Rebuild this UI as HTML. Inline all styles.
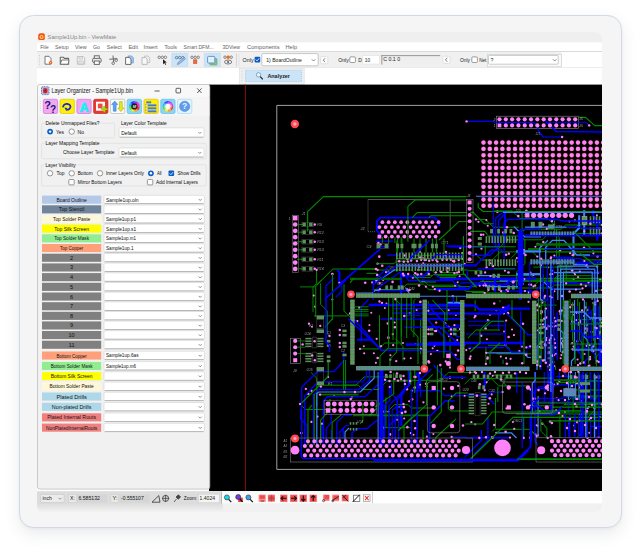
<!DOCTYPE html>
<html lang="en"><head><meta charset="utf-8"><title>ViewMate - Layer Organizer</title>
<style>
html,body{margin:0;padding:0;background:#fff;}
body{width:641px;height:551px;overflow:hidden;position:relative;font-family:"Liberation Sans",sans-serif;}
.card{position:absolute;left:19.2px;top:14.8px;width:602.6px;height:513.6px;border-radius:14.5px;background:#f5f5f6;border:1px solid #d3d9e2;box-sizing:border-box;box-shadow:0 6px 16px rgba(60,70,90,.11),0 1px 3px rgba(60,70,90,.05);}
svg{position:absolute;left:0;top:0;}
svg text{font-family:"Liberation Sans",sans-serif;}
</style></head><body>
<div class="card"></div>
<svg width="641" height="551" viewBox="0 0 641 551">
<defs>
<clipPath id="shot"><rect x="37" y="32" width="565" height="480" rx="6"/></clipPath>
<filter id="soft" x="0" y="0" width="100%" height="100%" filterUnits="userSpaceOnUse"><feGaussianBlur stdDeviation="0.35"/></filter>
<clipPath id="pcbclip"><rect x="210" y="84.5" width="392" height="406.7"/></clipPath>
</defs>
<g clip-path="url(#shot)">
<rect x="37.00" y="32.00" width="566.00" height="480.00" fill="#ffffff" />
<rect x="37.00" y="32.00" width="566.00" height="10.60" fill="#efefef" />
<rect x="38.20" y="33.30" width="6.60" height="6.80" fill="#f4511e" rx="1.5" />
<circle cx="41.50" cy="36.90" r="2.00" fill="#ffd54f" />
<circle cx="41.50" cy="36.90" r="0.90" fill="#f4511e" />
<text x="47.60" y="39.40" font-size="6.0" fill="#858585" textLength="68.60" lengthAdjust="spacingAndGlyphs" >Sample1Up.bin - ViewMate</text>
<rect x="37.00" y="42.60" width="566.00" height="8.70" fill="#ffffff" />
<text x="40.20" y="48.90" font-size="5.7" fill="#5e5e5e" textLength="8.40" lengthAdjust="spacingAndGlyphs" >File</text>
<text x="55.00" y="48.90" font-size="5.7" fill="#5e5e5e" textLength="13.70" lengthAdjust="spacingAndGlyphs" >Setup</text>
<text x="75.00" y="48.90" font-size="5.7" fill="#5e5e5e" textLength="11.50" lengthAdjust="spacingAndGlyphs" >View</text>
<text x="93.00" y="48.90" font-size="5.7" fill="#5e5e5e" textLength="7.00" lengthAdjust="spacingAndGlyphs" >Go</text>
<text x="106.80" y="48.90" font-size="5.7" fill="#5e5e5e" textLength="15.00" lengthAdjust="spacingAndGlyphs" >Select</text>
<text x="128.40" y="48.90" font-size="5.7" fill="#5e5e5e" textLength="9.60" lengthAdjust="spacingAndGlyphs" >Edit</text>
<text x="143.60" y="48.90" font-size="5.7" fill="#5e5e5e" textLength="14.00" lengthAdjust="spacingAndGlyphs" >Insert</text>
<text x="164.50" y="48.90" font-size="5.7" fill="#5e5e5e" textLength="12.50" lengthAdjust="spacingAndGlyphs" >Tools</text>
<text x="183.60" y="48.90" font-size="5.7" fill="#5e5e5e" textLength="30.00" lengthAdjust="spacingAndGlyphs" >Smart DFM...</text>
<text x="222.50" y="48.90" font-size="5.7" fill="#5e5e5e" textLength="17.50" lengthAdjust="spacingAndGlyphs" >3DView</text>
<text x="247.00" y="48.90" font-size="5.7" fill="#5e5e5e" textLength="32.50" lengthAdjust="spacingAndGlyphs" >Components</text>
<text x="285.50" y="48.90" font-size="5.7" fill="#5e5e5e" textLength="11.50" lengthAdjust="spacingAndGlyphs" >Help</text>
<rect x="37.00" y="51.20" width="566.00" height="1.00" fill="#d2d2d2" />
<rect x="37.00" y="52.00" width="524.50" height="15.60" fill="#f0f0f0" />
<rect x="561.50" y="52.00" width="41.50" height="15.60" fill="#ffffff" />
<rect x="37.00" y="67.40" width="566.00" height="0.80" fill="#e2e2e2" />
<rect x="39.20" y="55.00" width="0.80" height="0.90" fill="#c4c4c4" />
<rect x="39.20" y="57.20" width="0.80" height="0.90" fill="#c4c4c4" />
<rect x="39.20" y="59.40" width="0.80" height="0.90" fill="#c4c4c4" />
<rect x="39.20" y="61.60" width="0.80" height="0.90" fill="#c4c4c4" />
<rect x="39.20" y="63.80" width="0.80" height="0.90" fill="#c4c4c4" />
<path d="M45 56.3h4l2 2.2v5.7h-6z" fill="#fff" stroke="#6a6a6a" stroke-width="0.9" stroke-linejoin="round"/>
<circle cx="50.60" cy="62.60" r="1.70" fill="#ff5a1f" />
<circle cx="50.60" cy="62.60" r="0.70" fill="#ffd54f" />
<path d="M60.3 64.2v-7h3l1 1.2h4.3v5.8z" fill="#fffbe8" stroke="#6a6a6a" stroke-width="1.1" stroke-linejoin="round"/>
<path d="M60.3 64.2l1.4-4.2h7.3l-0.9 4.2z" fill="#fff" stroke="#6a6a6a" stroke-width="0.9" stroke-linejoin="round"/>
<path d="M77.3 56.5h6l1.4 1.4v6.3h-7.4z" fill="#f4f4f4" stroke="#bdbdbd" stroke-width="0.9"/>
<rect x="79.00" y="56.70" width="3.40" height="2.40" fill="#e4e4e4" stroke="#bdbdbd" stroke-width="0.6" />
<rect x="78.70" y="61.00" width="4.60" height="3.00" fill="#e4e4e4" stroke="#bdbdbd" stroke-width="0.6" />
<rect x="94.30" y="55.80" width="5.00" height="3.00" fill="#fff" stroke="#6a6a6a" stroke-width="1" />
<rect x="92.60" y="58.30" width="8.50" height="4.20" fill="#e9e9e9" stroke="#6a6a6a" stroke-width="1" rx="1.2" />
<rect x="94.30" y="61.00" width="5.00" height="3.40" fill="#fff" stroke="#6a6a6a" stroke-width="1" />
<line x1="113.00" y1="55.50" x2="113.60" y2="62.00" stroke="#6a6a6a" stroke-width="1" />
<line x1="109.30" y1="59.30" x2="117.30" y2="58.60" stroke="#6a6a6a" stroke-width="1" />
<circle cx="113.20" cy="63.20" r="1.30" fill="none" stroke="#6a6a6a" stroke-width="0.9" />
<circle cx="116.20" cy="60.20" r="1.30" fill="none" stroke="#6a6a6a" stroke-width="0.9" />
<path d="M128 55.9h3.6l1.8 1.8v5.3h-5.4z" fill="#9cc4ec" stroke="#6a9fd6" stroke-width="0.7"/>
<path d="M125.6 57.4h3.6l1.8 1.8v5.2h-5.4z" fill="#fff" stroke="#6a6a6a" stroke-width="1"/>
<path d="M144.5 56h3.6l1.6 1.6v5h-5.2z" fill="#ececec" stroke="#bdbdbd" stroke-width="0.8"/>
<path d="M142 57.6h3.6l1.6 1.6v5.2h-5.2z" fill="#f7f7f7" stroke="#b5b5b5" stroke-width="0.9"/>
<circle cx="159.20" cy="57.30" r="1.25" fill="none" stroke="#6a6a6a" stroke-width="0.8" />
<circle cx="162.30" cy="57.30" r="1.25" fill="none" stroke="#6a6a6a" stroke-width="0.8" />
<circle cx="165.40" cy="57.30" r="1.25" fill="none" stroke="#6a6a6a" stroke-width="0.8" />
<path d="M163 59.2v5l1.3-1.2 1 2 .8-.4-1-2h1.8z" fill="#222"/>
<rect x="171.80" y="53.40" width="16.00" height="13.00" fill="#cce4f7" stroke="#9ccaf0" stroke-width="0.7" stroke-dasharray="1 1"/>
<circle cx="176.60" cy="57.60" r="1.25" fill="none" stroke="#4a6a8a" stroke-width="0.8" />
<circle cx="179.70" cy="57.60" r="1.25" fill="none" stroke="#4a6a8a" stroke-width="0.8" />
<circle cx="182.80" cy="57.60" r="1.25" fill="none" stroke="#4a6a8a" stroke-width="0.8" />
<path d="M177.3 64.6l1-2.4 6-4.8 1.2 1.4-6 4.9z" fill="#9cc0e6" stroke="#5a7fa8" stroke-width="0.6"/>
<circle cx="192.00" cy="57.30" r="1.25" fill="none" stroke="#6a6a6a" stroke-width="0.8" />
<circle cx="195.10" cy="57.30" r="1.25" fill="none" stroke="#6a6a6a" stroke-width="0.8" />
<circle cx="198.20" cy="57.30" r="1.25" fill="none" stroke="#6a6a6a" stroke-width="0.8" />
<rect x="193.50" y="59.80" width="3.40" height="3.80" fill="#ee6a3a" stroke="#c8442a" stroke-width="0.5" />
<rect x="204.30" y="53.40" width="16.00" height="13.00" fill="#cce4f7" stroke="#9ccaf0" stroke-width="0.7" stroke-dasharray="1 1"/>
<rect x="209.80" y="58.60" width="7.20" height="6.40" fill="#86c488" stroke="#5aa45e" stroke-width="0.6" rx="0.8" />
<rect x="207.60" y="56.40" width="7.20" height="6.60" fill="#e2f0fc" stroke="#5a8cc8" stroke-width="0.9" rx="0.8" />
<circle cx="225.00" cy="57.20" r="1.25" fill="none" stroke="#6a6a6a" stroke-width="0.8" />
<circle cx="228.10" cy="57.20" r="1.35" fill="#ff7a1a" stroke="#e65100" stroke-width="0.6" />
<circle cx="231.20" cy="57.20" r="1.25" fill="none" stroke="#6a6a6a" stroke-width="0.8" />
<ellipse cx="228.1" cy="62" rx="3.6" ry="2" fill="none" stroke="#6a6a6a" stroke-width="0.9"/>
<circle cx="228.10" cy="62.00" r="1.00" fill="#555" />
<rect x="236.20" y="53.50" width="0.70" height="13.00" fill="#c8c8c8" />
<rect x="238.60" y="53.50" width="0.70" height="13.00" fill="#dedede" />
<text x="242.60" y="61.60" font-size="5" fill="#222" textLength="11.00" lengthAdjust="spacingAndGlyphs" >Only</text>
<rect x="254.60" y="56.80" width="5.60" height="5.60" fill="#0a5fc4" rx="1" />
<path d="M255.8 59.6l1.2 1.3 2.1-2.5" fill="none" stroke="#fff" stroke-width="0.8"/>
<rect x="261.80" y="53.60" width="56.40" height="12.20" fill="#ffffff" stroke="#b9b9b9" stroke-width="0.8" rx="1.2" />
<text x="266.30" y="61.70" font-size="5" fill="#222" textLength="35.50" lengthAdjust="spacingAndGlyphs" >1) BoardOutline</text>
<path d="M311.8 59.3l1.7 1.7 1.7-1.7" fill="none" stroke="#555" stroke-width="0.7"/>
<rect x="320.60" y="56.60" width="7.20" height="7.20" fill="#fdfdfd" stroke="#d9d9d9" stroke-width="0.7" rx="1" />
<path d="M325 58.3l-1.7 1.9 1.7 1.9" fill="none" stroke="#444" stroke-width="0.7"/>
<text x="338.30" y="61.60" font-size="5" fill="#222" textLength="10.50" lengthAdjust="spacingAndGlyphs" >Only</text>
<rect x="349.80" y="56.90" width="5.60" height="5.60" fill="#fff" stroke="#777" stroke-width="0.7" rx="1" />
<text x="358.20" y="61.60" font-size="5" fill="#222" >D</text>
<rect x="362.80" y="55.60" width="16.60" height="8.40" fill="#fff" stroke="#e0e0e0" stroke-width="0.6" />
<text x="364.80" y="61.60" font-size="5" fill="#222" textLength="5.40" lengthAdjust="spacingAndGlyphs" >10</text>
<rect x="381.40" y="55.20" width="58.80" height="9.40" fill="#efefef" />
<rect x="381.40" y="55.20" width="58.80" height="0.90" fill="#8e8e8e" />
<rect x="381.40" y="55.20" width="0.90" height="9.40" fill="#8e8e8e" />
<text x="383.20" y="61.00" font-size="5" fill="#222" textLength="17.00" lengthAdjust="spacingAndGlyphs" >C 0.1  0</text>
<rect x="442.80" y="56.20" width="7.20" height="7.20" fill="#fdfdfd" stroke="#d9d9d9" stroke-width="0.7" rx="1" />
<path d="M447.2 57.9l-1.7 1.9 1.7 1.9" fill="none" stroke="#444" stroke-width="0.7"/>
<text x="460.00" y="61.60" font-size="5" fill="#222" textLength="10.00" lengthAdjust="spacingAndGlyphs" >Only</text>
<rect x="471.80" y="56.90" width="5.60" height="5.60" fill="#fff" stroke="#777" stroke-width="0.7" rx="1" />
<text x="479.20" y="61.60" font-size="5" fill="#222" textLength="7.20" lengthAdjust="spacingAndGlyphs" >Net</text>
<rect x="487.40" y="54.40" width="74.00" height="12.40" fill="#fafafa" stroke="#cfcfcf" stroke-width="0.7" />
<rect x="488.40" y="55.40" width="69.80" height="8.80" fill="#fff" stroke="#b5b5b5" stroke-width="0.7" rx="1" />
<text x="490.40" y="62.00" font-size="5.2" fill="#222" >?</text>
<path d="M553 59.3l1.7 1.7 1.7-1.7" fill="none" stroke="#555" stroke-width="0.7"/>
<rect x="37.00" y="68.20" width="566.00" height="16.40" fill="#ffffff" />
<rect x="239.40" y="68.60" width="64.80" height="15.80" fill="#f0f0f0" stroke="#dcdcdc" stroke-width="0.6" />
<rect x="241.60" y="71.00" width="0.80" height="0.90" fill="#c4c4c4" />
<rect x="241.60" y="73.20" width="0.80" height="0.90" fill="#c4c4c4" />
<rect x="241.60" y="75.40" width="0.80" height="0.90" fill="#c4c4c4" />
<rect x="241.60" y="77.60" width="0.80" height="0.90" fill="#c4c4c4" />
<rect x="241.60" y="79.80" width="0.80" height="0.90" fill="#c4c4c4" />
<rect x="245.40" y="70.30" width="56.30" height="11.30" fill="#cce4f7" stroke="#8fc2ee" stroke-width="0.7" stroke-dasharray="1 1"/>
<circle cx="258.60" cy="74.80" r="2.20" fill="#e8f4ff" stroke="#5f86ad" stroke-width="0.7" />
<line x1="260.20" y1="76.60" x2="262.80" y2="79.40" stroke="#222" stroke-width="1.3" />
<text x="267.40" y="78.00" font-size="5.6" fill="#222" textLength="22.60" lengthAdjust="spacingAndGlyphs" font-weight="bold" >Analyzer</text>
<rect x="209.00" y="84.60" width="394.00" height="406.60" fill="#000000" />
<g clip-path="url(#pcbclip)"><g filter="url(#soft)">
<line x1="245.40" y1="84.00" x2="245.40" y2="492.00" stroke="#9a1010" stroke-width="0.9" />
<polyline points="604.0,105.4 276.8,105.4 276.8,469.4 604.0,469.4" fill="none" stroke="#b4b4b4" stroke-width="0.9" />
<polyline points="467.2,289.7 429.0,289.7 423.4,284.1 406.9,284.1 401.5,289.5 372.6,289.5" fill="none" stroke="#008a00" stroke-width="0.9774999999999999" stroke-linejoin="round"/>
<polyline points="593.3,285.0 554.2,285.0 551.3,288.0 510.5,288.0 505.5,293.0 484.1,293.0" fill="none" stroke="#008a00" stroke-width="0.9774999999999999" stroke-linejoin="round"/>
<polyline points="513.5,281.5 480.6,281.5 475.4,286.6 432.8,286.6" fill="none" stroke="#008a00" stroke-width="0.9774999999999999" stroke-linejoin="round"/>
<circle cx="432.84" cy="286.64" r="1.16" fill="#ff82f8" />
<polyline points="482.2,270.7 468.4,270.7 467.7,270.0 457.1,270.0" fill="none" stroke="#008a00" stroke-width="0.9774999999999999" stroke-linejoin="round"/>
<polyline points="471.6,292.5 484.2,292.5 484.6,293.0" fill="none" stroke="#008a00" stroke-width="0.9774999999999999" stroke-linejoin="round"/>
<circle cx="484.62" cy="293.00" r="1.16" fill="#ff82f8" />
<polyline points="359.7,279.4 356.0,279.4" fill="none" stroke="#008a00" stroke-width="0.9774999999999999" stroke-linejoin="round"/>
<polyline points="466.1,274.4 433.5,274.4 430.3,277.6 412.8,277.6" fill="none" stroke="#008a00" stroke-width="0.9774999999999999" stroke-linejoin="round"/>
<circle cx="412.83" cy="277.64" r="1.16" fill="#ff82f8" />
<polyline points="366.4,273.4 376.7,273.4 383.2,279.8" fill="none" stroke="#008a00" stroke-width="0.9774999999999999" stroke-linejoin="round"/>
<circle cx="383.16" cy="279.83" r="1.16" fill="#ff82f8" />
<polyline points="499.4,275.6 531.1,275.6 534.5,278.9 573.6,278.9" fill="none" stroke="#008a00" stroke-width="0.9774999999999999" stroke-linejoin="round"/>
<circle cx="573.59" cy="278.92" r="1.16" fill="#ff82f8" />
<polyline points="432.5,275.3 416.9,275.3 411.7,270.0 377.6,270.0" fill="none" stroke="#008a00" stroke-width="0.9774999999999999" stroke-linejoin="round"/>
<circle cx="377.62" cy="270.00" r="1.16" fill="#ff82f8" />
<polyline points="459.7,272.4 441.3,272.4 438.9,270.0" fill="none" stroke="#008a00" stroke-width="0.9774999999999999" stroke-linejoin="round"/>
<polyline points="483.9,291.4 465.9,291.4 459.8,285.2 428.3,285.2 424.0,280.9" fill="none" stroke="#008a00" stroke-width="0.9774999999999999" stroke-linejoin="round"/>
<circle cx="423.99" cy="280.92" r="1.16" fill="#ff82f8" />
<polyline points="457.2,275.7 437.3,275.7 431.6,270.0 418.4,270.0" fill="none" stroke="#008a00" stroke-width="0.9774999999999999" stroke-linejoin="round"/>
<circle cx="418.39" cy="270.00" r="1.16" fill="#ff82f8" />
<polyline points="501.1,291.2 535.6,291.2 544.4,282.5 576.7,282.5" fill="none" stroke="#0000ff" stroke-width="1.2320000000000002" stroke-linejoin="round"/>
<circle cx="501.11" cy="291.24" r="1.16" fill="#ff82f8" />
<polyline points="467.5,278.5 467.5,270.0" fill="none" stroke="#0000ff" stroke-width="1.2320000000000002" stroke-linejoin="round"/>
<polyline points="568.4,283.2 598.8,283.2 602.0,280.0" fill="none" stroke="#0000ff" stroke-width="1.2320000000000002" stroke-linejoin="round"/>
<polyline points="585.8,286.0 602.0,286.0" fill="none" stroke="#0000ff" stroke-width="1.2320000000000002" stroke-linejoin="round"/>
<circle cx="585.83" cy="285.97" r="1.16" fill="#ff82f8" />
<polyline points="478.3,284.1 519.7,284.1 524.6,279.2" fill="none" stroke="#0000ff" stroke-width="1.2320000000000002" stroke-linejoin="round"/>
<polyline points="478.6,275.6 495.5,275.6 500.8,280.9 542.8,280.9 551.1,289.1 581.5,289.1" fill="none" stroke="#3c82ff" stroke-width="1.2320000000000002" stroke-linejoin="round"/>
<circle cx="478.58" cy="275.55" r="1.16" fill="#ff82f8" />
<polyline points="531.0,291.9 531.0,293.0" fill="none" stroke="#0000ff" stroke-width="1.2320000000000002" stroke-linejoin="round"/>
<polyline points="434.8,289.1 468.5,289.1 472.9,284.7 505.6,284.7 511.8,278.6 535.9,278.6" fill="none" stroke="#0000ff" stroke-width="2.0944000000000003" stroke-linejoin="round"/>
<circle cx="434.81" cy="289.06" r="1.16" fill="#ff82f8" />
<polyline points="598.1,272.7 554.5,272.7 551.9,270.0" fill="none" stroke="#3c82ff" stroke-width="1.2320000000000002" stroke-linejoin="round"/>
<circle cx="598.07" cy="272.65" r="1.16" fill="#ff82f8" />
<polyline points="400.1,276.3 423.8,276.3 430.1,270.0" fill="none" stroke="#0000ff" stroke-width="2.0944000000000003" stroke-linejoin="round"/>
<polyline points="404.4,290.4 375.2,290.4 372.6,293.0 356.0,293.0" fill="none" stroke="#3c82ff" stroke-width="1.2320000000000002" stroke-linejoin="round"/>
<polyline points="408.5,290.7 379.7,290.7 377.4,293.0" fill="none" stroke="#0000ff" stroke-width="1.2320000000000002" stroke-linejoin="round"/>
<circle cx="408.47" cy="290.70" r="1.16" fill="#ff82f8" />
<circle cx="376.36" cy="280.14" r="1.28" fill="#ff82f8" />
<circle cx="459.67" cy="276.33" r="1.04" fill="#ff82f8" />
<circle cx="409.70" cy="289.95" r="1.16" fill="#ff82f8" />
<circle cx="552.77" cy="273.98" r="1.16" fill="#ff82f8" />
<circle cx="524.90" cy="291.07" r="1.16" fill="#ff82f8" />
<circle cx="392.57" cy="281.88" r="1.28" fill="#ff82f8" />
<circle cx="483.48" cy="285.59" r="1.16" fill="#ff82f8" />
<circle cx="588.65" cy="281.33" r="1.28" fill="#ff82f8" />
<circle cx="377.16" cy="275.09" r="1.28" fill="#ff82f8" />
<circle cx="493.46" cy="289.12" r="1.28" fill="#ff82f8" />
<circle cx="513.16" cy="282.02" r="1.28" fill="#ff82f8" />
<circle cx="419.10" cy="285.44" r="1.28" fill="#ff82f8" />
<circle cx="407.23" cy="289.57" r="1.28" fill="#ff82f8" />
<circle cx="484.96" cy="283.18" r="1.04" fill="#ff82f8" />
<circle cx="457.13" cy="272.63" r="1.04" fill="#ff82f8" />
<circle cx="504.89" cy="270.64" r="1.04" fill="#ff82f8" />
<circle cx="482.94" cy="279.21" r="1.28" fill="#ff82f8" />
<circle cx="386.00" cy="272.14" r="1.04" fill="#ff82f8" />
<circle cx="372.21" cy="282.39" r="1.16" fill="#ff82f8" />
<circle cx="582.51" cy="288.41" r="1.16" fill="#ff82f8" />
<circle cx="422.23" cy="280.88" r="1.04" fill="#ff82f8" />
<circle cx="439.56" cy="290.72" r="1.16" fill="#ff82f8" />
<circle cx="485.15" cy="272.50" r="1.16" fill="#ff82f8" />
<circle cx="508.00" cy="291.28" r="1.04" fill="#ff82f8" />
<circle cx="528.72" cy="292.48" r="1.04" fill="#ff82f8" />
<circle cx="403.75" cy="275.23" r="1.28" fill="#ff82f8" />
<circle cx="425.88" cy="286.64" r="1.04" fill="#ff82f8" />
<circle cx="508.46" cy="272.41" r="1.28" fill="#ff82f8" />
<circle cx="499.23" cy="289.59" r="1.28" fill="#ff82f8" />
<circle cx="417.64" cy="274.55" r="1.28" fill="#ff82f8" />
<circle cx="572.17" cy="270.53" r="1.28" fill="#ff82f8" />
<circle cx="457.70" cy="282.17" r="1.04" fill="#ff82f8" />
<circle cx="488.39" cy="289.87" r="1.28" fill="#ff82f8" />
<circle cx="513.06" cy="282.18" r="1.28" fill="#ff82f8" />
<circle cx="506.48" cy="289.71" r="1.04" fill="#ff82f8" />
<circle cx="581.05" cy="284.44" r="1.16" fill="#ff82f8" />
<circle cx="578.06" cy="277.27" r="1.16" fill="#ff82f8" />
<circle cx="575.10" cy="274.48" r="1.04" fill="#ff82f8" />
<circle cx="574.34" cy="273.08" r="1.04" fill="#ff82f8" />
<circle cx="388.61" cy="272.03" r="1.16" fill="#ff82f8" />
<circle cx="379.87" cy="289.14" r="1.16" fill="#ff82f8" />
<circle cx="489.65" cy="286.21" r="1.04" fill="#ff82f8" />
<circle cx="455.08" cy="285.76" r="1.04" fill="#ff82f8" />
<circle cx="379.63" cy="283.11" r="1.16" fill="#ff82f8" />
<circle cx="580.20" cy="292.27" r="1.04" fill="#ff82f8" />
<circle cx="529.36" cy="284.60" r="1.16" fill="#ff82f8" />
<circle cx="479.69" cy="285.77" r="1.04" fill="#ff82f8" />
<circle cx="553.50" cy="281.09" r="1.04" fill="#ff82f8" />
<circle cx="365.21" cy="282.69" r="1.28" fill="#ff82f8" />
<circle cx="578.65" cy="281.07" r="1.04" fill="#ff82f8" />
<polyline points="494.0,210.9 512.2,210.9 520.0,218.7 548.0,218.7 554.1,224.8" fill="none" stroke="#008a00" stroke-width="0.9774999999999999" stroke-linejoin="round"/>
<circle cx="554.13" cy="224.79" r="1.16" fill="#ff82f8" />
<polyline points="518.8,227.2 493.4,227.2 485.6,219.4 476.0,219.4" fill="none" stroke="#008a00" stroke-width="0.9774999999999999" stroke-linejoin="round"/>
<circle cx="476.00" cy="219.42" r="1.16" fill="#ff82f8" />
<polyline points="487.5,290.9 487.5,292.0" fill="none" stroke="#008a00" stroke-width="0.9774999999999999" stroke-linejoin="round"/>
<polyline points="545.9,251.6 517.7,251.6 510.9,258.4" fill="none" stroke="#008a00" stroke-width="0.9774999999999999" stroke-linejoin="round"/>
<polyline points="597.9,290.1 602.0,290.1" fill="none" stroke="#008a00" stroke-width="0.9774999999999999" stroke-linejoin="round"/>
<circle cx="602.00" cy="290.06" r="1.16" fill="#ff82f8" />
<polyline points="521.8,251.9 500.4,251.9 492.3,260.0 481.5,260.0 476.0,254.5" fill="none" stroke="#008a00" stroke-width="0.9774999999999999" stroke-linejoin="round"/>
<circle cx="476.00" cy="254.52" r="1.16" fill="#ff82f8" />
<polyline points="498.4,267.1 498.4,248.8 503.2,244.0 503.2,232.5" fill="none" stroke="#008a00" stroke-width="0.9774999999999999" stroke-linejoin="round"/>
<circle cx="503.17" cy="232.47" r="1.16" fill="#ff82f8" />
<polyline points="533.4,267.1 572.1,267.1 575.7,263.6 596.6,263.6 600.3,259.8" fill="none" stroke="#008a00" stroke-width="0.9774999999999999" stroke-linejoin="round"/>
<polyline points="591.3,275.7 557.5,275.7 551.7,281.5 538.3,281.5 533.4,286.3" fill="none" stroke="#008a00" stroke-width="0.9774999999999999" stroke-linejoin="round"/>
<circle cx="533.41" cy="286.32" r="1.16" fill="#ff82f8" />
<polyline points="556.6,228.8 556.6,257.6 560.8,261.8 560.8,292.0" fill="none" stroke="#008a00" stroke-width="0.9774999999999999" stroke-linejoin="round"/>
<polyline points="564.8,227.6 575.6,227.6 578.2,225.0 602.0,225.0" fill="none" stroke="#008a00" stroke-width="0.9774999999999999" stroke-linejoin="round"/>
<circle cx="602.00" cy="225.03" r="1.16" fill="#ff82f8" />
<polyline points="546.6,261.2 569.1,261.2 575.4,254.9" fill="none" stroke="#008a00" stroke-width="0.9774999999999999" stroke-linejoin="round"/>
<polyline points="599.5,262.3 602.0,262.3" fill="none" stroke="#008a00" stroke-width="0.9774999999999999" stroke-linejoin="round"/>
<polyline points="543.4,274.7 543.4,292.0" fill="none" stroke="#008a00" stroke-width="0.9774999999999999" stroke-linejoin="round"/>
<polyline points="554.4,220.2 554.4,232.4 559.2,237.2 559.2,257.2 566.2,264.1 566.2,283.4" fill="none" stroke="#008a00" stroke-width="0.9774999999999999" stroke-linejoin="round"/>
<circle cx="566.16" cy="283.45" r="1.16" fill="#ff82f8" />
<polyline points="522.1,212.4 522.1,237.0 524.9,239.9 524.9,263.6 516.7,271.8 516.7,288.6" fill="none" stroke="#008a00" stroke-width="0.9774999999999999" stroke-linejoin="round"/>
<polyline points="562.7,234.3 547.9,234.3 542.4,239.8 507.1,239.8" fill="none" stroke="#008a00" stroke-width="0.9774999999999999" stroke-linejoin="round"/>
<circle cx="507.07" cy="239.80" r="1.16" fill="#ff82f8" />
<polyline points="580.8,228.7 602.0,228.7" fill="none" stroke="#008a00" stroke-width="0.9774999999999999" stroke-linejoin="round"/>
<polyline points="516.6,251.0 531.7,251.0 537.3,256.6" fill="none" stroke="#008a00" stroke-width="0.9774999999999999" stroke-linejoin="round"/>
<circle cx="537.32" cy="256.59" r="1.16" fill="#ff82f8" />
<polyline points="577.3,233.4 602.0,233.4" fill="none" stroke="#008a00" stroke-width="0.9774999999999999" stroke-linejoin="round"/>
<circle cx="602.00" cy="233.42" r="1.16" fill="#ff82f8" />
<polyline points="582.2,259.9 602.0,259.9" fill="none" stroke="#008a00" stroke-width="0.9774999999999999" stroke-linejoin="round"/>
<polyline points="578.7,225.0 565.4,225.0 561.1,229.2 525.1,229.2 518.3,236.0 486.9,236.0" fill="none" stroke="#008a00" stroke-width="0.9774999999999999" stroke-linejoin="round"/>
<polyline points="584.2,235.5 584.2,210.0" fill="none" stroke="#3c82ff" stroke-width="2.0944000000000003" stroke-linejoin="round"/>
<polyline points="573.5,254.8 573.5,233.8 579.2,228.1 579.2,215.2" fill="none" stroke="#3c82ff" stroke-width="2.0944000000000003" stroke-linejoin="round"/>
<circle cx="573.46" cy="254.79" r="1.16" fill="#ff82f8" />
<polyline points="534.9,262.0 571.7,262.0 574.3,264.7 585.0,264.7 588.5,268.2" fill="none" stroke="#3c82ff" stroke-width="1.2320000000000002" stroke-linejoin="round"/>
<polyline points="597.3,240.7 597.3,220.3 593.3,216.3 593.3,210.0" fill="none" stroke="#0000ff" stroke-width="2.0944000000000003" stroke-linejoin="round"/>
<polyline points="550.7,258.1 550.7,282.0 546.1,286.7" fill="none" stroke="#0000ff" stroke-width="1.2320000000000002" stroke-linejoin="round"/>
<circle cx="550.74" cy="258.14" r="1.16" fill="#ff82f8" />
<polyline points="596.0,290.9 596.0,292.0" fill="none" stroke="#3c82ff" stroke-width="1.2320000000000002" stroke-linejoin="round"/>
<circle cx="596.05" cy="290.91" r="1.16" fill="#ff82f8" />
<polyline points="580.1,272.1 602.0,272.1" fill="none" stroke="#0000ff" stroke-width="1.2320000000000002" stroke-linejoin="round"/>
<polyline points="505.0,241.6 505.0,210.0" fill="none" stroke="#0000ff" stroke-width="2.0944000000000003" stroke-linejoin="round"/>
<polyline points="551.1,257.3 570.4,257.3 575.2,262.1 595.1,262.1" fill="none" stroke="#0000ff" stroke-width="1.2320000000000002" stroke-linejoin="round"/>
<circle cx="551.08" cy="257.33" r="1.16" fill="#ff82f8" />
<polyline points="594.5,260.9 602.0,260.9" fill="none" stroke="#0000ff" stroke-width="1.2320000000000002" stroke-linejoin="round"/>
<polyline points="585.1,223.4 602.0,223.4" fill="none" stroke="#0000ff" stroke-width="1.2320000000000002" stroke-linejoin="round"/>
<circle cx="585.06" cy="223.42" r="1.16" fill="#ff82f8" />
<polyline points="556.3,258.4 580.0,258.4 588.6,266.9" fill="none" stroke="#0000ff" stroke-width="1.2320000000000002" stroke-linejoin="round"/>
<polyline points="550.4,274.3 550.4,292.0" fill="none" stroke="#0000ff" stroke-width="1.2320000000000002" stroke-linejoin="round"/>
<circle cx="550.37" cy="274.32" r="1.16" fill="#ff82f8" />
<polyline points="495.1,278.6 495.1,292.0" fill="none" stroke="#0000ff" stroke-width="2.0944000000000003" stroke-linejoin="round"/>
<circle cx="506.95" cy="227.28" r="1.28" fill="#ff82f8" />
<circle cx="523.84" cy="250.20" r="1.28" fill="#ff82f8" />
<circle cx="487.74" cy="225.79" r="1.04" fill="#ff82f8" />
<circle cx="523.87" cy="253.36" r="1.16" fill="#ff82f8" />
<circle cx="593.41" cy="253.33" r="1.16" fill="#ff82f8" />
<circle cx="574.96" cy="220.32" r="1.04" fill="#ff82f8" />
<circle cx="572.43" cy="255.24" r="1.04" fill="#ff82f8" />
<circle cx="508.85" cy="253.77" r="1.16" fill="#ff82f8" />
<circle cx="489.68" cy="260.62" r="1.04" fill="#ff82f8" />
<circle cx="597.50" cy="256.58" r="1.28" fill="#ff82f8" />
<circle cx="483.29" cy="234.70" r="1.16" fill="#ff82f8" />
<circle cx="524.39" cy="279.01" r="1.04" fill="#ff82f8" />
<circle cx="485.79" cy="285.46" r="1.28" fill="#ff82f8" />
<circle cx="533.33" cy="274.67" r="1.28" fill="#ff82f8" />
<circle cx="526.35" cy="210.67" r="1.28" fill="#ff82f8" />
<circle cx="522.94" cy="283.83" r="1.04" fill="#ff82f8" />
<circle cx="518.27" cy="215.96" r="1.28" fill="#ff82f8" />
<circle cx="554.42" cy="291.21" r="1.04" fill="#ff82f8" />
<circle cx="513.75" cy="232.95" r="1.28" fill="#ff82f8" />
<circle cx="570.09" cy="252.99" r="1.28" fill="#ff82f8" />
<circle cx="561.33" cy="281.27" r="1.28" fill="#ff82f8" />
<circle cx="597.21" cy="266.78" r="1.16" fill="#ff82f8" />
<circle cx="486.34" cy="220.11" r="1.04" fill="#ff82f8" />
<circle cx="490.47" cy="276.23" r="1.04" fill="#ff82f8" />
<circle cx="551.96" cy="221.00" r="1.28" fill="#ff82f8" />
<circle cx="543.13" cy="224.52" r="1.16" fill="#ff82f8" />
<circle cx="599.22" cy="228.32" r="1.16" fill="#ff82f8" />
<circle cx="478.46" cy="221.85" r="1.16" fill="#ff82f8" />
<circle cx="547.73" cy="267.49" r="1.04" fill="#ff82f8" />
<circle cx="579.82" cy="271.58" r="1.16" fill="#ff82f8" />
<circle cx="530.48" cy="272.63" r="1.04" fill="#ff82f8" />
<circle cx="497.35" cy="211.70" r="1.28" fill="#ff82f8" />
<circle cx="520.73" cy="233.99" r="1.28" fill="#ff82f8" />
<circle cx="537.75" cy="244.02" r="1.16" fill="#ff82f8" />
<circle cx="481.05" cy="234.82" r="1.28" fill="#ff82f8" />
<circle cx="554.37" cy="255.49" r="1.04" fill="#ff82f8" />
<circle cx="513.63" cy="281.50" r="1.16" fill="#ff82f8" />
<circle cx="493.55" cy="278.78" r="1.16" fill="#ff82f8" />
<circle cx="506.14" cy="254.72" r="1.28" fill="#ff82f8" />
<circle cx="588.56" cy="282.52" r="1.04" fill="#ff82f8" />
<circle cx="596.92" cy="215.41" r="1.04" fill="#ff82f8" />
<circle cx="569.62" cy="291.48" r="1.28" fill="#ff82f8" />
<circle cx="518.90" cy="231.94" r="1.04" fill="#ff82f8" />
<circle cx="531.09" cy="284.74" r="1.16" fill="#ff82f8" />
<circle cx="518.49" cy="261.77" r="1.16" fill="#ff82f8" />
<circle cx="559.20" cy="249.36" r="1.04" fill="#ff82f8" />
<circle cx="584.40" cy="260.93" r="1.04" fill="#ff82f8" />
<circle cx="560.27" cy="250.47" r="1.04" fill="#ff82f8" />
<circle cx="540.81" cy="265.23" r="1.16" fill="#ff82f8" />
<circle cx="543.27" cy="241.97" r="1.16" fill="#ff82f8" />
<circle cx="600.09" cy="279.34" r="1.28" fill="#ff82f8" />
<circle cx="492.98" cy="265.97" r="1.28" fill="#ff82f8" />
<circle cx="535.42" cy="246.71" r="1.04" fill="#ff82f8" />
<circle cx="490.45" cy="263.30" r="1.04" fill="#ff82f8" />
<circle cx="498.15" cy="261.18" r="1.16" fill="#ff82f8" />
<circle cx="535.18" cy="285.71" r="1.16" fill="#ff82f8" />
<circle cx="541.09" cy="245.58" r="1.16" fill="#ff82f8" />
<circle cx="590.43" cy="223.85" r="1.28" fill="#ff82f8" />
<circle cx="557.91" cy="263.31" r="1.04" fill="#ff82f8" />
<circle cx="486.60" cy="267.51" r="1.28" fill="#ff82f8" />
<circle cx="516.86" cy="258.14" r="1.04" fill="#ff82f8" />
<circle cx="481.46" cy="248.69" r="1.16" fill="#ff82f8" />
<circle cx="569.42" cy="221.47" r="1.04" fill="#ff82f8" />
<circle cx="584.05" cy="247.75" r="1.28" fill="#ff82f8" />
<circle cx="546.81" cy="228.82" r="1.16" fill="#ff82f8" />
<circle cx="575.95" cy="289.61" r="1.16" fill="#ff82f8" />
<circle cx="541.09" cy="258.75" r="1.28" fill="#ff82f8" />
<circle cx="584.32" cy="231.38" r="1.04" fill="#ff82f8" />
<circle cx="525.50" cy="254.97" r="1.28" fill="#ff82f8" />
<circle cx="586.67" cy="264.91" r="1.16" fill="#ff82f8" />
<polyline points="398.7,343.0 384.8,343.0 378.9,348.9 360.0,348.9" fill="none" stroke="#008a00" stroke-width="0.9774999999999999" stroke-linejoin="round"/>
<circle cx="360.03" cy="348.92" r="1.16" fill="#ff82f8" />
<polyline points="420.6,354.1 420.6,319.3 421.0,318.8" fill="none" stroke="#008a00" stroke-width="0.9774999999999999" stroke-linejoin="round"/>
<polyline points="388.2,348.8 421.0,348.8" fill="none" stroke="#008a00" stroke-width="0.9774999999999999" stroke-linejoin="round"/>
<circle cx="421.00" cy="348.83" r="1.16" fill="#ff82f8" />
<polyline points="401.2,335.6 401.2,305.3 395.8,299.9 395.8,299.0" fill="none" stroke="#008a00" stroke-width="0.9774999999999999" stroke-linejoin="round"/>
<circle cx="395.84" cy="299.00" r="1.16" fill="#ff82f8" />
<polyline points="413.9,337.1 413.9,300.5 415.4,299.0" fill="none" stroke="#008a00" stroke-width="0.9774999999999999" stroke-linejoin="round"/>
<polyline points="403.0,360.6 403.0,346.3 395.3,338.6" fill="none" stroke="#008a00" stroke-width="0.9774999999999999" stroke-linejoin="round"/>
<polyline points="404.1,315.6 421.0,315.6" fill="none" stroke="#0000ff" stroke-width="1.2320000000000002" stroke-linejoin="round"/>
<polyline points="370.5,339.7 357.0,339.7" fill="none" stroke="#0000ff" stroke-width="2.0944000000000003" stroke-linejoin="round"/>
<polyline points="361.4,341.5 361.4,306.7 368.1,300.0 368.1,299.0" fill="none" stroke="#0000ff" stroke-width="1.2320000000000002" stroke-linejoin="round"/>
<circle cx="393.16" cy="345.13" r="1.16" fill="#ff82f8" />
<circle cx="390.41" cy="355.21" r="1.04" fill="#ff82f8" />
<circle cx="357.37" cy="321.09" r="1.16" fill="#ff82f8" />
<circle cx="392.82" cy="334.16" r="1.16" fill="#ff82f8" />
<circle cx="371.28" cy="312.68" r="1.04" fill="#ff82f8" />
<circle cx="381.07" cy="346.14" r="1.04" fill="#ff82f8" />
<circle cx="404.26" cy="316.05" r="1.28" fill="#ff82f8" />
<circle cx="409.75" cy="313.20" r="1.16" fill="#ff82f8" />
<circle cx="394.63" cy="322.47" r="1.04" fill="#ff82f8" />
<circle cx="394.89" cy="327.24" r="1.28" fill="#ff82f8" />
<circle cx="379.45" cy="301.52" r="1.16" fill="#ff82f8" />
<circle cx="386.48" cy="303.53" r="1.04" fill="#ff82f8" />
<circle cx="395.39" cy="299.27" r="1.16" fill="#ff82f8" />
<circle cx="369.19" cy="330.73" r="1.28" fill="#ff82f8" />
<circle cx="381.94" cy="303.05" r="1.28" fill="#ff82f8" />
<circle cx="384.84" cy="308.04" r="1.04" fill="#ff82f8" />
<circle cx="364.16" cy="353.35" r="1.04" fill="#ff82f8" />
<circle cx="376.71" cy="338.81" r="1.16" fill="#ff82f8" />
<circle cx="359.14" cy="307.47" r="1.16" fill="#ff82f8" />
<circle cx="388.42" cy="337.63" r="1.28" fill="#ff82f8" />
<circle cx="420.35" cy="301.88" r="1.28" fill="#ff82f8" />
<circle cx="375.91" cy="362.86" r="1.04" fill="#ff82f8" />
<circle cx="377.65" cy="357.93" r="1.28" fill="#ff82f8" />
<circle cx="404.34" cy="358.55" r="1.04" fill="#ff82f8" />
<circle cx="415.39" cy="343.98" r="1.04" fill="#ff82f8" />
<circle cx="387.65" cy="323.53" r="1.16" fill="#ff82f8" />
<circle cx="373.90" cy="353.22" r="1.04" fill="#ff82f8" />
<circle cx="402.98" cy="342.99" r="1.04" fill="#ff82f8" />
<circle cx="390.27" cy="359.75" r="1.16" fill="#ff82f8" />
<circle cx="369.48" cy="324.94" r="1.04" fill="#ff82f8" />
<circle cx="410.74" cy="358.24" r="1.04" fill="#ff82f8" />
<circle cx="396.25" cy="361.21" r="1.16" fill="#ff82f8" />
<circle cx="391.15" cy="318.77" r="1.28" fill="#ff82f8" />
<circle cx="376.06" cy="304.73" r="1.04" fill="#ff82f8" />
<circle cx="416.63" cy="310.02" r="1.04" fill="#ff82f8" />
<circle cx="363.86" cy="346.27" r="1.04" fill="#ff82f8" />
<polyline points="436.7,314.4 428.0,314.4" fill="none" stroke="#008a00" stroke-width="0.9774999999999999" stroke-linejoin="round"/>
<polyline points="455.9,318.7 460.0,318.7" fill="none" stroke="#008a00" stroke-width="0.9774999999999999" stroke-linejoin="round"/>
<polyline points="428.3,301.0 428.3,310.9" fill="none" stroke="#008a00" stroke-width="0.9774999999999999" stroke-linejoin="round"/>
<circle cx="428.34" cy="310.87" r="1.16" fill="#ff82f8" />
<polyline points="456.7,302.8 456.7,296.0" fill="none" stroke="#008a00" stroke-width="0.9774999999999999" stroke-linejoin="round"/>
<polyline points="448.0,330.9 458.2,330.9 460.0,329.1" fill="none" stroke="#008a00" stroke-width="0.9774999999999999" stroke-linejoin="round"/>
<circle cx="460.00" cy="329.13" r="1.16" fill="#ff82f8" />
<polyline points="450.0,338.2 450.0,367.6" fill="none" stroke="#008a00" stroke-width="0.9774999999999999" stroke-linejoin="round"/>
<circle cx="449.96" cy="367.61" r="1.16" fill="#ff82f8" />
<polyline points="447.1,302.8 460.0,302.8" fill="none" stroke="#3c82ff" stroke-width="2.0944000000000003" stroke-linejoin="round"/>
<polyline points="454.4,325.2 460.0,325.2" fill="none" stroke="#0000ff" stroke-width="1.2320000000000002" stroke-linejoin="round"/>
<circle cx="454.41" cy="325.21" r="1.16" fill="#ff82f8" />
<polyline points="453.5,302.9 453.5,296.0" fill="none" stroke="#0000ff" stroke-width="1.2320000000000002" stroke-linejoin="round"/>
<circle cx="459.67" cy="304.19" r="1.04" fill="#ff82f8" />
<circle cx="452.80" cy="296.13" r="1.16" fill="#ff82f8" />
<circle cx="455.94" cy="315.05" r="1.04" fill="#ff82f8" />
<circle cx="434.65" cy="344.97" r="1.16" fill="#ff82f8" />
<circle cx="437.32" cy="350.83" r="1.16" fill="#ff82f8" />
<circle cx="429.01" cy="362.36" r="1.28" fill="#ff82f8" />
<circle cx="458.15" cy="350.52" r="1.28" fill="#ff82f8" />
<circle cx="448.63" cy="310.21" r="1.16" fill="#ff82f8" />
<circle cx="440.29" cy="365.12" r="1.28" fill="#ff82f8" />
<circle cx="445.72" cy="361.51" r="1.16" fill="#ff82f8" />
<circle cx="457.29" cy="340.12" r="1.04" fill="#ff82f8" />
<circle cx="448.58" cy="326.92" r="1.16" fill="#ff82f8" />
<circle cx="430.87" cy="354.11" r="1.04" fill="#ff82f8" />
<circle cx="434.42" cy="345.84" r="1.04" fill="#ff82f8" />
<circle cx="434.77" cy="331.07" r="1.04" fill="#ff82f8" />
<circle cx="445.43" cy="323.40" r="1.04" fill="#ff82f8" />
<circle cx="436.22" cy="322.54" r="1.16" fill="#ff82f8" />
<circle cx="441.40" cy="328.03" r="1.04" fill="#ff82f8" />
<circle cx="432.69" cy="348.23" r="1.04" fill="#ff82f8" />
<circle cx="428.55" cy="361.39" r="1.28" fill="#ff82f8" />
<circle cx="455.52" cy="355.04" r="1.28" fill="#ff82f8" />
<circle cx="449.02" cy="336.13" r="1.04" fill="#ff82f8" />
<polyline points="499.9,302.3 499.9,300.0" fill="none" stroke="#008a00" stroke-width="0.9774999999999999" stroke-linejoin="round"/>
<polyline points="488.0,345.3 505.9,345.3 509.9,349.3" fill="none" stroke="#008a00" stroke-width="0.9774999999999999" stroke-linejoin="round"/>
<polyline points="485.9,346.5 485.9,364.0" fill="none" stroke="#008a00" stroke-width="0.9774999999999999" stroke-linejoin="round"/>
<circle cx="485.87" cy="364.00" r="1.16" fill="#ff82f8" />
<polyline points="503.0,359.5 503.0,364.0" fill="none" stroke="#008a00" stroke-width="0.9774999999999999" stroke-linejoin="round"/>
<polyline points="475.1,311.0 475.1,300.0" fill="none" stroke="#008a00" stroke-width="0.9774999999999999" stroke-linejoin="round"/>
<polyline points="496.5,353.8 531.0,353.8" fill="none" stroke="#008a00" stroke-width="0.9774999999999999" stroke-linejoin="round"/>
<polyline points="486.2,352.8 523.4,352.8 528.1,357.5 531.0,357.5" fill="none" stroke="#3c82ff" stroke-width="1.2320000000000002" stroke-linejoin="round"/>
<circle cx="486.23" cy="352.80" r="1.16" fill="#ff82f8" />
<polyline points="526.3,347.4 531.0,347.4" fill="none" stroke="#0000ff" stroke-width="2.0944000000000003" stroke-linejoin="round"/>
<circle cx="526.32" cy="347.43" r="1.16" fill="#ff82f8" />
<polyline points="498.5,330.4 498.5,313.4 505.9,306.0" fill="none" stroke="#0000ff" stroke-width="1.2320000000000002" stroke-linejoin="round"/>
<circle cx="469.67" cy="348.24" r="1.16" fill="#ff82f8" />
<circle cx="494.19" cy="303.58" r="1.28" fill="#ff82f8" />
<circle cx="485.65" cy="328.52" r="1.28" fill="#ff82f8" />
<circle cx="519.41" cy="351.25" r="1.16" fill="#ff82f8" />
<circle cx="466.98" cy="342.83" r="1.16" fill="#ff82f8" />
<circle cx="506.07" cy="358.16" r="1.04" fill="#ff82f8" />
<circle cx="475.35" cy="315.96" r="1.28" fill="#ff82f8" />
<circle cx="487.52" cy="358.43" r="1.28" fill="#ff82f8" />
<circle cx="504.15" cy="331.48" r="1.04" fill="#ff82f8" />
<circle cx="505.32" cy="344.93" r="1.16" fill="#ff82f8" />
<circle cx="526.16" cy="354.74" r="1.28" fill="#ff82f8" />
<circle cx="521.94" cy="346.65" r="1.04" fill="#ff82f8" />
<circle cx="530.17" cy="346.32" r="1.16" fill="#ff82f8" />
<circle cx="487.76" cy="357.21" r="1.04" fill="#ff82f8" />
<circle cx="487.82" cy="320.17" r="1.16" fill="#ff82f8" />
<circle cx="513.95" cy="335.06" r="1.16" fill="#ff82f8" />
<circle cx="503.18" cy="307.78" r="1.28" fill="#ff82f8" />
<circle cx="466.30" cy="350.11" r="1.04" fill="#ff82f8" />
<circle cx="512.04" cy="329.56" r="1.04" fill="#ff82f8" />
<circle cx="508.62" cy="337.04" r="1.28" fill="#ff82f8" />
<circle cx="506.12" cy="320.62" r="1.16" fill="#ff82f8" />
<circle cx="481.18" cy="335.65" r="1.28" fill="#ff82f8" />
<circle cx="506.87" cy="363.71" r="1.28" fill="#ff82f8" />
<circle cx="496.35" cy="310.01" r="1.28" fill="#ff82f8" />
<circle cx="510.56" cy="358.86" r="1.16" fill="#ff82f8" />
<circle cx="522.25" cy="363.18" r="1.28" fill="#ff82f8" />
<circle cx="528.53" cy="301.83" r="1.16" fill="#ff82f8" />
<circle cx="474.44" cy="317.47" r="1.04" fill="#ff82f8" />
<circle cx="469.93" cy="358.64" r="1.28" fill="#ff82f8" />
<circle cx="503.93" cy="313.61" r="1.04" fill="#ff82f8" />
<circle cx="508.00" cy="313.13" r="1.28" fill="#ff82f8" />
<circle cx="470.60" cy="356.41" r="1.16" fill="#ff82f8" />
<circle cx="500.80" cy="356.61" r="1.04" fill="#ff82f8" />
<circle cx="486.94" cy="339.28" r="1.04" fill="#ff82f8" />
<circle cx="489.94" cy="314.47" r="1.28" fill="#ff82f8" />
<circle cx="523.02" cy="323.83" r="1.28" fill="#ff82f8" />
<polyline points="545.0,312.8 545.0,296.0" fill="none" stroke="#008a00" stroke-width="0.9774999999999999" stroke-linejoin="round"/>
<circle cx="544.98" cy="296.00" r="1.16" fill="#ff82f8" />
<polyline points="555.7,366.4 555.7,370.0" fill="none" stroke="#008a00" stroke-width="0.9774999999999999" stroke-linejoin="round"/>
<polyline points="550.0,340.3 550.0,370.0" fill="none" stroke="#008a00" stroke-width="0.9774999999999999" stroke-linejoin="round"/>
<circle cx="550.01" cy="370.00" r="1.16" fill="#ff82f8" />
<polyline points="563.6,317.7 563.6,296.0" fill="none" stroke="#008a00" stroke-width="0.9774999999999999" stroke-linejoin="round"/>
<polyline points="545.6,319.4 545.6,336.0 540.0,341.6 540.0,369.4" fill="none" stroke="#008a00" stroke-width="0.9774999999999999" stroke-linejoin="round"/>
<polyline points="556.6,305.1 537.0,305.1" fill="none" stroke="#008a00" stroke-width="0.9774999999999999" stroke-linejoin="round"/>
<polyline points="552.1,344.8 552.1,370.0" fill="none" stroke="#008a00" stroke-width="0.9774999999999999" stroke-linejoin="round"/>
<polyline points="543.4,303.5 543.4,296.0" fill="none" stroke="#008a00" stroke-width="0.9774999999999999" stroke-linejoin="round"/>
<polyline points="563.3,352.6 563.3,333.1 557.1,326.8" fill="none" stroke="#3c82ff" stroke-width="1.2320000000000002" stroke-linejoin="round"/>
<polyline points="538.1,330.4 538.1,350.8 541.0,353.6 541.0,370.0" fill="none" stroke="#0000ff" stroke-width="1.2320000000000002" stroke-linejoin="round"/>
<circle cx="538.08" cy="330.37" r="1.16" fill="#ff82f8" />
<polyline points="540.2,328.1 540.2,343.2 537.0,346.4 537.0,370.0" fill="none" stroke="#3c82ff" stroke-width="1.2320000000000002" stroke-linejoin="round"/>
<circle cx="540.24" cy="328.12" r="1.16" fill="#ff82f8" />
<polyline points="550.7,338.4 550.7,298.3 548.4,296.0" fill="none" stroke="#0000ff" stroke-width="1.2320000000000002" stroke-linejoin="round"/>
<circle cx="550.67" cy="338.36" r="1.16" fill="#ff82f8" />
<polyline points="550.7,301.9 550.7,296.0" fill="none" stroke="#0000ff" stroke-width="1.2320000000000002" stroke-linejoin="round"/>
<polyline points="548.3,324.9 537.0,324.9" fill="none" stroke="#0000ff" stroke-width="1.2320000000000002" stroke-linejoin="round"/>
<polyline points="547.8,300.3 537.0,300.3" fill="none" stroke="#0000ff" stroke-width="1.2320000000000002" stroke-linejoin="round"/>
<polyline points="554.2,355.1 554.2,321.8 559.0,317.1" fill="none" stroke="#0000ff" stroke-width="1.2320000000000002" stroke-linejoin="round"/>
<circle cx="554.23" cy="355.07" r="1.16" fill="#ff82f8" />
<circle cx="537.63" cy="364.91" r="1.28" fill="#ff82f8" />
<circle cx="545.03" cy="344.36" r="1.28" fill="#ff82f8" />
<circle cx="563.69" cy="307.50" r="1.04" fill="#ff82f8" />
<circle cx="563.03" cy="346.97" r="1.28" fill="#ff82f8" />
<circle cx="540.29" cy="366.16" r="1.04" fill="#ff82f8" />
<circle cx="546.65" cy="337.97" r="1.04" fill="#ff82f8" />
<circle cx="542.10" cy="302.65" r="1.04" fill="#ff82f8" />
<circle cx="561.74" cy="338.49" r="1.04" fill="#ff82f8" />
<circle cx="556.02" cy="353.71" r="1.04" fill="#ff82f8" />
<circle cx="548.69" cy="351.71" r="1.04" fill="#ff82f8" />
<circle cx="556.10" cy="325.83" r="1.16" fill="#ff82f8" />
<circle cx="540.44" cy="324.36" r="1.04" fill="#ff82f8" />
<circle cx="546.90" cy="328.64" r="1.16" fill="#ff82f8" />
<circle cx="537.47" cy="310.25" r="1.04" fill="#ff82f8" />
<circle cx="542.95" cy="324.39" r="1.04" fill="#ff82f8" />
<circle cx="553.62" cy="326.51" r="1.28" fill="#ff82f8" />
<circle cx="555.70" cy="321.28" r="1.28" fill="#ff82f8" />
<circle cx="564.83" cy="321.82" r="1.28" fill="#ff82f8" />
<circle cx="541.11" cy="313.44" r="1.16" fill="#ff82f8" />
<circle cx="541.68" cy="300.17" r="1.04" fill="#ff82f8" />
<circle cx="561.31" cy="343.21" r="1.28" fill="#ff82f8" />
<circle cx="549.53" cy="364.92" r="1.04" fill="#ff82f8" />
<circle cx="562.10" cy="296.00" r="1.28" fill="#ff82f8" />
<circle cx="561.75" cy="310.43" r="1.28" fill="#ff82f8" />
<circle cx="545.24" cy="345.44" r="1.28" fill="#ff82f8" />
<circle cx="548.54" cy="358.33" r="1.04" fill="#ff82f8" />
<circle cx="540.28" cy="356.88" r="1.28" fill="#ff82f8" />
<circle cx="537.03" cy="305.27" r="1.28" fill="#ff82f8" />
<circle cx="554.20" cy="339.41" r="1.16" fill="#ff82f8" />
<circle cx="549.51" cy="340.19" r="1.16" fill="#ff82f8" />
<circle cx="552.76" cy="355.63" r="1.28" fill="#ff82f8" />
<circle cx="539.31" cy="347.03" r="1.04" fill="#ff82f8" />
<circle cx="554.27" cy="318.03" r="1.16" fill="#ff82f8" />
<circle cx="555.28" cy="347.62" r="1.28" fill="#ff82f8" />
<circle cx="545.84" cy="362.80" r="1.28" fill="#ff82f8" />
<circle cx="544.30" cy="318.72" r="1.28" fill="#ff82f8" />
<circle cx="564.77" cy="337.78" r="1.16" fill="#ff82f8" />
<circle cx="537.61" cy="304.51" r="1.16" fill="#ff82f8" />
<circle cx="544.64" cy="360.04" r="1.16" fill="#ff82f8" />
<circle cx="560.39" cy="312.16" r="1.04" fill="#ff82f8" />
<circle cx="550.29" cy="296.30" r="1.04" fill="#ff82f8" />
<circle cx="561.44" cy="355.11" r="1.04" fill="#ff82f8" />
<circle cx="563.80" cy="367.85" r="1.16" fill="#ff82f8" />
<circle cx="548.45" cy="352.93" r="1.28" fill="#ff82f8" />
<circle cx="564.21" cy="315.78" r="1.04" fill="#ff82f8" />
<circle cx="545.89" cy="308.56" r="1.16" fill="#ff82f8" />
<circle cx="553.44" cy="322.97" r="1.04" fill="#ff82f8" />
<circle cx="541.40" cy="311.00" r="1.28" fill="#ff82f8" />
<circle cx="551.66" cy="335.43" r="1.16" fill="#ff82f8" />
<circle cx="537.01" cy="297.45" r="1.04" fill="#ff82f8" />
<circle cx="560.64" cy="358.29" r="1.04" fill="#ff82f8" />
<circle cx="539.99" cy="332.83" r="1.16" fill="#ff82f8" />
<circle cx="537.62" cy="361.44" r="1.28" fill="#ff82f8" />
<circle cx="544.11" cy="327.05" r="1.04" fill="#ff82f8" />
<circle cx="546.19" cy="340.13" r="1.16" fill="#ff82f8" />
<circle cx="562.99" cy="341.06" r="1.16" fill="#ff82f8" />
<circle cx="541.47" cy="345.03" r="1.04" fill="#ff82f8" />
<circle cx="547.84" cy="366.60" r="1.04" fill="#ff82f8" />
<circle cx="541.15" cy="343.72" r="1.04" fill="#ff82f8" />
<circle cx="562.92" cy="352.13" r="1.28" fill="#ff82f8" />
<circle cx="548.56" cy="347.80" r="1.16" fill="#ff82f8" />
<circle cx="561.78" cy="320.93" r="1.16" fill="#ff82f8" />
<circle cx="559.06" cy="325.30" r="1.16" fill="#ff82f8" />
<circle cx="544.00" cy="297.82" r="1.04" fill="#ff82f8" />
<circle cx="546.80" cy="328.47" r="1.28" fill="#ff82f8" />
<circle cx="548.39" cy="326.34" r="1.28" fill="#ff82f8" />
<circle cx="539.49" cy="306.48" r="1.04" fill="#ff82f8" />
<circle cx="551.90" cy="297.42" r="1.04" fill="#ff82f8" />
<circle cx="541.76" cy="312.22" r="1.16" fill="#ff82f8" />
<circle cx="564.60" cy="332.78" r="1.04" fill="#ff82f8" />
<circle cx="560.43" cy="314.11" r="1.16" fill="#ff82f8" />
<circle cx="548.79" cy="342.79" r="1.28" fill="#ff82f8" />
<circle cx="546.36" cy="317.55" r="1.28" fill="#ff82f8" />
<circle cx="537.28" cy="365.18" r="1.04" fill="#ff82f8" />
<circle cx="559.94" cy="311.15" r="1.28" fill="#ff82f8" />
<circle cx="555.02" cy="343.14" r="1.04" fill="#ff82f8" />
<circle cx="542.97" cy="360.53" r="1.28" fill="#ff82f8" />
<circle cx="562.59" cy="344.93" r="1.04" fill="#ff82f8" />
<circle cx="553.44" cy="362.12" r="1.04" fill="#ff82f8" />
<circle cx="554.22" cy="366.09" r="1.16" fill="#ff82f8" />
<polyline points="600.7,318.4 600.7,352.1 596.6,356.2 596.6,366.0" fill="none" stroke="#008a00" stroke-width="0.9774999999999999" stroke-linejoin="round"/>
<polyline points="574.4,335.9 574.4,323.7 570.0,319.3 570.0,299.0" fill="none" stroke="#008a00" stroke-width="0.9774999999999999" stroke-linejoin="round"/>
<polyline points="583.1,333.0 583.1,360.1 578.0,365.3" fill="none" stroke="#008a00" stroke-width="0.9774999999999999" stroke-linejoin="round"/>
<circle cx="577.95" cy="365.26" r="1.16" fill="#ff82f8" />
<polyline points="571.6,331.0 571.6,316.3 577.7,310.2 577.7,299.0" fill="none" stroke="#008a00" stroke-width="0.9774999999999999" stroke-linejoin="round"/>
<polyline points="578.0,319.6 590.8,319.6 593.9,322.7 602.0,322.7" fill="none" stroke="#008a00" stroke-width="0.9774999999999999" stroke-linejoin="round"/>
<circle cx="602.00" cy="322.72" r="1.16" fill="#ff82f8" />
<polyline points="570.6,348.9 599.0,348.9 602.0,351.9" fill="none" stroke="#008a00" stroke-width="0.9774999999999999" stroke-linejoin="round"/>
<polyline points="582.9,348.0 596.4,348.0 600.5,352.2 602.0,352.2" fill="none" stroke="#0000ff" stroke-width="1.2320000000000002" stroke-linejoin="round"/>
<polyline points="595.9,302.3 595.9,329.7 600.5,334.2 600.5,366.0" fill="none" stroke="#0000ff" stroke-width="1.2320000000000002" stroke-linejoin="round"/>
<circle cx="595.95" cy="302.31" r="1.16" fill="#ff82f8" />
<polyline points="595.6,302.3 595.6,333.4 599.6,337.3 599.6,362.9" fill="none" stroke="#0000ff" stroke-width="2.0944000000000003" stroke-linejoin="round"/>
<circle cx="595.64" cy="302.30" r="1.16" fill="#ff82f8" />
<polyline points="601.0,339.1 601.0,366.0" fill="none" stroke="#0000ff" stroke-width="1.2320000000000002" stroke-linejoin="round"/>
<polyline points="579.7,322.8 570.0,322.8" fill="none" stroke="#0000ff" stroke-width="1.2320000000000002" stroke-linejoin="round"/>
<circle cx="579.71" cy="322.82" r="1.16" fill="#ff82f8" />
<polyline points="587.2,330.8 587.2,315.4 596.1,306.5 596.1,299.0" fill="none" stroke="#0000ff" stroke-width="1.2320000000000002" stroke-linejoin="round"/>
<circle cx="587.16" cy="330.82" r="1.16" fill="#ff82f8" />
<circle cx="586.56" cy="345.85" r="1.04" fill="#ff82f8" />
<circle cx="573.61" cy="346.59" r="1.16" fill="#ff82f8" />
<circle cx="589.59" cy="365.54" r="1.04" fill="#ff82f8" />
<circle cx="594.90" cy="353.94" r="1.04" fill="#ff82f8" />
<circle cx="584.57" cy="354.02" r="1.04" fill="#ff82f8" />
<circle cx="597.75" cy="301.01" r="1.16" fill="#ff82f8" />
<circle cx="595.41" cy="327.68" r="1.04" fill="#ff82f8" />
<circle cx="593.63" cy="303.01" r="1.28" fill="#ff82f8" />
<circle cx="578.39" cy="322.91" r="1.28" fill="#ff82f8" />
<circle cx="588.60" cy="365.92" r="1.16" fill="#ff82f8" />
<circle cx="582.98" cy="299.50" r="1.16" fill="#ff82f8" />
<circle cx="572.59" cy="349.22" r="1.04" fill="#ff82f8" />
<circle cx="590.05" cy="356.96" r="1.16" fill="#ff82f8" />
<circle cx="580.29" cy="321.39" r="1.28" fill="#ff82f8" />
<circle cx="596.79" cy="360.89" r="1.16" fill="#ff82f8" />
<circle cx="584.16" cy="316.08" r="1.04" fill="#ff82f8" />
<circle cx="591.79" cy="319.80" r="1.04" fill="#ff82f8" />
<circle cx="585.45" cy="307.59" r="1.28" fill="#ff82f8" />
<circle cx="601.50" cy="351.74" r="1.04" fill="#ff82f8" />
<circle cx="595.11" cy="304.58" r="1.16" fill="#ff82f8" />
<circle cx="586.90" cy="325.03" r="1.28" fill="#ff82f8" />
<circle cx="589.34" cy="359.30" r="1.28" fill="#ff82f8" />
<circle cx="587.90" cy="310.02" r="1.28" fill="#ff82f8" />
<circle cx="599.95" cy="332.04" r="1.16" fill="#ff82f8" />
<circle cx="600.61" cy="326.28" r="1.28" fill="#ff82f8" />
<circle cx="577.56" cy="359.45" r="1.04" fill="#ff82f8" />
<circle cx="594.90" cy="327.61" r="1.16" fill="#ff82f8" />
<circle cx="587.30" cy="328.69" r="1.28" fill="#ff82f8" />
<circle cx="595.58" cy="318.34" r="1.04" fill="#ff82f8" />
<circle cx="585.86" cy="332.66" r="1.16" fill="#ff82f8" />
<circle cx="570.22" cy="307.20" r="1.16" fill="#ff82f8" />
<circle cx="572.46" cy="304.80" r="1.28" fill="#ff82f8" />
<circle cx="582.10" cy="310.41" r="1.16" fill="#ff82f8" />
<circle cx="572.33" cy="321.76" r="1.16" fill="#ff82f8" />
<circle cx="580.28" cy="363.58" r="1.28" fill="#ff82f8" />
<circle cx="578.51" cy="324.69" r="1.16" fill="#ff82f8" />
<circle cx="599.50" cy="333.44" r="1.04" fill="#ff82f8" />
<circle cx="583.96" cy="362.57" r="1.28" fill="#ff82f8" />
<circle cx="590.02" cy="359.17" r="1.16" fill="#ff82f8" />
<circle cx="577.59" cy="313.29" r="1.16" fill="#ff82f8" />
<circle cx="596.86" cy="328.22" r="1.16" fill="#ff82f8" />
<circle cx="600.24" cy="319.62" r="1.28" fill="#ff82f8" />
<circle cx="576.51" cy="320.16" r="1.04" fill="#ff82f8" />
<circle cx="597.81" cy="338.00" r="1.16" fill="#ff82f8" />
<circle cx="591.60" cy="331.97" r="1.16" fill="#ff82f8" />
<circle cx="589.52" cy="345.18" r="1.16" fill="#ff82f8" />
<circle cx="598.58" cy="362.03" r="1.16" fill="#ff82f8" />
<circle cx="576.82" cy="312.94" r="1.16" fill="#ff82f8" />
<circle cx="593.59" cy="346.38" r="1.04" fill="#ff82f8" />
<circle cx="577.36" cy="341.44" r="1.16" fill="#ff82f8" />
<circle cx="572.28" cy="343.15" r="1.16" fill="#ff82f8" />
<circle cx="593.09" cy="351.40" r="1.28" fill="#ff82f8" />
<circle cx="585.49" cy="328.59" r="1.28" fill="#ff82f8" />
<circle cx="572.81" cy="314.79" r="1.16" fill="#ff82f8" />
<circle cx="594.58" cy="314.26" r="1.16" fill="#ff82f8" />
<polyline points="342.8,385.1 358.3,385.1 362.7,389.5 378.6,389.5 387.0,381.1 412.6,381.1" fill="none" stroke="#008a00" stroke-width="0.9774999999999999" stroke-linejoin="round"/>
<polyline points="321.6,385.2 356.0,385.2 364.2,376.9 389.1,376.9" fill="none" stroke="#008a00" stroke-width="0.9774999999999999" stroke-linejoin="round"/>
<polyline points="424.9,386.5 428.0,386.5" fill="none" stroke="#008a00" stroke-width="0.9774999999999999" stroke-linejoin="round"/>
<polyline points="336.0,409.5 305.5,409.5 300.0,404.0" fill="none" stroke="#008a00" stroke-width="0.9774999999999999" stroke-linejoin="round"/>
<circle cx="300.00" cy="403.99" r="1.16" fill="#ff82f8" />
<polyline points="316.8,405.9 316.8,378.2 310.8,372.3" fill="none" stroke="#008a00" stroke-width="0.9774999999999999" stroke-linejoin="round"/>
<polyline points="362.9,403.5 362.9,421.0 359.8,424.1" fill="none" stroke="#008a00" stroke-width="0.9774999999999999" stroke-linejoin="round"/>
<polyline points="401.4,426.0 401.4,392.8 409.4,384.8 409.4,372.0" fill="none" stroke="#0000ff" stroke-width="2.0944000000000003" stroke-linejoin="round"/>
<polyline points="343.3,427.8 343.3,438.0" fill="none" stroke="#0000ff" stroke-width="1.2320000000000002" stroke-linejoin="round"/>
<polyline points="300.7,408.7 300.7,419.0 307.2,425.4 307.2,438.0" fill="none" stroke="#0000ff" stroke-width="1.2320000000000002" stroke-linejoin="round"/>
<polyline points="322.0,423.8 322.0,438.0" fill="none" stroke="#0000ff" stroke-width="1.2320000000000002" stroke-linejoin="round"/>
<circle cx="322.04" cy="423.78" r="1.16" fill="#ff82f8" />
<polyline points="419.1,389.3 419.1,372.0" fill="none" stroke="#0000ff" stroke-width="2.0944000000000003" stroke-linejoin="round"/>
<circle cx="308.27" cy="393.68" r="1.28" fill="#ff82f8" />
<circle cx="334.14" cy="394.94" r="1.04" fill="#ff82f8" />
<circle cx="350.76" cy="398.92" r="1.28" fill="#ff82f8" />
<circle cx="352.39" cy="406.44" r="1.28" fill="#ff82f8" />
<circle cx="301.41" cy="433.08" r="1.28" fill="#ff82f8" />
<circle cx="305.85" cy="388.92" r="1.16" fill="#ff82f8" />
<circle cx="311.47" cy="390.75" r="1.16" fill="#ff82f8" />
<circle cx="317.45" cy="416.61" r="1.16" fill="#ff82f8" />
<circle cx="311.44" cy="421.95" r="1.16" fill="#ff82f8" />
<circle cx="406.90" cy="389.17" r="1.28" fill="#ff82f8" />
<circle cx="399.29" cy="407.00" r="1.04" fill="#ff82f8" />
<circle cx="328.03" cy="377.00" r="1.16" fill="#ff82f8" />
<circle cx="413.52" cy="434.70" r="1.04" fill="#ff82f8" />
<circle cx="397.19" cy="419.69" r="1.04" fill="#ff82f8" />
<polyline points="495.5,398.0 495.5,428.2 492.3,431.4" fill="none" stroke="#008a00" stroke-width="0.9774999999999999" stroke-linejoin="round"/>
<polyline points="579.6,373.5 579.6,372.0" fill="none" stroke="#008a00" stroke-width="0.9774999999999999" stroke-linejoin="round"/>
<polyline points="474.3,378.6 499.3,378.6 508.2,387.5" fill="none" stroke="#008a00" stroke-width="0.9774999999999999" stroke-linejoin="round"/>
<polyline points="434.8,408.0 411.5,408.0 408.1,404.6 394.5,404.6 387.4,411.7 384.0,411.7" fill="none" stroke="#008a00" stroke-width="0.9774999999999999" stroke-linejoin="round"/>
<circle cx="384.00" cy="411.67" r="1.16" fill="#ff82f8" />
<polyline points="563.8,404.6 602.0,404.6" fill="none" stroke="#008a00" stroke-width="0.9774999999999999" stroke-linejoin="round"/>
<circle cx="602.00" cy="404.60" r="1.16" fill="#ff82f8" />
<polyline points="587.9,403.4 602.0,403.4" fill="none" stroke="#008a00" stroke-width="0.9774999999999999" stroke-linejoin="round"/>
<circle cx="602.00" cy="403.39" r="1.16" fill="#ff82f8" />
<polyline points="429.6,417.4 429.6,438.0" fill="none" stroke="#008a00" stroke-width="0.9774999999999999" stroke-linejoin="round"/>
<polyline points="400.4,380.3 440.5,380.3 448.4,372.4 474.3,372.4 474.8,372.0" fill="none" stroke="#008a00" stroke-width="0.9774999999999999" stroke-linejoin="round"/>
<circle cx="474.77" cy="372.00" r="1.16" fill="#ff82f8" />
<polyline points="385.9,397.4 385.9,426.8 384.0,428.7 384.0,438.0" fill="none" stroke="#008a00" stroke-width="0.9774999999999999" stroke-linejoin="round"/>
<polyline points="526.5,385.9 498.7,385.9 491.3,378.5 470.3,378.5 464.5,384.3" fill="none" stroke="#008a00" stroke-width="0.9774999999999999" stroke-linejoin="round"/>
<polyline points="523.7,417.0 523.7,438.0" fill="none" stroke="#008a00" stroke-width="0.9774999999999999" stroke-linejoin="round"/>
<circle cx="523.73" cy="438.00" r="1.16" fill="#ff82f8" />
<polyline points="495.8,429.3 529.5,429.3 536.4,436.3" fill="none" stroke="#008a00" stroke-width="0.9774999999999999" stroke-linejoin="round"/>
<circle cx="536.44" cy="436.28" r="1.16" fill="#ff82f8" />
<polyline points="595.7,378.2 595.7,409.2 587.5,417.4 587.5,438.0" fill="none" stroke="#008a00" stroke-width="0.9774999999999999" stroke-linejoin="round"/>
<circle cx="587.50" cy="438.00" r="1.16" fill="#ff82f8" />
<polyline points="597.0,397.9 571.1,397.9 563.9,405.0" fill="none" stroke="#008a00" stroke-width="0.9774999999999999" stroke-linejoin="round"/>
<polyline points="512.1,375.1 493.7,375.1 486.5,382.3" fill="none" stroke="#008a00" stroke-width="0.9774999999999999" stroke-linejoin="round"/>
<circle cx="486.50" cy="382.33" r="1.16" fill="#ff82f8" />
<polyline points="410.5,427.7 384.0,427.7" fill="none" stroke="#008a00" stroke-width="0.9774999999999999" stroke-linejoin="round"/>
<circle cx="384.00" cy="427.69" r="1.16" fill="#ff82f8" />
<polyline points="531.5,389.1 531.5,430.5 535.5,434.5" fill="none" stroke="#008a00" stroke-width="0.9774999999999999" stroke-linejoin="round"/>
<circle cx="535.49" cy="434.45" r="1.16" fill="#ff82f8" />
<polyline points="410.9,384.6 410.9,372.0" fill="none" stroke="#008a00" stroke-width="0.9774999999999999" stroke-linejoin="round"/>
<polyline points="389.8,386.9 389.8,400.4 384.7,405.5 384.7,438.0" fill="none" stroke="#0000ff" stroke-width="1.2320000000000002" stroke-linejoin="round"/>
<circle cx="389.77" cy="386.88" r="1.16" fill="#ff82f8" />
<polyline points="509.9,437.6 471.3,437.6 470.9,438.0" fill="none" stroke="#0000ff" stroke-width="1.2320000000000002" stroke-linejoin="round"/>
<circle cx="509.93" cy="437.59" r="1.16" fill="#ff82f8" />
<polyline points="559.4,381.2 559.4,372.0" fill="none" stroke="#0000ff" stroke-width="1.2320000000000002" stroke-linejoin="round"/>
<circle cx="559.36" cy="381.21" r="1.16" fill="#ff82f8" />
<polyline points="502.7,392.1 491.0,392.1 483.5,399.6" fill="none" stroke="#0000ff" stroke-width="1.2320000000000002" stroke-linejoin="round"/>
<circle cx="502.67" cy="392.09" r="1.16" fill="#ff82f8" />
<polyline points="451.7,437.0 465.7,437.0 466.8,438.0 508.3,438.0" fill="none" stroke="#0000ff" stroke-width="1.2320000000000002" stroke-linejoin="round"/>
<circle cx="451.66" cy="436.95" r="1.16" fill="#ff82f8" />
<polyline points="391.5,383.3 391.5,393.9 397.5,399.9 397.5,410.8" fill="none" stroke="#0000ff" stroke-width="1.2320000000000002" stroke-linejoin="round"/>
<polyline points="420.4,397.3 420.4,378.8 416.8,375.2 416.8,372.0" fill="none" stroke="#0000ff" stroke-width="1.2320000000000002" stroke-linejoin="round"/>
<polyline points="516.8,393.0 516.8,372.0" fill="none" stroke="#0000ff" stroke-width="1.2320000000000002" stroke-linejoin="round"/>
<polyline points="535.1,398.7 535.1,372.0" fill="none" stroke="#0000ff" stroke-width="1.2320000000000002" stroke-linejoin="round"/>
<circle cx="535.15" cy="398.74" r="1.16" fill="#ff82f8" />
<polyline points="404.5,380.7 404.5,392.4 397.1,399.8 397.1,417.8 389.5,425.4" fill="none" stroke="#0000ff" stroke-width="1.2320000000000002" stroke-linejoin="round"/>
<circle cx="404.52" cy="380.74" r="1.16" fill="#ff82f8" />
<polyline points="496.4,432.8 511.3,432.8 516.5,438.0" fill="none" stroke="#3c82ff" stroke-width="1.2320000000000002" stroke-linejoin="round"/>
<circle cx="496.36" cy="432.79" r="1.16" fill="#ff82f8" />
<polyline points="411.8,390.6 439.5,390.6 444.5,395.6 486.0,395.6 494.6,404.3" fill="none" stroke="#0000ff" stroke-width="1.2320000000000002" stroke-linejoin="round"/>
<circle cx="411.83" cy="390.64" r="1.16" fill="#ff82f8" />
<polyline points="386.9,380.7 384.0,380.7" fill="none" stroke="#0000ff" stroke-width="1.2320000000000002" stroke-linejoin="round"/>
<polyline points="555.5,376.5 570.8,376.5 575.2,380.9 602.0,380.9" fill="none" stroke="#0000ff" stroke-width="1.2320000000000002" stroke-linejoin="round"/>
<polyline points="484.7,390.2 484.7,372.0" fill="none" stroke="#0000ff" stroke-width="2.0944000000000003" stroke-linejoin="round"/>
<circle cx="484.72" cy="390.25" r="1.16" fill="#ff82f8" />
<polyline points="591.0,426.4 602.0,426.4" fill="none" stroke="#0000ff" stroke-width="1.2320000000000002" stroke-linejoin="round"/>
<circle cx="390.03" cy="434.38" r="1.28" fill="#ff82f8" />
<circle cx="556.19" cy="410.42" r="1.16" fill="#ff82f8" />
<circle cx="577.16" cy="422.12" r="1.28" fill="#ff82f8" />
<circle cx="451.69" cy="396.49" r="1.04" fill="#ff82f8" />
<circle cx="453.15" cy="426.63" r="1.04" fill="#ff82f8" />
<circle cx="576.74" cy="383.62" r="1.28" fill="#ff82f8" />
<circle cx="409.07" cy="401.18" r="1.04" fill="#ff82f8" />
<circle cx="444.01" cy="388.77" r="1.16" fill="#ff82f8" />
<circle cx="538.49" cy="390.10" r="1.28" fill="#ff82f8" />
<circle cx="414.47" cy="376.76" r="1.28" fill="#ff82f8" />
<circle cx="494.25" cy="424.91" r="1.28" fill="#ff82f8" />
<circle cx="475.21" cy="424.34" r="1.16" fill="#ff82f8" />
<circle cx="423.42" cy="402.32" r="1.16" fill="#ff82f8" />
<circle cx="492.76" cy="375.77" r="1.04" fill="#ff82f8" />
<circle cx="464.66" cy="395.73" r="1.04" fill="#ff82f8" />
<circle cx="533.50" cy="402.03" r="1.28" fill="#ff82f8" />
<circle cx="514.22" cy="428.81" r="1.16" fill="#ff82f8" />
<circle cx="579.06" cy="420.74" r="1.16" fill="#ff82f8" />
<circle cx="471.35" cy="422.18" r="1.16" fill="#ff82f8" />
<circle cx="512.84" cy="421.94" r="1.04" fill="#ff82f8" />
<circle cx="458.22" cy="385.89" r="1.16" fill="#ff82f8" />
<circle cx="551.84" cy="382.18" r="1.28" fill="#ff82f8" />
<circle cx="415.29" cy="428.18" r="1.28" fill="#ff82f8" />
<circle cx="491.69" cy="394.41" r="1.04" fill="#ff82f8" />
<circle cx="573.06" cy="382.30" r="1.16" fill="#ff82f8" />
<circle cx="492.03" cy="437.08" r="1.04" fill="#ff82f8" />
<circle cx="501.00" cy="379.35" r="1.28" fill="#ff82f8" />
<circle cx="412.13" cy="399.31" r="1.28" fill="#ff82f8" />
<circle cx="551.03" cy="436.40" r="1.28" fill="#ff82f8" />
<circle cx="588.86" cy="407.00" r="1.04" fill="#ff82f8" />
<circle cx="596.92" cy="377.25" r="1.04" fill="#ff82f8" />
<circle cx="587.63" cy="408.19" r="1.16" fill="#ff82f8" />
<circle cx="539.47" cy="411.17" r="1.16" fill="#ff82f8" />
<circle cx="589.29" cy="432.68" r="1.04" fill="#ff82f8" />
<circle cx="426.20" cy="383.75" r="1.28" fill="#ff82f8" />
<circle cx="479.38" cy="437.89" r="1.28" fill="#ff82f8" />
<circle cx="488.11" cy="377.09" r="1.16" fill="#ff82f8" />
<circle cx="486.04" cy="437.24" r="1.28" fill="#ff82f8" />
<circle cx="433.34" cy="434.03" r="1.04" fill="#ff82f8" />
<circle cx="524.44" cy="404.26" r="1.28" fill="#ff82f8" />
<circle cx="576.51" cy="406.70" r="1.28" fill="#ff82f8" />
<circle cx="579.15" cy="395.72" r="1.04" fill="#ff82f8" />
<circle cx="479.83" cy="384.37" r="1.28" fill="#ff82f8" />
<circle cx="567.28" cy="427.98" r="1.16" fill="#ff82f8" />
<circle cx="553.76" cy="384.47" r="1.16" fill="#ff82f8" />
<circle cx="410.86" cy="433.10" r="1.16" fill="#ff82f8" />
<circle cx="492.43" cy="437.74" r="1.28" fill="#ff82f8" />
<circle cx="476.93" cy="395.64" r="1.28" fill="#ff82f8" />
<circle cx="414.57" cy="421.06" r="1.28" fill="#ff82f8" />
<circle cx="488.53" cy="403.77" r="1.04" fill="#ff82f8" />
<circle cx="420.18" cy="384.76" r="1.04" fill="#ff82f8" />
<circle cx="556.68" cy="398.17" r="1.04" fill="#ff82f8" />
<circle cx="462.17" cy="377.72" r="1.04" fill="#ff82f8" />
<circle cx="463.00" cy="425.54" r="1.28" fill="#ff82f8" />
<circle cx="489.86" cy="398.32" r="1.28" fill="#ff82f8" />
<circle cx="568.27" cy="391.61" r="1.16" fill="#ff82f8" />
<circle cx="404.18" cy="418.45" r="1.04" fill="#ff82f8" />
<circle cx="580.81" cy="401.26" r="1.16" fill="#ff82f8" />
<circle cx="407.37" cy="427.14" r="1.28" fill="#ff82f8" />
<circle cx="449.88" cy="377.80" r="1.28" fill="#ff82f8" />
<circle cx="426.92" cy="436.63" r="1.04" fill="#ff82f8" />
<circle cx="506.53" cy="408.38" r="1.16" fill="#ff82f8" />
<circle cx="505.62" cy="431.80" r="1.28" fill="#ff82f8" />
<circle cx="403.49" cy="403.92" r="1.16" fill="#ff82f8" />
<circle cx="388.48" cy="411.67" r="1.04" fill="#ff82f8" />
<polyline points="573.1,412.0 573.1,390.2 570.5,387.6 570.5,372.0" fill="none" stroke="#008a00" stroke-width="0.9774999999999999" stroke-linejoin="round"/>
<circle cx="570.47" cy="372.00" r="1.16" fill="#ff82f8" />
<polyline points="590.2,385.2 590.2,372.0" fill="none" stroke="#008a00" stroke-width="0.9774999999999999" stroke-linejoin="round"/>
<polyline points="551.5,405.8 530.0,405.8" fill="none" stroke="#008a00" stroke-width="0.9774999999999999" stroke-linejoin="round"/>
<circle cx="530.00" cy="405.78" r="1.16" fill="#ff82f8" />
<polyline points="558.6,412.8 530.0,412.8" fill="none" stroke="#008a00" stroke-width="0.9774999999999999" stroke-linejoin="round"/>
<polyline points="559.9,415.3 559.9,438.0" fill="none" stroke="#008a00" stroke-width="0.9774999999999999" stroke-linejoin="round"/>
<polyline points="578.4,373.0 578.4,372.0" fill="none" stroke="#008a00" stroke-width="0.9774999999999999" stroke-linejoin="round"/>
<circle cx="578.36" cy="372.00" r="1.16" fill="#ff82f8" />
<polyline points="582.2,422.1 582.2,432.4 576.5,438.0" fill="none" stroke="#008a00" stroke-width="0.9774999999999999" stroke-linejoin="round"/>
<polyline points="540.9,419.2 540.9,431.2 547.7,438.0" fill="none" stroke="#008a00" stroke-width="0.9774999999999999" stroke-linejoin="round"/>
<circle cx="547.68" cy="438.00" r="1.16" fill="#ff82f8" />
<polyline points="590.8,414.7 602.0,414.7" fill="none" stroke="#0000ff" stroke-width="1.2320000000000002" stroke-linejoin="round"/>
<polyline points="587.2,409.8 587.2,438.0" fill="none" stroke="#0000ff" stroke-width="1.2320000000000002" stroke-linejoin="round"/>
<polyline points="561.3,397.0 591.1,397.0 596.1,402.0" fill="none" stroke="#0000ff" stroke-width="1.2320000000000002" stroke-linejoin="round"/>
<polyline points="544.3,403.3 544.3,372.0" fill="none" stroke="#0000ff" stroke-width="1.2320000000000002" stroke-linejoin="round"/>
<polyline points="532.3,414.1 532.3,383.4 535.1,380.5 535.1,372.0" fill="none" stroke="#3c82ff" stroke-width="1.2320000000000002" stroke-linejoin="round"/>
<polyline points="537.7,388.5 552.2,388.5 555.9,384.8 578.9,384.8" fill="none" stroke="#0000ff" stroke-width="1.2320000000000002" stroke-linejoin="round"/>
<polyline points="551.5,415.5 551.5,385.8 548.5,382.8 548.5,372.0" fill="none" stroke="#0000ff" stroke-width="2.0944000000000003" stroke-linejoin="round"/>
<polyline points="582.9,390.9 582.9,372.0" fill="none" stroke="#0000ff" stroke-width="1.2320000000000002" stroke-linejoin="round"/>
<polyline points="539.5,406.8 530.0,406.8" fill="none" stroke="#0000ff" stroke-width="1.2320000000000002" stroke-linejoin="round"/>
<polyline points="568.4,412.7 568.4,377.4 564.3,373.3 564.3,372.0" fill="none" stroke="#0000ff" stroke-width="1.2320000000000002" stroke-linejoin="round"/>
<circle cx="589.62" cy="419.42" r="1.04" fill="#ff82f8" />
<circle cx="547.80" cy="385.56" r="1.28" fill="#ff82f8" />
<circle cx="551.93" cy="422.96" r="1.28" fill="#ff82f8" />
<circle cx="537.67" cy="425.77" r="1.04" fill="#ff82f8" />
<circle cx="530.76" cy="433.00" r="1.28" fill="#ff82f8" />
<circle cx="580.59" cy="414.43" r="1.16" fill="#ff82f8" />
<circle cx="573.46" cy="392.36" r="1.04" fill="#ff82f8" />
<circle cx="536.53" cy="425.17" r="1.04" fill="#ff82f8" />
<circle cx="598.64" cy="436.75" r="1.04" fill="#ff82f8" />
<circle cx="542.36" cy="423.78" r="1.16" fill="#ff82f8" />
<circle cx="593.97" cy="407.79" r="1.04" fill="#ff82f8" />
<circle cx="538.11" cy="435.38" r="1.04" fill="#ff82f8" />
<circle cx="533.06" cy="398.63" r="1.16" fill="#ff82f8" />
<circle cx="530.17" cy="437.79" r="1.28" fill="#ff82f8" />
<circle cx="558.62" cy="400.14" r="1.04" fill="#ff82f8" />
<circle cx="586.65" cy="412.19" r="1.28" fill="#ff82f8" />
<circle cx="581.20" cy="385.01" r="1.28" fill="#ff82f8" />
<circle cx="548.02" cy="390.09" r="1.04" fill="#ff82f8" />
<circle cx="576.57" cy="377.57" r="1.28" fill="#ff82f8" />
<circle cx="550.15" cy="421.52" r="1.28" fill="#ff82f8" />
<circle cx="530.64" cy="389.45" r="1.28" fill="#ff82f8" />
<circle cx="569.12" cy="423.45" r="1.04" fill="#ff82f8" />
<circle cx="562.50" cy="416.09" r="1.16" fill="#ff82f8" />
<circle cx="599.79" cy="417.14" r="1.04" fill="#ff82f8" />
<circle cx="545.05" cy="393.30" r="1.16" fill="#ff82f8" />
<circle cx="573.94" cy="425.49" r="1.04" fill="#ff82f8" />
<circle cx="557.65" cy="383.82" r="1.16" fill="#ff82f8" />
<circle cx="566.30" cy="388.91" r="1.28" fill="#ff82f8" />
<circle cx="580.19" cy="387.63" r="1.16" fill="#ff82f8" />
<circle cx="564.89" cy="412.10" r="1.04" fill="#ff82f8" />
<polyline points="313.0,312.0 313.0,287.1 316.6,283.5 316.6,270.0" fill="none" stroke="#008a00" stroke-width="0.9774999999999999" stroke-linejoin="round"/>
<circle cx="316.59" cy="270.00" r="1.16" fill="#ff82f8" />
<polyline points="320.6,283.2 320.6,304.3 327.2,310.9 327.2,333.7 329.5,336.0" fill="none" stroke="#008a00" stroke-width="0.9774999999999999" stroke-linejoin="round"/>
<circle cx="329.50" cy="336.00" r="1.16" fill="#ff82f8" />
<polyline points="315.3,286.9 300.0,286.9" fill="none" stroke="#008a00" stroke-width="0.9774999999999999" stroke-linejoin="round"/>
<polyline points="314.0,315.9 347.5,315.9 350.0,313.4" fill="none" stroke="#008a00" stroke-width="0.9774999999999999" stroke-linejoin="round"/>
<circle cx="350.00" cy="313.39" r="1.16" fill="#ff82f8" />
<polyline points="326.0,298.8 326.0,285.8 334.2,277.6" fill="none" stroke="#0000ff" stroke-width="1.2320000000000002" stroke-linejoin="round"/>
<polyline points="341.8,280.8 341.8,291.2 335.6,297.4" fill="none" stroke="#0000ff" stroke-width="1.2320000000000002" stroke-linejoin="round"/>
<polyline points="339.4,282.8 339.4,272.2 337.2,270.0" fill="none" stroke="#0000ff" stroke-width="2.0944000000000003" stroke-linejoin="round"/>
<circle cx="339.38" cy="282.83" r="1.16" fill="#ff82f8" />
<circle cx="313.75" cy="295.61" r="1.04" fill="#ff82f8" />
<circle cx="311.99" cy="326.71" r="1.04" fill="#ff82f8" />
<circle cx="315.07" cy="306.63" r="1.04" fill="#ff82f8" />
<circle cx="332.40" cy="299.60" r="1.04" fill="#ff82f8" />
<circle cx="308.94" cy="323.72" r="1.16" fill="#ff82f8" />
<circle cx="320.25" cy="325.91" r="1.16" fill="#ff82f8" />
<polyline points="433.1,255.3 412.6,255.3 406.8,261.2 396.5,261.2 394.0,263.7 377.5,263.7" fill="none" stroke="#008a00" stroke-width="0.9774999999999999" stroke-linejoin="round"/>
<circle cx="377.47" cy="263.68" r="1.16" fill="#ff82f8" />
<polyline points="458.9,262.2 458.9,272.0" fill="none" stroke="#008a00" stroke-width="0.9774999999999999" stroke-linejoin="round"/>
<circle cx="458.93" cy="272.00" r="1.16" fill="#ff82f8" />
<polyline points="378.1,263.7 376.0,263.7" fill="none" stroke="#008a00" stroke-width="0.9774999999999999" stroke-linejoin="round"/>
<polyline points="392.8,241.2 376.0,241.2" fill="none" stroke="#0000ff" stroke-width="1.2320000000000002" stroke-linejoin="round"/>
<polyline points="387.0,255.2 399.2,255.2 402.6,251.8" fill="none" stroke="#0000ff" stroke-width="1.2320000000000002" stroke-linejoin="round"/>
<circle cx="404.62" cy="255.50" r="1.16" fill="#ff82f8" />
<circle cx="378.42" cy="242.98" r="1.28" fill="#ff82f8" />
<circle cx="440.44" cy="271.44" r="1.04" fill="#ff82f8" />
<circle cx="420.24" cy="257.61" r="1.28" fill="#ff82f8" />
<circle cx="423.00" cy="258.29" r="1.16" fill="#ff82f8" />
<circle cx="426.08" cy="259.92" r="1.04" fill="#ff82f8" />
<circle cx="436.27" cy="260.05" r="1.16" fill="#ff82f8" />
<circle cx="407.20" cy="259.11" r="1.16" fill="#ff82f8" />
<circle cx="398.12" cy="245.40" r="1.04" fill="#ff82f8" />
<circle cx="445.93" cy="252.00" r="1.28" fill="#ff82f8" />
<circle cx="379.30" cy="256.63" r="1.28" fill="#ff82f8" />
<circle cx="462.25" cy="253.02" r="1.04" fill="#ff82f8" />
<circle cx="462.53" cy="258.90" r="1.16" fill="#ff82f8" />
<circle cx="420.18" cy="252.02" r="1.04" fill="#ff82f8" />
<circle cx="460.27" cy="247.87" r="1.28" fill="#ff82f8" />
<circle cx="382.24" cy="265.77" r="1.28" fill="#ff82f8" />
<circle cx="419.49" cy="266.78" r="1.04" fill="#ff82f8" />
<circle cx="452.80" cy="261.07" r="1.04" fill="#ff82f8" />
<circle cx="413.76" cy="245.46" r="1.04" fill="#ff82f8" />
<circle cx="454.33" cy="260.65" r="1.04" fill="#ff82f8" />
<circle cx="464.51" cy="263.87" r="1.16" fill="#ff82f8" />
<circle cx="380.45" cy="244.47" r="1.28" fill="#ff82f8" />
<circle cx="423.31" cy="263.32" r="1.04" fill="#ff82f8" />
<circle cx="461.75" cy="268.78" r="1.16" fill="#ff82f8" />
<circle cx="447.57" cy="268.21" r="1.28" fill="#ff82f8" />
<circle cx="445.55" cy="255.50" r="1.16" fill="#ff82f8" />
<polyline points="301.7,445.0 301.7,387.3 317.3,371.7 333.7,371.7 343.8,360.8 343.8,352.0" fill="none" stroke="#0000ff" stroke-width="1.344" stroke-linejoin="round"/>
<polyline points="304.8,445.0 304.8,395.9 318.1,381.8 363.3,381.8 366.4,375.6 366.4,371.0" fill="none" stroke="#0000ff" stroke-width="1.344" stroke-linejoin="round"/>
<polyline points="313.4,445.0 313.4,395.1 318.0,389.6 358.6,389.6 369.6,380.3 369.6,369.4" fill="none" stroke="#0000ff" stroke-width="1.344" stroke-linejoin="round"/>
<polyline points="316.8,445.0 316.8,393.5 318.9,392.0 360.2,392.0 374.2,378.0 374.2,370.0" fill="none" stroke="#3c82ff" stroke-width="1.2320000000000002" stroke-linejoin="round"/>
<polyline points="323.5,445.0 323.5,401.3 327.4,396.7 364.9,396.7 377.4,385.0" fill="none" stroke="#0000ff" stroke-width="1.344" stroke-linejoin="round"/>
<polyline points="326.2,445.0 326.2,428.6 331.3,422.4 331.3,413.8" fill="none" stroke="#0000ff" stroke-width="1.2320000000000002" stroke-linejoin="round"/>
<polyline points="331.3,445.0 331.3,430.0" fill="none" stroke="#0000ff" stroke-width="1.2320000000000002" stroke-linejoin="round"/>
<polyline points="336.8,445.0 336.8,422.4 343.8,415.4 352.0,415.4" fill="none" stroke="#0000ff" stroke-width="1.2320000000000002" stroke-linejoin="round"/>
<polyline points="339.9,445.0 339.9,431.8 346.0,425.5 349.0,425.5" fill="none" stroke="#0000ff" stroke-width="1.2320000000000002" stroke-linejoin="round"/>
<polyline points="377.4,420.0 367.2,428.6 357.1,428.6 352.0,433.0 352.0,445.0" fill="none" stroke="#0000ff" stroke-width="1.344" stroke-linejoin="round"/>
<polyline points="345.0,440.0 345.0,432.0 349.0,428.0" fill="none" stroke="#3c82ff" stroke-width="1.12" stroke-linejoin="round"/>
<polyline points="301.7,402.9 326.7,378.0 328.2,375.6 328.2,360.0" fill="none" stroke="#008a00" stroke-width="1.15" stroke-linejoin="round"/>
<polyline points="314.2,393.5 314.2,445.0" fill="none" stroke="#008a00" stroke-width="1.035" stroke-linejoin="round"/>
<polyline points="343.6,360.0 343.6,389.6" fill="none" stroke="#008a00" stroke-width="1.035" stroke-linejoin="round"/>
<polyline points="345.6,360.0 345.6,389.6" fill="none" stroke="#008a00" stroke-width="1.035" stroke-linejoin="round"/>
<polyline points="320.4,394.6 358.6,394.6" fill="none" stroke="#006800" stroke-width="1.8399999999999999" stroke-linejoin="round"/>
<polyline points="353.0,415.3 429.6,415.3" fill="none" stroke="#007000" stroke-width="1.7249999999999999" stroke-linejoin="round"/>
<polyline points="332.1,445.0 332.1,422.4 341.5,414.6" fill="none" stroke="#008a00" stroke-width="1.035" stroke-linejoin="round"/>
<polyline points="376.6,408.4 368.8,416.2" fill="none" stroke="#008a00" stroke-width="1.035" stroke-linejoin="round"/>
<polyline points="320.6,445.0 320.6,420.0 330.0,410.0 330.0,399.0" fill="none" stroke="#008a00" stroke-width="1.035" stroke-linejoin="round"/>
<polyline points="308.0,445.0 308.0,410.0 312.0,405.0" fill="none" stroke="#008a00" stroke-width="1.035" stroke-linejoin="round"/>
<circle cx="320.80" cy="386.50" r="1.22" fill="#ff82f8" />
<circle cx="344.50" cy="392.00" r="1.22" fill="#ff82f8" />
<circle cx="355.00" cy="392.00" r="1.22" fill="#ff82f8" />
<circle cx="320.00" cy="394.60" r="1.22" fill="#ff82f8" />
<rect x="316.80" y="367.70" width="7.20" height="3.40" fill="#5c8f5c" />
<rect x="316.80" y="381.70" width="7.20" height="3.40" fill="#5c8f5c" />
<rect x="317.00" y="371.40" width="6.80" height="10.00" fill="none" stroke="#6a6a6a" stroke-width="0.4" />
<text x="328.00" y="384.50" font-size="3.4" fill="#9a9a9a" font-style="italic">E1</text>
<rect x="379.30" y="369.70" width="4.20" height="76.00" fill="#0000ee" />
<polyline points="378.1,372.0 378.1,440.0" fill="none" stroke="#3c82ff" stroke-width="1.0080000000000002" stroke-linejoin="round"/>
<polyline points="389.0,445.0 389.0,405.6 408.5,386.0 408.5,369.7" fill="none" stroke="#0000ff" stroke-width="1.344" stroke-linejoin="round"/>
<polyline points="392.2,445.0 392.2,410.2 396.0,407.1 403.9,407.1" fill="none" stroke="#0000ff" stroke-width="1.2320000000000002" stroke-linejoin="round"/>
<circle cx="403.90" cy="407.10" r="1.34" fill="#ff82f8" />
<polyline points="395.3,445.0 395.3,415.0 398.4,411.8 405.4,411.8" fill="none" stroke="#0000ff" stroke-width="1.2320000000000002" stroke-linejoin="round"/>
<circle cx="405.40" cy="411.80" r="1.34" fill="#ff82f8" />
<polyline points="398.4,445.0 398.4,416.5 400.7,414.1" fill="none" stroke="#0000ff" stroke-width="1.2320000000000002" stroke-linejoin="round"/>
<circle cx="402.00" cy="413.00" r="1.34" fill="#ff82f8" />
<polyline points="411.7,445.0 411.7,390.0 414.8,387.6" fill="none" stroke="#0000ff" stroke-width="1.2320000000000002" stroke-linejoin="round"/>
<circle cx="414.80" cy="387.60" r="1.34" fill="#ff82f8" />
<polyline points="417.1,445.0 417.1,383.0 431.2,369.0" fill="none" stroke="#0000ff" stroke-width="1.344" stroke-linejoin="round"/>
<polyline points="429.6,445.0 429.6,416.5 445.2,400.9 454.6,400.9" fill="none" stroke="#0000ff" stroke-width="1.4560000000000002" stroke-linejoin="round"/>
<polyline points="433.5,365.0 440.5,372.8 444.4,377.5 465.5,377.5" fill="none" stroke="#0000ff" stroke-width="1.344" stroke-linejoin="round"/>
<polyline points="375.0,407.0 393.7,393.9 393.7,372.8" fill="none" stroke="#008a00" stroke-width="1.035" stroke-linejoin="round"/>
<polyline points="398.4,430.5 426.5,404.8 426.5,380.6 432.7,374.4" fill="none" stroke="#008a00" stroke-width="1.035" stroke-linejoin="round"/>
<polyline points="435.8,445.0 435.8,437.5 456.1,418.8" fill="none" stroke="#008a00" stroke-width="1.035" stroke-linejoin="round"/>
<polyline points="437.4,365.0 437.4,405.6" fill="none" stroke="#008a00" stroke-width="1.035" stroke-linejoin="round"/>
<polyline points="441.3,368.0 441.3,411.8 430.4,423.5" fill="none" stroke="#008a00" stroke-width="1.035" stroke-linejoin="round"/>
<polyline points="467.8,393.1 456.1,393.1 448.3,400.9 448.3,408.7 451.4,411.0 468.6,411.0" fill="none" stroke="#008a00" stroke-width="1.035" stroke-linejoin="round"/>
<polyline points="414.8,370.0 414.8,393.0" fill="none" stroke="#008a00" stroke-width="1.035" stroke-linejoin="round"/>
<polyline points="410.1,370.0 410.1,384.0" fill="none" stroke="#008a00" stroke-width="1.035" stroke-linejoin="round"/>
<polyline points="404.0,445.0 404.0,425.0 412.0,417.0" fill="none" stroke="#008a00" stroke-width="1.035" stroke-linejoin="round"/>
<polyline points="423.0,445.0 423.0,430.0" fill="none" stroke="#008a00" stroke-width="1.035" stroke-linejoin="round"/>
<circle cx="385.10" cy="379.80" r="1.22" fill="#ff82f8" />
<circle cx="389.50" cy="381.00" r="1.22" fill="#ff82f8" />
<circle cx="394.50" cy="379.00" r="1.22" fill="#ff82f8" />
<circle cx="398.00" cy="380.60" r="1.22" fill="#ff82f8" />
<circle cx="401.00" cy="379.00" r="1.22" fill="#ff82f8" />
<circle cx="403.50" cy="376.00" r="1.22" fill="#ff82f8" />
<circle cx="390.60" cy="372.00" r="1.22" fill="#ff82f8" />
<circle cx="386.00" cy="375.00" r="1.22" fill="#ff82f8" />
<circle cx="397.00" cy="373.50" r="1.22" fill="#ff82f8" />
<circle cx="405.00" cy="384.00" r="1.22" fill="#ff82f8" />
<circle cx="410.00" cy="381.00" r="1.22" fill="#ff82f8" />
<circle cx="415.50" cy="377.00" r="1.22" fill="#ff82f8" />
<circle cx="420.00" cy="373.00" r="1.22" fill="#ff82f8" />
<polyline points="517.4,460.4 530.5,446.9 530.5,415.2" fill="none" stroke="#0000ff" stroke-width="1.7920000000000003" stroke-linejoin="round"/>
<polyline points="531.6,386.8 531.6,441.4" fill="none" stroke="#0000ff" stroke-width="1.2320000000000002" stroke-linejoin="round"/>
<polyline points="534.9,392.0 534.9,441.4 538.0,445.0" fill="none" stroke="#0000ff" stroke-width="1.2320000000000002" stroke-linejoin="round"/>
<polyline points="538.1,396.0 538.1,436.0" fill="none" stroke="#3c82ff" stroke-width="1.2320000000000002" stroke-linejoin="round"/>
<polyline points="522.2,382.5 522.2,448.0" fill="none" stroke="#0000ff" stroke-width="1.2320000000000002" stroke-linejoin="round"/>
<polyline points="487.9,417.4 487.9,440.3 473.7,454.5" fill="none" stroke="#0000ff" stroke-width="1.344" stroke-linejoin="round"/>
<polyline points="465.0,456.7 481.4,440.3 481.4,430.0" fill="none" stroke="#0000ff" stroke-width="1.2320000000000002" stroke-linejoin="round"/>
<polyline points="565.4,415.0 565.4,437.0" fill="none" stroke="#0000ff" stroke-width="1.12" stroke-linejoin="round"/>
<polyline points="568.7,418.0 568.7,437.0" fill="none" stroke="#0000ff" stroke-width="1.12" stroke-linejoin="round"/>
<polyline points="574.2,415.2 574.2,437.0" fill="none" stroke="#0000ff" stroke-width="1.12" stroke-linejoin="round"/>
<polyline points="578.5,420.0 578.5,437.0" fill="none" stroke="#0000ff" stroke-width="1.12" stroke-linejoin="round"/>
<polyline points="581.8,415.2 581.8,437.0" fill="none" stroke="#0000ff" stroke-width="1.12" stroke-linejoin="round"/>
<polyline points="586.2,422.0 586.2,437.0" fill="none" stroke="#0000ff" stroke-width="1.12" stroke-linejoin="round"/>
<polyline points="590.5,415.2 590.5,437.0" fill="none" stroke="#0000ff" stroke-width="1.12" stroke-linejoin="round"/>
<polyline points="596.0,418.0 596.0,437.0" fill="none" stroke="#0000ff" stroke-width="1.12" stroke-linejoin="round"/>
<polyline points="532.7,393.4 539.2,386.8 548.0,386.8" fill="none" stroke="#0000ff" stroke-width="1.2320000000000002" stroke-linejoin="round"/>
<polyline points="530.5,400.0 545.8,412.0 556.7,412.0 562.2,406.5" fill="none" stroke="#0000ff" stroke-width="1.344" stroke-linejoin="round"/>
<polyline points="539.2,402.1 604.0,402.1" fill="none" stroke="#0000ff" stroke-width="1.2320000000000002" stroke-linejoin="round"/>
<rect x="550.80" y="365.00" width="3.00" height="28.40" fill="#0000ee" />
<polyline points="465.0,424.0 482.5,424.0 492.3,412.0 604.0,412.0" fill="none" stroke="#008a00" stroke-width="1.15" stroke-linejoin="round"/>
<polyline points="468.3,461.0 513.0,417.4 604.0,417.4" fill="none" stroke="#008a00" stroke-width="1.15" stroke-linejoin="round"/>
<polyline points="516.0,414.1 604.0,414.1" fill="none" stroke="#008a00" stroke-width="1.035" stroke-linejoin="round"/>
<polyline points="497.8,386.8 497.8,402.1" fill="none" stroke="#008a00" stroke-width="1.035" stroke-linejoin="round"/>
<polyline points="541.4,421.8 546.9,428.3 546.9,437.0" fill="none" stroke="#008a00" stroke-width="1.035" stroke-linejoin="round"/>
<polyline points="504.3,378.1 552.3,378.1" fill="none" stroke="#008a00" stroke-width="1.15" stroke-linejoin="round"/>
<polyline points="517.0,459.3 604.0,459.3" fill="none" stroke="#008a00" stroke-width="1.6099999999999999" stroke-linejoin="round"/>
<rect x="477.90" y="385.30" width="2.60" height="4.00" fill="#5c8f5c" />
<rect x="482.30" y="385.30" width="2.60" height="4.00" fill="#5c8f5c" />
<polyline points="376.5,246.6 389.0,246.6" fill="none" stroke="#0000ff" stroke-width="1.4560000000000002" stroke-linejoin="round"/>
<polyline points="389.8,265.6 373.4,281.2 373.4,300.0" fill="none" stroke="#0000ff" stroke-width="1.344" stroke-linejoin="round"/>
<polyline points="401.5,271.1 376.5,289.0" fill="none" stroke="#0000ff" stroke-width="1.2320000000000002" stroke-linejoin="round"/>
<polyline points="395.2,269.5 375.0,282.8" fill="none" stroke="#3c82ff" stroke-width="1.2320000000000002" stroke-linejoin="round"/>
<polyline points="428.0,242.2 410.0,257.8" fill="none" stroke="#0000ff" stroke-width="1.344" stroke-linejoin="round"/>
<polyline points="401.2,272.7 401.2,295.3" fill="none" stroke="#0000ff" stroke-width="2.24" stroke-linejoin="round"/>
<polyline points="404.6,273.4 408.5,280.5 452.5,280.5 458.7,287.5 466.0,287.5" fill="none" stroke="#0000ff" stroke-width="1.344" stroke-linejoin="round"/>
<polyline points="435.0,275.0 440.5,278.1 450.0,278.1" fill="none" stroke="#0000ff" stroke-width="1.344" stroke-linejoin="round"/>
<polyline points="405.4,287.5 410.0,294.5 420.2,294.5" fill="none" stroke="#3c82ff" stroke-width="1.2320000000000002" stroke-linejoin="round"/>
<polyline points="350.0,269.0 375.7,269.0" fill="none" stroke="#008a00" stroke-width="1.15" stroke-linejoin="round"/>
<polyline points="350.0,278.9 401.5,278.9" fill="none" stroke="#006400" stroke-width="2.3" stroke-linejoin="round"/>
<polyline points="350.0,282.8 353.9,278.1" fill="none" stroke="#008a00" stroke-width="1.035" stroke-linejoin="round"/>
<polyline points="396.8,240.7 396.8,271.9" fill="none" stroke="#008a00" stroke-width="1.035" stroke-linejoin="round"/>
<polyline points="396.0,258.6 462.0,258.6" fill="none" stroke="#008a00" stroke-width="1.035" stroke-linejoin="round"/>
<polyline points="413.2,274.2 420.2,282.0 436.0,282.0" fill="none" stroke="#008a00" stroke-width="1.035" stroke-linejoin="round"/>
<rect x="385.30" y="285.40" width="2.80" height="4.20" fill="#5c8f5c" />
<rect x="389.90" y="285.40" width="2.80" height="4.20" fill="#5c8f5c" />
<rect x="397.70" y="285.40" width="2.80" height="4.20" fill="#5c8f5c" />
<rect x="400.90" y="285.40" width="2.80" height="4.20" fill="#5c8f5c" />
<text x="377.00" y="284.60" font-size="3.2" fill="#9a9a9a" font-style="italic">C21</text>
<text x="409.00" y="290.00" font-size="3.2" fill="#9a9a9a" font-style="italic">C42</text>
<polyline points="448.6,246.9 497.0,246.9 500.0,243.8" fill="none" stroke="#0000ff" stroke-width="1.344" stroke-linejoin="round"/>
<polyline points="440.0,257.0 463.4,257.0" fill="none" stroke="#0000ff" stroke-width="1.2320000000000002" stroke-linejoin="round"/>
<polyline points="440.0,264.9 475.9,264.9 491.5,250.0 502.4,250.0" fill="none" stroke="#0000ff" stroke-width="1.344" stroke-linejoin="round"/>
<polyline points="477.4,268.8 516.4,268.8" fill="none" stroke="#0000ff" stroke-width="1.2320000000000002" stroke-linejoin="round"/>
<polyline points="440.0,278.9 516.4,278.9" fill="none" stroke="#0000ff" stroke-width="2.688" stroke-linejoin="round"/>
<polyline points="460.3,282.8 494.6,282.8" fill="none" stroke="#0000ff" stroke-width="1.2320000000000002" stroke-linejoin="round"/>
<polyline points="485.2,286.7 518.0,286.7" fill="none" stroke="#3c82ff" stroke-width="1.344" stroke-linejoin="round"/>
<polyline points="516.0,251.4 541.0,251.4" fill="none" stroke="#3c82ff" stroke-width="2.24" stroke-linejoin="round"/>
<polyline points="516.0,274.2 541.0,274.2" fill="none" stroke="#3c82ff" stroke-width="2.24" stroke-linejoin="round"/>
<polyline points="463.4,236.0 463.4,273.4 476.7,287.5" fill="none" stroke="#008a00" stroke-width="1.15" stroke-linejoin="round"/>
<polyline points="485.2,245.4 485.2,256.3" fill="none" stroke="#008a00" stroke-width="1.035" stroke-linejoin="round"/>
<polyline points="493.8,268.8 514.9,268.8" fill="none" stroke="#008a00" stroke-width="1.035" stroke-linejoin="round"/>
<polyline points="440.0,277.3 456.0,277.3" fill="none" stroke="#008a00" stroke-width="1.035" stroke-linejoin="round"/>
<rect x="492.40" y="273.70" width="2.80" height="4.20" fill="#5c8f5c" />
<rect x="497.10" y="273.70" width="2.80" height="4.20" fill="#5c8f5c" />
<rect x="474.50" y="270.90" width="2.80" height="3.60" fill="#5c8f5c" />
<rect x="479.50" y="270.90" width="2.80" height="3.60" fill="#5c8f5c" />
<rect x="487.00" y="285.40" width="2.80" height="4.20" fill="#5c8f5c" />
<rect x="491.60" y="285.40" width="2.80" height="4.20" fill="#5c8f5c" />
<rect x="497.90" y="285.40" width="2.80" height="4.20" fill="#5c8f5c" />
<rect x="507.20" y="285.40" width="2.80" height="4.20" fill="#5c8f5c" />
<rect x="511.90" y="285.40" width="2.80" height="4.20" fill="#5c8f5c" />
<polyline points="478.2,203.0 478.2,207.4 483.1,211.5 604.0,211.5" fill="none" stroke="#008a00" stroke-width="1.15" stroke-linejoin="round"/>
<polyline points="476.0,196.3 604.0,196.3" fill="none" stroke="#3c82ff" stroke-width="1.12" stroke-linejoin="round"/>
<polyline points="502.8,212.3 604.0,212.3" fill="none" stroke="#3c82ff" stroke-width="1.2320000000000002" stroke-linejoin="round"/>
<polyline points="493.3,203.0 493.3,244.5" fill="none" stroke="#0000ff" stroke-width="1.12" stroke-linejoin="round"/>
<polyline points="502.8,212.3 495.7,218.3 495.7,246.7" fill="none" stroke="#0000ff" stroke-width="1.344" stroke-linejoin="round"/>
<polyline points="505.0,213.8 498.6,220.5 498.6,246.7 489.7,255.4 470.0,255.4" fill="none" stroke="#0000ff" stroke-width="1.344" stroke-linejoin="round"/>
<polyline points="541.0,219.4 507.7,219.4 504.1,223.2 504.1,263.0" fill="none" stroke="#0000ff" stroke-width="1.344" stroke-linejoin="round"/>
<polyline points="541.0,229.2 521.3,229.2 518.0,232.5" fill="none" stroke="#0000ff" stroke-width="1.344" stroke-linejoin="round"/>
<polyline points="513.7,226.5 524.6,236.8 541.0,236.8" fill="none" stroke="#3c82ff" stroke-width="1.2320000000000002" stroke-linejoin="round"/>
<polyline points="470.0,212.3 473.3,212.3 484.2,223.7 493.5,223.7" fill="none" stroke="#008a00" stroke-width="1.15" stroke-linejoin="round"/>
<polyline points="470.0,231.4 484.7,231.4 487.5,234.7" fill="none" stroke="#008a00" stroke-width="1.15" stroke-linejoin="round"/>
<polyline points="473.3,246.7 515.9,246.7" fill="none" stroke="#008a00" stroke-width="1.15" stroke-linejoin="round"/>
<rect x="490.10" y="229.00" width="2.80" height="4.40" fill="#5c8f5c" />
<rect x="497.20" y="229.00" width="2.80" height="4.40" fill="#5c8f5c" />
<rect x="504.30" y="229.00" width="2.80" height="4.40" fill="#5c8f5c" />
<rect x="509.50" y="229.00" width="2.80" height="4.40" fill="#5c8f5c" />
<rect x="477.80" y="237.00" width="4.00" height="3.00" fill="#5c8f5c" />
<rect x="477.80" y="242.50" width="4.00" height="3.00" fill="#5c8f5c" />
<rect x="530.80" y="221.80" width="4.00" height="6.00" fill="#5c8f5c" />
<rect x="538.50" y="221.80" width="4.00" height="6.00" fill="#5c8f5c" />
<rect x="547.90" y="224.40" width="6.00" height="4.40" fill="#5c8f5c" />
<text x="556.00" y="228.00" font-size="3.2" fill="#9a9a9a" font-style="italic">C29</text>
<rect x="582.00" y="216.50" width="5.00" height="8.00" fill="#5c8f5c" stroke="#cfcfcf" stroke-width="0.4" />
<rect x="589.70" y="216.25" width="1.60" height="6.90" fill="#5c8f5c" />
<rect x="589.70" y="227.30" width="1.60" height="7.80" fill="#5c8f5c" />
<rect x="592.80" y="216.25" width="1.60" height="6.90" fill="#5c8f5c" />
<rect x="592.80" y="227.30" width="1.60" height="7.80" fill="#5c8f5c" />
<rect x="595.80" y="216.25" width="1.60" height="6.90" fill="#5c8f5c" />
<rect x="595.80" y="227.30" width="1.60" height="7.80" fill="#5c8f5c" />
<rect x="598.70" y="216.25" width="1.60" height="6.90" fill="#5c8f5c" />
<rect x="598.70" y="227.30" width="1.60" height="7.80" fill="#5c8f5c" />
<polyline points="525.0,235.4 604.0,235.4" fill="none" stroke="#0000ff" stroke-width="2.0160000000000005" stroke-linejoin="round"/>
<polyline points="525.0,227.1 566.4,227.1" fill="none" stroke="#3c82ff" stroke-width="1.2320000000000002" stroke-linejoin="round"/>
<polyline points="528.0,249.0 604.0,249.0" fill="none" stroke="#006c00" stroke-width="2.07" stroke-linejoin="round"/>
<polyline points="545.0,251.8 604.0,251.8" fill="none" stroke="#008a00" stroke-width="1.15" stroke-linejoin="round"/>
<polyline points="525.0,280.9 604.0,280.9" fill="none" stroke="#006c00" stroke-width="2.07" stroke-linejoin="round"/>
<polyline points="540.0,278.3 604.0,278.3" fill="none" stroke="#008a00" stroke-width="1.15" stroke-linejoin="round"/>
<polyline points="581.9,255.9 604.0,255.9" fill="none" stroke="#0000ff" stroke-width="1.2320000000000002" stroke-linejoin="round"/>
<polyline points="576.7,263.6 604.0,263.6" fill="none" stroke="#0000ff" stroke-width="1.2320000000000002" stroke-linejoin="round"/>
<polyline points="545.7,262.0 545.7,247.2 552.6,240.3 563.8,240.3 576.7,255.0 590.0,255.0" fill="none" stroke="#3c82ff" stroke-width="1.344" stroke-linejoin="round"/>
<polyline points="539.7,262.0 539.7,248.0 548.0,240.3" fill="none" stroke="#3c82ff" stroke-width="1.2320000000000002" stroke-linejoin="round"/>
<polyline points="557.8,300.0 557.8,266.2 597.4,266.2 597.4,300.0" fill="none" stroke="#3c82ff" stroke-width="1.2320000000000002" stroke-linejoin="round"/>
<polyline points="560.6,300.0 560.6,269.1 594.8,269.1 594.8,300.0" fill="none" stroke="#3c82ff" stroke-width="1.2320000000000002" stroke-linejoin="round"/>
<polyline points="563.4,300.0 563.4,272.2 592.2,272.2 592.2,300.0" fill="none" stroke="#3c82ff" stroke-width="1.2320000000000002" stroke-linejoin="round"/>
<polyline points="529.8,262.0 529.8,300.0" fill="none" stroke="#0000ff" stroke-width="1.12" stroke-linejoin="round"/>
<polyline points="540.5,262.0 540.5,300.0" fill="none" stroke="#3c82ff" stroke-width="1.12" stroke-linejoin="round"/>
<polyline points="543.1,262.0 543.1,300.0" fill="none" stroke="#0000ff" stroke-width="1.12" stroke-linejoin="round"/>
<polyline points="547.4,262.0 547.4,300.0" fill="none" stroke="#0000ff" stroke-width="1.12" stroke-linejoin="round"/>
<polyline points="550.9,262.0 550.9,300.0" fill="none" stroke="#3c82ff" stroke-width="1.12" stroke-linejoin="round"/>
<polyline points="553.4,262.0 553.4,300.0" fill="none" stroke="#0000ff" stroke-width="1.12" stroke-linejoin="round"/>
<polyline points="573.3,230.9 594.0,251.6" fill="none" stroke="#008a00" stroke-width="1.15" stroke-linejoin="round"/>
<polyline points="580.2,253.3 594.0,264.5 604.0,264.5" fill="none" stroke="#008a00" stroke-width="1.15" stroke-linejoin="round"/>
<polyline points="368.6,305.0 466.0,305.0" fill="none" stroke="#0000ff" stroke-width="2.4640000000000004" stroke-linejoin="round"/>
<polyline points="394.0,308.6 462.0,308.6" fill="none" stroke="#0000ff" stroke-width="1.2320000000000002" stroke-linejoin="round"/>
<polyline points="392.2,313.1 462.0,313.1" fill="none" stroke="#0000ff" stroke-width="1.344" stroke-linejoin="round"/>
<polyline points="380.4,319.1 462.0,319.1" fill="none" stroke="#0000ff" stroke-width="1.344" stroke-linejoin="round"/>
<polyline points="404.9,327.3 462.0,327.3" fill="none" stroke="#0000ff" stroke-width="1.2320000000000002" stroke-linejoin="round"/>
<polyline points="405.8,344.5 466.0,344.5" fill="none" stroke="#0000ff" stroke-width="2.4640000000000004" stroke-linejoin="round"/>
<polyline points="352.3,317.6 381.3,350.3 423.0,350.3" fill="none" stroke="#0000ff" stroke-width="1.4560000000000002" stroke-linejoin="round"/>
<polyline points="379.5,315.0 379.5,347.6" fill="none" stroke="#008a00" stroke-width="1.035" stroke-linejoin="round"/>
<polyline points="388.6,296.8 388.6,347.6" fill="none" stroke="#008a00" stroke-width="1.035" stroke-linejoin="round"/>
<polyline points="393.0,297.0 393.0,340.0" fill="none" stroke="#008a00" stroke-width="1.035" stroke-linejoin="round"/>
<polyline points="396.7,297.0 396.7,352.0" fill="none" stroke="#008a00" stroke-width="1.035" stroke-linejoin="round"/>
<polyline points="401.3,297.0 401.3,345.0" fill="none" stroke="#008a00" stroke-width="1.035" stroke-linejoin="round"/>
<polyline points="406.7,297.0 406.7,338.0" fill="none" stroke="#008a00" stroke-width="1.035" stroke-linejoin="round"/>
<polyline points="411.2,297.0 411.2,330.0" fill="none" stroke="#008a00" stroke-width="1.035" stroke-linejoin="round"/>
<polyline points="355.0,306.8 368.6,306.8" fill="none" stroke="#008a00" stroke-width="0.9199999999999999" stroke-linejoin="round"/>
<polyline points="355.0,309.5 368.6,309.5" fill="none" stroke="#008a00" stroke-width="0.9199999999999999" stroke-linejoin="round"/>
<polyline points="355.0,311.3 368.6,311.3" fill="none" stroke="#008a00" stroke-width="0.9199999999999999" stroke-linejoin="round"/>
<polyline points="355.0,314.0 368.6,314.0" fill="none" stroke="#008a00" stroke-width="0.9199999999999999" stroke-linejoin="round"/>
<polyline points="355.0,315.8 368.6,315.8" fill="none" stroke="#008a00" stroke-width="0.9199999999999999" stroke-linejoin="round"/>
<polyline points="388.6,347.6 380.0,356.0 380.0,366.0" fill="none" stroke="#008a00" stroke-width="1.035" stroke-linejoin="round"/>
<polyline points="396.7,352.0 390.0,359.0 390.0,366.0" fill="none" stroke="#008a00" stroke-width="1.035" stroke-linejoin="round"/>
<polyline points="411.2,330.0 418.0,337.0 418.0,364.0" fill="none" stroke="#008a00" stroke-width="1.035" stroke-linejoin="round"/>
<polyline points="428.0,305.5 475.4,305.5 479.0,309.5 504.4,309.5 509.9,305.0" fill="none" stroke="#0000ff" stroke-width="2.4640000000000004" stroke-linejoin="round"/>
<polyline points="428.0,313.7 500.8,313.7 509.9,308.6 530.0,308.6" fill="none" stroke="#0000ff" stroke-width="2.24" stroke-linejoin="round"/>
<polyline points="468.1,321.3 504.4,321.3" fill="none" stroke="#0000ff" stroke-width="1.12" stroke-linejoin="round"/>
<polyline points="468.0,325.8 504.0,325.8" fill="none" stroke="#0000ff" stroke-width="1.12" stroke-linejoin="round"/>
<polyline points="466.0,334.0 504.4,334.0" fill="none" stroke="#0000ff" stroke-width="1.2320000000000002" stroke-linejoin="round"/>
<polyline points="428.0,343.0 524.4,343.0" fill="none" stroke="#0000ff" stroke-width="2.4640000000000004" stroke-linejoin="round"/>
<polyline points="468.0,347.6 504.0,347.6" fill="none" stroke="#0000ff" stroke-width="1.2320000000000002" stroke-linejoin="round"/>
<polyline points="506.2,313.1 528.0,334.9 533.0,334.9" fill="none" stroke="#0000ff" stroke-width="1.344" stroke-linejoin="round"/>
<polyline points="504.4,345.8 511.7,352.1 528.0,352.1" fill="none" stroke="#0000ff" stroke-width="1.344" stroke-linejoin="round"/>
<polyline points="505.3,322.2 505.3,345.8" fill="none" stroke="#0000ff" stroke-width="1.2320000000000002" stroke-linejoin="round"/>
<polyline points="520.7,311.3 520.7,347.6" fill="none" stroke="#0000ff" stroke-width="1.2320000000000002" stroke-linejoin="round"/>
<polyline points="430.0,307.7 457.2,336.7 462.0,336.7" fill="none" stroke="#0000ff" stroke-width="1.344" stroke-linejoin="round"/>
<polyline points="428.0,320.0 445.0,338.0 445.0,352.0" fill="none" stroke="#0000ff" stroke-width="1.2320000000000002" stroke-linejoin="round"/>
<polyline points="484.4,327.6 491.7,321.3 504.4,321.3" fill="none" stroke="#008a00" stroke-width="1.035" stroke-linejoin="round"/>
<polyline points="470.0,352.0 480.0,343.0 480.0,330.0 490.0,320.0" fill="none" stroke="#008a00" stroke-width="1.035" stroke-linejoin="round"/>
<polyline points="468.0,338.0 476.0,330.0 500.0,330.0" fill="none" stroke="#008a00" stroke-width="1.035" stroke-linejoin="round"/>
<polyline points="490.0,364.0 490.0,352.0 500.0,343.0" fill="none" stroke="#008a00" stroke-width="1.035" stroke-linejoin="round"/>
<polyline points="512.0,300.0 512.0,318.0 524.0,330.0 524.0,364.0" fill="none" stroke="#008a00" stroke-width="1.035" stroke-linejoin="round"/>
<polyline points="548.0,298.0 548.0,384.0" fill="none" stroke="#0000ff" stroke-width="1.2320000000000002" stroke-linejoin="round"/>
<polyline points="550.9,300.0 550.9,392.0" fill="none" stroke="#3c82ff" stroke-width="1.2320000000000002" stroke-linejoin="round"/>
<polyline points="553.6,298.0 553.6,384.0" fill="none" stroke="#0000ff" stroke-width="1.2320000000000002" stroke-linejoin="round"/>
<polyline points="545.2,310.0 545.2,362.0" fill="none" stroke="#3c82ff" stroke-width="1.2320000000000002" stroke-linejoin="round"/>
<polyline points="557.2,312.0 557.2,360.0" fill="none" stroke="#0000ff" stroke-width="1.2320000000000002" stroke-linejoin="round"/>
<polyline points="560.6,300.0 560.6,352.0" fill="none" stroke="#3c82ff" stroke-width="1.2320000000000002" stroke-linejoin="round"/>
<polyline points="538.4,298.0 538.4,366.0" fill="none" stroke="#008a00" stroke-width="1.035" stroke-linejoin="round"/>
<polyline points="541.2,300.0 541.2,360.0" fill="none" stroke="#008a00" stroke-width="1.035" stroke-linejoin="round"/>
<polyline points="563.2,300.0 563.2,364.0" fill="none" stroke="#008a00" stroke-width="1.035" stroke-linejoin="round"/>
<rect x="540.00" y="319.10" width="3.60" height="2.60" fill="#5c8f5c" />
<rect x="540.00" y="326.30" width="3.60" height="2.60" fill="#5c8f5c" />
<rect x="540.00" y="331.70" width="3.60" height="2.60" fill="#5c8f5c" />
<rect x="540.00" y="340.70" width="3.60" height="2.60" fill="#5c8f5c" />
<rect x="540.00" y="346.30" width="3.60" height="2.60" fill="#5c8f5c" />
<rect x="557.20" y="319.10" width="3.60" height="2.60" fill="#5c8f5c" />
<rect x="557.20" y="323.70" width="3.60" height="2.60" fill="#5c8f5c" />
<rect x="557.20" y="328.20" width="3.60" height="2.60" fill="#5c8f5c" />
<polyline points="574.5,300.0 574.5,358.0 571.5,361.0 571.5,366.0" fill="none" stroke="#3c82ff" stroke-width="1.2320000000000002" stroke-linejoin="round"/>
<polyline points="577.6,306.0 577.6,351.0 580.6,354.0 580.6,359.0" fill="none" stroke="#0000ff" stroke-width="1.2320000000000002" stroke-linejoin="round"/>
<polyline points="581.7,312.0 581.7,344.0 578.7,347.0 578.7,352.0" fill="none" stroke="#0000ff" stroke-width="1.2320000000000002" stroke-linejoin="round"/>
<polyline points="584.4,300.0 584.4,337.0 587.4,340.0 587.4,345.0" fill="none" stroke="#3c82ff" stroke-width="1.2320000000000002" stroke-linejoin="round"/>
<polyline points="588.2,306.0 588.2,358.0 585.2,361.0 585.2,366.0" fill="none" stroke="#0000ff" stroke-width="1.2320000000000002" stroke-linejoin="round"/>
<polyline points="591.6,312.0 591.6,351.0 594.6,354.0 594.6,359.0" fill="none" stroke="#0000ff" stroke-width="1.2320000000000002" stroke-linejoin="round"/>
<polyline points="595.0,300.0 595.0,344.0 592.0,347.0 592.0,352.0" fill="none" stroke="#3c82ff" stroke-width="1.2320000000000002" stroke-linejoin="round"/>
<polyline points="598.4,306.0 598.4,337.0 601.4,340.0 601.4,345.0" fill="none" stroke="#0000ff" stroke-width="1.2320000000000002" stroke-linejoin="round"/>
<polyline points="572.6,302.0 572.6,340.0 575.1,343.0 575.1,364.0" fill="none" stroke="#008a00" stroke-width="1.035" stroke-linejoin="round"/>
<polyline points="579.6,302.0 579.6,340.0 582.1,343.0 582.1,364.0" fill="none" stroke="#008a00" stroke-width="1.035" stroke-linejoin="round"/>
<polyline points="586.2,302.0 586.2,340.0 588.7,343.0 588.7,364.0" fill="none" stroke="#008a00" stroke-width="1.035" stroke-linejoin="round"/>
<polyline points="593.4,302.0 593.4,340.0 595.9,343.0 595.9,364.0" fill="none" stroke="#008a00" stroke-width="1.035" stroke-linejoin="round"/>
<polyline points="600.0,302.0 600.0,340.0 602.5,343.0 602.5,364.0" fill="none" stroke="#008a00" stroke-width="1.035" stroke-linejoin="round"/>
<polyline points="570.0,312.0 584.0,312.0 590.0,318.0 604.0,318.0" fill="none" stroke="#3c82ff" stroke-width="1.344" stroke-linejoin="round"/>
<polyline points="570.0,331.0 580.0,331.0 586.0,337.0 604.0,337.0" fill="none" stroke="#0000ff" stroke-width="1.344" stroke-linejoin="round"/>
<polyline points="572.0,350.0 604.0,350.0" fill="none" stroke="#3c82ff" stroke-width="1.344" stroke-linejoin="round"/>
<polyline points="570.0,324.0 604.0,324.0" fill="none" stroke="#008a00" stroke-width="1.15" stroke-linejoin="round"/>
<polyline points="570.0,344.0 604.0,344.0" fill="none" stroke="#008a00" stroke-width="1.15" stroke-linejoin="round"/>
<rect x="472.70" y="374.60" width="2.60" height="3.80" fill="#5c8f5c" />
<rect x="476.70" y="374.60" width="2.60" height="3.80" fill="#5c8f5c" />
<rect x="482.70" y="374.60" width="2.60" height="3.80" fill="#5c8f5c" />
<rect x="486.70" y="374.60" width="2.60" height="3.80" fill="#5c8f5c" />
<rect x="495.70" y="374.60" width="2.60" height="3.80" fill="#5c8f5c" />
<rect x="499.70" y="374.60" width="2.60" height="3.80" fill="#5c8f5c" />
<rect x="505.70" y="374.60" width="2.60" height="3.80" fill="#5c8f5c" />
<rect x="509.70" y="374.60" width="2.60" height="3.80" fill="#5c8f5c" />
<text x="471.00" y="381.50" font-size="3.0" fill="#9a9a9a" font-style="italic">C43</text>
<text x="500.00" y="381.50" font-size="3.0" fill="#9a9a9a" font-style="italic">C52</text>
<rect x="385.20" y="374.40" width="2.60" height="3.60" fill="#5c8f5c" />
<rect x="389.20" y="374.40" width="2.60" height="3.60" fill="#5c8f5c" />
<rect x="395.20" y="374.40" width="2.60" height="3.60" fill="#5c8f5c" />
<rect x="399.20" y="374.40" width="2.60" height="3.60" fill="#5c8f5c" />
<circle cx="470.00" cy="372.50" r="1.22" fill="#ff82f8" />
<circle cx="476.00" cy="373.00" r="1.22" fill="#ff82f8" />
<circle cx="482.00" cy="372.00" r="1.22" fill="#ff82f8" />
<circle cx="490.00" cy="373.50" r="1.22" fill="#ff82f8" />
<circle cx="495.00" cy="372.00" r="1.22" fill="#ff82f8" />
<circle cx="503.00" cy="373.00" r="1.22" fill="#ff82f8" />
<circle cx="509.00" cy="372.40" r="1.22" fill="#ff82f8" />
<circle cx="515.00" cy="373.40" r="1.22" fill="#ff82f8" />
<circle cx="520.00" cy="372.00" r="1.22" fill="#ff82f8" />
<circle cx="526.00" cy="373.00" r="1.22" fill="#ff82f8" />
<polyline points="568.5,372.0 568.5,400.0" fill="none" stroke="#3c82ff" stroke-width="1.12" stroke-linejoin="round"/>
<polyline points="572.0,372.0 572.0,400.0" fill="none" stroke="#0000ff" stroke-width="1.12" stroke-linejoin="round"/>
<polyline points="575.4,372.0 575.4,400.0" fill="none" stroke="#3c82ff" stroke-width="1.12" stroke-linejoin="round"/>
<polyline points="579.0,372.0 579.0,400.0" fill="none" stroke="#3c82ff" stroke-width="1.12" stroke-linejoin="round"/>
<polyline points="583.0,372.0 583.0,400.0" fill="none" stroke="#0000ff" stroke-width="1.12" stroke-linejoin="round"/>
<polyline points="587.0,372.0 587.0,400.0" fill="none" stroke="#0000ff" stroke-width="1.12" stroke-linejoin="round"/>
<polyline points="590.6,372.0 590.6,400.0" fill="none" stroke="#0000ff" stroke-width="1.12" stroke-linejoin="round"/>
<polyline points="594.4,372.0 594.4,400.0" fill="none" stroke="#0000ff" stroke-width="1.12" stroke-linejoin="round"/>
<polyline points="598.0,372.0 598.0,400.0" fill="none" stroke="#0000ff" stroke-width="1.12" stroke-linejoin="round"/>
<polyline points="566.0,381.0 604.0,381.0" fill="none" stroke="#008a00" stroke-width="1.15" stroke-linejoin="round"/>
<polyline points="566.0,390.0 604.0,390.0" fill="none" stroke="#008a00" stroke-width="1.15" stroke-linejoin="round"/>
<polyline points="566.0,396.0 604.0,396.0" fill="none" stroke="#008a00" stroke-width="1.15" stroke-linejoin="round"/>
<rect x="569.70" y="375.10" width="2.60" height="3.80" fill="#5c8f5c" />
<rect x="573.70" y="375.10" width="2.60" height="3.80" fill="#5c8f5c" />
<rect x="581.70" y="375.10" width="2.60" height="3.80" fill="#5c8f5c" />
<rect x="585.70" y="375.10" width="2.60" height="3.80" fill="#5c8f5c" />
<rect x="593.70" y="375.10" width="2.60" height="3.80" fill="#5c8f5c" />
<rect x="597.70" y="375.10" width="2.60" height="3.80" fill="#5c8f5c" />
<polyline points="420.0,296.2 470.0,296.2" fill="none" stroke="#3c82ff" stroke-width="1.12" stroke-linejoin="round"/>
<polyline points="420.0,318.5 466.0,318.5" fill="none" stroke="#0000ff" stroke-width="1.12" stroke-linejoin="round"/>
<polyline points="426.0,327.0 440.0,327.0 458.6,344.0" fill="none" stroke="#0000ff" stroke-width="1.344" stroke-linejoin="round"/>
<polyline points="426.0,351.7 450.9,351.7 457.0,359.4 462.0,359.4" fill="none" stroke="#0000ff" stroke-width="1.2320000000000002" stroke-linejoin="round"/>
<polyline points="447.0,290.0 447.0,320.9" fill="none" stroke="#008a00" stroke-width="1.035" stroke-linejoin="round"/>
<polyline points="443.9,320.9 443.9,357.9" fill="none" stroke="#008a00" stroke-width="1.035" stroke-linejoin="round"/>
<polyline points="432.3,300.0 444.7,313.0 444.7,321.0" fill="none" stroke="#008a00" stroke-width="1.035" stroke-linejoin="round"/>
<rect x="429.80" y="328.10" width="3.60" height="2.60" fill="#5c8f5c" />
<rect x="429.80" y="332.70" width="3.60" height="2.60" fill="#5c8f5c" />
<rect x="452.90" y="328.10" width="3.60" height="2.60" fill="#5c8f5c" />
<rect x="452.90" y="332.70" width="3.60" height="2.60" fill="#5c8f5c" />
<circle cx="428.50" cy="329.40" r="1.22" fill="#ff82f8" />
<circle cx="428.50" cy="334.00" r="1.22" fill="#ff82f8" />
<circle cx="436.00" cy="331.00" r="1.22" fill="#ff82f8" />
<circle cx="451.00" cy="329.40" r="1.22" fill="#ff82f8" />
<circle cx="451.00" cy="334.00" r="1.22" fill="#ff82f8" />
<polyline points="580.7,373.7 580.7,437.6" fill="none" stroke="#0000ff" stroke-width="1.344" stroke-linejoin="round"/>
<polyline points="582.9,373.7 582.9,437.6" fill="none" stroke="#0000ff" stroke-width="1.344" stroke-linejoin="round"/>
<polyline points="585.8,373.7 585.8,437.6" fill="none" stroke="#3c82ff" stroke-width="1.344" stroke-linejoin="round"/>
<polyline points="594.5,373.7 594.5,437.6" fill="none" stroke="#3c82ff" stroke-width="1.344" stroke-linejoin="round"/>
<polyline points="598.9,373.7 598.9,437.6" fill="none" stroke="#0000ff" stroke-width="1.344" stroke-linejoin="round"/>
<polyline points="565.5,414.3 565.5,437.6" fill="none" stroke="#0000ff" stroke-width="1.2320000000000002" stroke-linejoin="round"/>
<polyline points="569.8,414.3 569.8,437.6" fill="none" stroke="#0000ff" stroke-width="1.2320000000000002" stroke-linejoin="round"/>
<polyline points="574.9,414.3 574.9,437.6" fill="none" stroke="#0000ff" stroke-width="1.2320000000000002" stroke-linejoin="round"/>
<polyline points="578.5,414.3 578.5,437.6" fill="none" stroke="#0000ff" stroke-width="1.2320000000000002" stroke-linejoin="round"/>
<polyline points="553.9,380.2 578.5,380.2" fill="none" stroke="#006c00" stroke-width="2.07" stroke-linejoin="round"/>
<polyline points="556.0,382.6 578.0,382.6" fill="none" stroke="#008a00" stroke-width="1.035" stroke-linejoin="round"/>
<polyline points="536.0,403.0 604.0,403.0" fill="none" stroke="#008a00" stroke-width="1.15" stroke-linejoin="round"/>
<polyline points="552.4,407.1 604.0,407.1" fill="none" stroke="#008a00" stroke-width="1.15" stroke-linejoin="round"/>
<polyline points="535.0,410.7 581.4,410.7" fill="none" stroke="#008a00" stroke-width="1.15" stroke-linejoin="round"/>
<polyline points="548.8,420.9 604.0,420.9" fill="none" stroke="#008a00" stroke-width="1.15" stroke-linejoin="round"/>
<rect x="563.30" y="388.20" width="13.10" height="8.00" fill="#5f86b8" />
<rect x="580.00" y="382.10" width="10.00" height="3.00" fill="#5c8f5c" />
<rect x="580.00" y="389.60" width="10.00" height="3.00" fill="#5c8f5c" />
<polyline points="535.0,402.7 539.4,398.4 563.3,398.4" fill="none" stroke="#0000ff" stroke-width="1.2320000000000002" stroke-linejoin="round"/>
<polyline points="535.0,415.0 554.6,415.0 561.9,407.1" fill="none" stroke="#0000ff" stroke-width="1.2320000000000002" stroke-linejoin="round"/>
<circle cx="560.00" cy="370.00" r="1.22" fill="#ff82f8" />
<circle cx="563.00" cy="376.00" r="1.22" fill="#ff82f8" />
<circle cx="571.00" cy="372.00" r="1.22" fill="#ff82f8" />
<circle cx="575.00" cy="377.00" r="1.22" fill="#ff82f8" />
<circle cx="567.00" cy="383.00" r="1.22" fill="#ff82f8" />
<circle cx="572.00" cy="386.00" r="1.22" fill="#ff82f8" />
<circle cx="561.00" cy="391.00" r="1.22" fill="#ff82f8" />
<circle cx="565.00" cy="400.00" r="1.22" fill="#ff82f8" />
<circle cx="577.00" cy="399.00" r="1.22" fill="#ff82f8" />
<circle cx="589.00" cy="397.00" r="1.22" fill="#ff82f8" />
<circle cx="592.00" cy="405.00" r="1.22" fill="#ff82f8" />
<circle cx="575.00" cy="404.00" r="1.22" fill="#ff82f8" />
<circle cx="587.00" cy="411.00" r="1.22" fill="#ff82f8" />
<circle cx="559.00" cy="413.00" r="1.22" fill="#ff82f8" />
<circle cx="570.00" cy="419.00" r="1.22" fill="#ff82f8" />
<circle cx="591.00" cy="418.00" r="1.22" fill="#ff82f8" />
<circle cx="585.00" cy="425.00" r="1.22" fill="#ff82f8" />
<circle cx="596.00" cy="428.00" r="1.22" fill="#ff82f8" />
<circle cx="567.00" cy="428.00" r="1.22" fill="#ff82f8" />
<circle cx="575.00" cy="431.00" r="1.22" fill="#ff82f8" />
<polyline points="536.0,219.4 556.7,219.4 564.4,221.0 604.0,221.0" fill="none" stroke="#0000ff" stroke-width="1.568" stroke-linejoin="round"/>
<polyline points="566.4,227.1 579.7,227.1 583.0,228.1 604.0,228.1" fill="none" stroke="#0000ff" stroke-width="1.2320000000000002" stroke-linejoin="round"/>
<polyline points="544.7,249.4 604.0,249.4" fill="none" stroke="#0000ff" stroke-width="1.2320000000000002" stroke-linejoin="round"/>
<polyline points="536.0,244.5 604.0,244.5" fill="none" stroke="#006c00" stroke-width="2.3" stroke-linejoin="round"/>
<polyline points="397.6,238.5 397.6,252.5" fill="none" stroke="#008a00" stroke-width="1.035" stroke-linejoin="round"/>
<polyline points="401.9,238.5 401.9,252.5" fill="none" stroke="#008a00" stroke-width="1.035" stroke-linejoin="round"/>
<polyline points="414.0,238.5 414.0,252.5" fill="none" stroke="#008a00" stroke-width="1.035" stroke-linejoin="round"/>
<polyline points="420.0,238.5 420.0,252.5" fill="none" stroke="#008a00" stroke-width="1.035" stroke-linejoin="round"/>
<polyline points="432.4,238.5 432.4,252.5" fill="none" stroke="#008a00" stroke-width="1.035" stroke-linejoin="round"/>
<polyline points="436.4,238.5 436.4,252.5" fill="none" stroke="#008a00" stroke-width="1.035" stroke-linejoin="round"/>
<polyline points="426.0,238.5 426.0,252.5" fill="none" stroke="#008a00" stroke-width="1.035" stroke-linejoin="round"/>
<polyline points="444.0,238.5 444.0,252.5" fill="none" stroke="#008a00" stroke-width="1.035" stroke-linejoin="round"/>
<polyline points="382.4,237.0 382.4,243.0" fill="none" stroke="#008a00" stroke-width="0.9199999999999999" stroke-linejoin="round"/>
<polyline points="388.6,237.0 388.6,243.0" fill="none" stroke="#008a00" stroke-width="0.9199999999999999" stroke-linejoin="round"/>
<polyline points="394.9,237.0 394.9,243.0" fill="none" stroke="#008a00" stroke-width="0.9199999999999999" stroke-linejoin="round"/>
<polyline points="401.1,237.0 401.1,243.0" fill="none" stroke="#008a00" stroke-width="0.9199999999999999" stroke-linejoin="round"/>
<circle cx="399.20" cy="261.18" r="1.22" fill="#ff82f8" />
<circle cx="403.77" cy="261.66" r="1.22" fill="#ff82f8" />
<circle cx="407.98" cy="261.61" r="1.22" fill="#ff82f8" />
<circle cx="411.15" cy="260.52" r="1.22" fill="#ff82f8" />
<circle cx="416.91" cy="260.96" r="1.22" fill="#ff82f8" />
<circle cx="421.14" cy="259.67" r="1.22" fill="#ff82f8" />
<circle cx="424.75" cy="259.99" r="1.22" fill="#ff82f8" />
<circle cx="429.17" cy="260.78" r="1.22" fill="#ff82f8" />
<circle cx="432.62" cy="259.92" r="1.22" fill="#ff82f8" />
<circle cx="437.35" cy="261.60" r="1.22" fill="#ff82f8" />
<circle cx="442.43" cy="259.78" r="1.22" fill="#ff82f8" />
<circle cx="446.78" cy="259.73" r="1.22" fill="#ff82f8" />
<circle cx="450.79" cy="259.70" r="1.22" fill="#ff82f8" />
<circle cx="454.10" cy="261.49" r="1.22" fill="#ff82f8" />
<circle cx="458.74" cy="259.92" r="1.22" fill="#ff82f8" />
<circle cx="402.96" cy="273.78" r="1.22" fill="#ff82f8" />
<circle cx="408.18" cy="274.00" r="1.22" fill="#ff82f8" />
<circle cx="415.28" cy="273.29" r="1.22" fill="#ff82f8" />
<circle cx="421.21" cy="273.95" r="1.22" fill="#ff82f8" />
<circle cx="428.78" cy="274.02" r="1.22" fill="#ff82f8" />
<circle cx="435.79" cy="272.35" r="1.22" fill="#ff82f8" />
<circle cx="441.32" cy="272.01" r="1.22" fill="#ff82f8" />
<circle cx="447.49" cy="271.76" r="1.22" fill="#ff82f8" />
<circle cx="454.40" cy="273.11" r="1.22" fill="#ff82f8" />
<circle cx="294.90" cy="124.00" r="4.20" fill="#ff4848" />
<circle cx="294.90" cy="124.00" r="1.76" fill="#ff9ad0" />
<rect x="496.60" y="116.20" width="81.70" height="12.40" fill="none" stroke="#8a8a8a" stroke-width="0.6" />
<polyline points="466.6,121.4 493.0,121.4 495.0,122.3 533.6,122.3 537.2,125.4 538.4,131.0 543.3,137.0 562.1,137.0" fill="none" stroke="#0000ff" stroke-width="1.2320000000000002" stroke-linejoin="round"/>
<polyline points="543.3,119.3 556.6,131.6 604.0,131.9" fill="none" stroke="#0000ff" stroke-width="1.4560000000000002" stroke-linejoin="round"/>
<polyline points="545.7,122.3 585.6,122.3 589.2,125.4" fill="none" stroke="#0000ff" stroke-width="1.12" stroke-linejoin="round"/>
<polyline points="578.3,117.4 585.6,117.4 594.8,125.6 604.0,125.6" fill="none" stroke="#008a00" stroke-width="1.265" stroke-linejoin="round"/>
<circle cx="499.50" cy="119.30" r="2.10" fill="#ff82f8" />
<rect x="497.60" y="123.50" width="3.80" height="3.80" fill="#ff82f8" />
<circle cx="505.81" cy="119.30" r="2.10" fill="#ff82f8" />
<circle cx="505.81" cy="125.40" r="2.10" fill="#ff82f8" />
<circle cx="512.12" cy="119.30" r="2.10" fill="#ff82f8" />
<circle cx="512.12" cy="125.40" r="2.10" fill="#ff82f8" />
<circle cx="518.43" cy="119.30" r="2.10" fill="#ff82f8" />
<circle cx="518.43" cy="125.40" r="2.10" fill="#ff82f8" />
<circle cx="524.74" cy="119.30" r="2.10" fill="#ff82f8" />
<circle cx="524.74" cy="125.40" r="2.10" fill="#ff82f8" />
<circle cx="531.05" cy="119.30" r="2.10" fill="#ff82f8" />
<circle cx="531.05" cy="125.40" r="2.10" fill="#ff82f8" />
<circle cx="537.36" cy="119.30" r="2.10" fill="#ff82f8" />
<circle cx="537.36" cy="125.40" r="2.10" fill="#ff82f8" />
<circle cx="543.67" cy="119.30" r="2.10" fill="#ff82f8" />
<circle cx="543.67" cy="125.40" r="2.10" fill="#ff82f8" />
<circle cx="549.98" cy="119.30" r="2.10" fill="#ff82f8" />
<circle cx="549.98" cy="125.40" r="2.10" fill="#ff82f8" />
<circle cx="556.29" cy="119.30" r="2.10" fill="#ff82f8" />
<circle cx="556.29" cy="125.40" r="2.10" fill="#ff82f8" />
<circle cx="562.60" cy="119.30" r="2.10" fill="#ff82f8" />
<circle cx="562.60" cy="125.40" r="2.10" fill="#ff82f8" />
<circle cx="568.91" cy="119.30" r="2.10" fill="#ff82f8" />
<circle cx="568.91" cy="125.40" r="2.10" fill="#ff82f8" />
<circle cx="575.22" cy="119.30" r="2.10" fill="#ff82f8" />
<circle cx="575.22" cy="125.40" r="2.10" fill="#ff82f8" />
<circle cx="466.60" cy="121.40" r="1.22" fill="#ff82f8" />
<circle cx="562.10" cy="137.00" r="1.22" fill="#ff82f8" />
<circle cx="589.20" cy="125.40" r="1.22" fill="#ff82f8" />
<text x="493.50" y="120.50" font-size="3.6" fill="#9a9a9a" font-style="italic">2</text>
<text x="493.50" y="127.00" font-size="3.6" fill="#9a9a9a" font-style="italic">1</text>
<text x="579.40" y="120.20" font-size="3.2" fill="#9a9a9a" font-style="italic">26</text>
<text x="579.40" y="127.00" font-size="3.2" fill="#9a9a9a" font-style="italic">25</text>
<text x="535.50" y="134.50" font-size="3.2" fill="#9a9a9a" font-style="italic">J11</text>
<line x1="483.50" y1="142.60" x2="603.26" y2="142.60" stroke="#a84058" stroke-width="4.9" stroke-linecap="round" stroke-dasharray="0 6.300"/>
<line x1="483.50" y1="148.92" x2="603.26" y2="148.92" stroke="#a84058" stroke-width="4.9" stroke-linecap="round" stroke-dasharray="0 6.300"/>
<line x1="483.50" y1="155.24" x2="603.26" y2="155.24" stroke="#a84058" stroke-width="4.9" stroke-linecap="round" stroke-dasharray="0 6.300"/>
<line x1="483.50" y1="161.56" x2="603.26" y2="161.56" stroke="#a84058" stroke-width="4.9" stroke-linecap="round" stroke-dasharray="0 6.300"/>
<line x1="483.50" y1="167.88" x2="603.26" y2="167.88" stroke="#a84058" stroke-width="4.9" stroke-linecap="round" stroke-dasharray="0 6.300"/>
<line x1="483.50" y1="174.20" x2="603.26" y2="174.20" stroke="#a84058" stroke-width="4.9" stroke-linecap="round" stroke-dasharray="0 6.300"/>
<line x1="483.50" y1="180.52" x2="603.26" y2="180.52" stroke="#a84058" stroke-width="4.9" stroke-linecap="round" stroke-dasharray="0 6.300"/>
<line x1="483.50" y1="186.84" x2="603.26" y2="186.84" stroke="#a84058" stroke-width="4.9" stroke-linecap="round" stroke-dasharray="0 6.300"/>
<line x1="483.50" y1="193.16" x2="603.26" y2="193.16" stroke="#a84058" stroke-width="4.9" stroke-linecap="round" stroke-dasharray="0 6.300"/>
<line x1="483.50" y1="199.48" x2="603.26" y2="199.48" stroke="#a84058" stroke-width="4.9" stroke-linecap="round" stroke-dasharray="0 6.300"/>
<line x1="483.50" y1="205.80" x2="603.26" y2="205.80" stroke="#a84058" stroke-width="4.9" stroke-linecap="round" stroke-dasharray="0 6.300"/>
<line x1="483.50" y1="142.60" x2="603.26" y2="142.60" stroke="#ff82f8" stroke-width="4.15" stroke-linecap="round" stroke-dasharray="0 6.300"/>
<line x1="483.50" y1="148.92" x2="603.26" y2="148.92" stroke="#ff82f8" stroke-width="4.15" stroke-linecap="round" stroke-dasharray="0 6.300"/>
<line x1="483.50" y1="155.24" x2="603.26" y2="155.24" stroke="#ff82f8" stroke-width="4.15" stroke-linecap="round" stroke-dasharray="0 6.300"/>
<line x1="483.50" y1="161.56" x2="603.26" y2="161.56" stroke="#ff82f8" stroke-width="4.15" stroke-linecap="round" stroke-dasharray="0 6.300"/>
<line x1="483.50" y1="167.88" x2="603.26" y2="167.88" stroke="#ff82f8" stroke-width="4.15" stroke-linecap="round" stroke-dasharray="0 6.300"/>
<line x1="483.50" y1="174.20" x2="603.26" y2="174.20" stroke="#ff82f8" stroke-width="4.15" stroke-linecap="round" stroke-dasharray="0 6.300"/>
<line x1="483.50" y1="180.52" x2="603.26" y2="180.52" stroke="#ff82f8" stroke-width="4.15" stroke-linecap="round" stroke-dasharray="0 6.300"/>
<line x1="483.50" y1="186.84" x2="603.26" y2="186.84" stroke="#ff82f8" stroke-width="4.15" stroke-linecap="round" stroke-dasharray="0 6.300"/>
<line x1="483.50" y1="193.16" x2="603.26" y2="193.16" stroke="#ff82f8" stroke-width="4.15" stroke-linecap="round" stroke-dasharray="0 6.300"/>
<line x1="483.50" y1="199.48" x2="603.26" y2="199.48" stroke="#ff82f8" stroke-width="4.15" stroke-linecap="round" stroke-dasharray="0 6.300"/>
<line x1="483.50" y1="205.80" x2="603.26" y2="205.80" stroke="#ff82f8" stroke-width="4.15" stroke-linecap="round" stroke-dasharray="0 6.300"/>
<rect x="292.20" y="215.20" width="6.20" height="57.20" fill="none" stroke="#8a8a8a" stroke-width="0.5" />
<rect x="292.90" y="215.80" width="4.60" height="4.60" fill="#ff82f8" />
<circle cx="295.20" cy="224.50" r="2.35" fill="#ff82f8" />
<circle cx="295.20" cy="230.84" r="2.35" fill="#ff82f8" />
<circle cx="295.20" cy="237.18" r="2.35" fill="#ff82f8" />
<circle cx="295.20" cy="243.52" r="2.35" fill="#ff82f8" />
<circle cx="295.20" cy="249.86" r="2.35" fill="#ff82f8" />
<circle cx="295.20" cy="256.20" r="2.35" fill="#ff82f8" />
<circle cx="295.20" cy="262.54" r="2.35" fill="#ff82f8" />
<circle cx="295.20" cy="268.88" r="2.35" fill="#ff82f8" />
<polyline points="297.0,224.5 303.0,224.5" fill="none" stroke="#008a00" stroke-width="0.9199999999999999" stroke-linejoin="round"/>
<rect x="302.50" y="222.70" width="3.40" height="3.60" fill="#5c8f5c" />
<rect x="309.10" y="222.70" width="3.40" height="3.60" fill="#5c8f5c" />
<rect x="301.90" y="222.20" width="11.20" height="4.60" fill="none" stroke="#6a6a6a" stroke-width="0.4" />
<circle cx="314.80" cy="224.50" r="1.22" fill="#ff82f8" />
<text x="317.20" y="225.90" font-size="3.6" fill="#9a9a9a" font-style="italic">R9</text>
<polyline points="297.0,232.2 303.0,232.2" fill="none" stroke="#008a00" stroke-width="0.9199999999999999" stroke-linejoin="round"/>
<rect x="302.50" y="230.40" width="3.40" height="3.60" fill="#5c8f5c" />
<rect x="309.10" y="230.40" width="3.40" height="3.60" fill="#5c8f5c" />
<rect x="301.90" y="229.90" width="11.20" height="4.60" fill="none" stroke="#6a6a6a" stroke-width="0.4" />
<circle cx="314.80" cy="232.20" r="1.22" fill="#ff82f8" />
<text x="317.20" y="233.60" font-size="3.6" fill="#9a9a9a" font-style="italic">R12</text>
<polyline points="297.0,241.7 303.0,241.7" fill="none" stroke="#008a00" stroke-width="0.9199999999999999" stroke-linejoin="round"/>
<rect x="302.50" y="239.90" width="3.40" height="3.60" fill="#5c8f5c" />
<rect x="309.10" y="239.90" width="3.40" height="3.60" fill="#5c8f5c" />
<rect x="301.90" y="239.40" width="11.20" height="4.60" fill="none" stroke="#6a6a6a" stroke-width="0.4" />
<circle cx="314.80" cy="241.70" r="1.22" fill="#ff82f8" />
<text x="317.20" y="243.10" font-size="3.6" fill="#9a9a9a" font-style="italic">R10</text>
<polyline points="297.0,249.8 303.0,249.8" fill="none" stroke="#008a00" stroke-width="0.9199999999999999" stroke-linejoin="round"/>
<rect x="302.50" y="248.00" width="3.40" height="3.60" fill="#5c8f5c" />
<rect x="309.10" y="248.00" width="3.40" height="3.60" fill="#5c8f5c" />
<rect x="301.90" y="247.50" width="11.20" height="4.60" fill="none" stroke="#6a6a6a" stroke-width="0.4" />
<circle cx="314.80" cy="249.80" r="1.22" fill="#ff82f8" />
<text x="317.20" y="251.20" font-size="3.6" fill="#9a9a9a" font-style="italic">R13</text>
<polyline points="297.0,259.3 303.0,259.3" fill="none" stroke="#008a00" stroke-width="0.9199999999999999" stroke-linejoin="round"/>
<rect x="302.50" y="257.50" width="3.40" height="3.60" fill="#5c8f5c" />
<rect x="309.10" y="257.50" width="3.40" height="3.60" fill="#5c8f5c" />
<rect x="301.90" y="257.00" width="11.20" height="4.60" fill="none" stroke="#6a6a6a" stroke-width="0.4" />
<circle cx="314.80" cy="259.30" r="1.22" fill="#ff82f8" />
<text x="317.20" y="260.70" font-size="3.6" fill="#9a9a9a" font-style="italic">R11</text>
<polyline points="297.0,268.8 303.0,268.8" fill="none" stroke="#008a00" stroke-width="0.9199999999999999" stroke-linejoin="round"/>
<rect x="302.50" y="267.00" width="3.40" height="3.60" fill="#5c8f5c" />
<rect x="309.10" y="267.00" width="3.40" height="3.60" fill="#5c8f5c" />
<rect x="301.90" y="266.50" width="11.20" height="4.60" fill="none" stroke="#6a6a6a" stroke-width="0.4" />
<circle cx="314.80" cy="268.80" r="1.22" fill="#ff82f8" />
<text x="317.20" y="270.20" font-size="3.6" fill="#9a9a9a" font-style="italic">R14</text>
<text x="288.40" y="219.60" font-size="3.6" fill="#9a9a9a" font-style="italic">1</text>
<text x="301.80" y="215.20" font-size="3.4" fill="#9a9a9a" font-style="italic">J1</text>
<polyline points="307.6,231.4 307.6,211.6 323.4,196.6 466.6,196.6" fill="none" stroke="#008a00" stroke-width="1.15" stroke-linejoin="round"/>
<polyline points="368.0,199.5 450.2,199.5 450.2,230.5" fill="none" stroke="#8a8a8a" stroke-width="0.6" />
<polyline points="368.0,199.5 368.0,231.7 375.0,231.7" fill="none" stroke="#8a8a8a" stroke-width="0.6" stroke-dasharray="1.2 0.8"/>
<polyline points="380.5,235.0 376.9,230.5 376.9,221.0 380.3,217.6 434.7,217.6 439.0,221.9 439.5,226.0" fill="none" stroke="#0000ff" stroke-width="1.9040000000000001" stroke-linejoin="round"/>
<circle cx="382.40" cy="222.20" r="1.90" fill="#ff82f8" />
<circle cx="382.40" cy="231.90" r="1.90" fill="#ff82f8" />
<circle cx="379.40" cy="227.10" r="1.90" fill="#ff82f8" />
<rect x="377.50" y="234.70" width="3.80" height="3.80" fill="#ff82f8" />
<circle cx="388.64" cy="222.20" r="1.90" fill="#ff82f8" />
<circle cx="388.64" cy="231.90" r="1.90" fill="#ff82f8" />
<circle cx="385.64" cy="227.10" r="1.90" fill="#ff82f8" />
<circle cx="385.64" cy="236.60" r="1.90" fill="#ff82f8" />
<circle cx="394.88" cy="222.20" r="1.90" fill="#ff82f8" />
<circle cx="394.88" cy="231.90" r="1.90" fill="#ff82f8" />
<circle cx="391.88" cy="227.10" r="1.90" fill="#ff82f8" />
<circle cx="391.88" cy="236.60" r="1.90" fill="#ff82f8" />
<circle cx="401.12" cy="222.20" r="1.90" fill="#ff82f8" />
<circle cx="401.12" cy="231.90" r="1.90" fill="#ff82f8" />
<circle cx="398.12" cy="227.10" r="1.90" fill="#ff82f8" />
<circle cx="398.12" cy="236.60" r="1.90" fill="#ff82f8" />
<circle cx="407.36" cy="222.20" r="1.90" fill="#ff82f8" />
<circle cx="407.36" cy="231.90" r="1.90" fill="#ff82f8" />
<circle cx="404.36" cy="227.10" r="1.90" fill="#ff82f8" />
<circle cx="404.36" cy="236.60" r="1.90" fill="#ff82f8" />
<circle cx="413.60" cy="222.20" r="1.90" fill="#ff82f8" />
<circle cx="413.60" cy="231.90" r="1.90" fill="#ff82f8" />
<circle cx="410.60" cy="227.10" r="1.90" fill="#ff82f8" />
<circle cx="410.60" cy="236.60" r="1.90" fill="#ff82f8" />
<circle cx="419.84" cy="222.20" r="1.90" fill="#ff82f8" />
<circle cx="419.84" cy="231.90" r="1.90" fill="#ff82f8" />
<circle cx="416.84" cy="227.10" r="1.90" fill="#ff82f8" />
<circle cx="416.84" cy="236.60" r="1.90" fill="#ff82f8" />
<circle cx="426.08" cy="222.20" r="1.90" fill="#ff82f8" />
<circle cx="426.08" cy="231.90" r="1.90" fill="#ff82f8" />
<circle cx="423.08" cy="227.10" r="1.90" fill="#ff82f8" />
<circle cx="423.08" cy="236.60" r="1.90" fill="#ff82f8" />
<circle cx="432.32" cy="222.20" r="1.90" fill="#ff82f8" />
<circle cx="432.32" cy="231.90" r="1.90" fill="#ff82f8" />
<circle cx="429.32" cy="227.10" r="1.90" fill="#ff82f8" />
<circle cx="429.32" cy="236.60" r="1.90" fill="#ff82f8" />
<circle cx="438.56" cy="222.20" r="1.90" fill="#ff82f8" />
<circle cx="438.56" cy="231.90" r="1.90" fill="#ff82f8" />
<circle cx="435.56" cy="227.10" r="1.90" fill="#ff82f8" />
<circle cx="435.56" cy="236.60" r="1.90" fill="#ff82f8" />
<text x="360.50" y="229.80" font-size="3.8" fill="#9a9a9a" font-style="italic">J2</text>
<polyline points="407.9,241.7 407.9,206.4 415.2,200.0 466.6,200.0" fill="none" stroke="#008a00" stroke-width="1.035" stroke-linejoin="round"/>
<polyline points="412.2,217.6 417.4,212.4 466.6,212.4" fill="none" stroke="#008a00" stroke-width="1.035" stroke-linejoin="round"/>
<polyline points="428.6,217.6 430.6,215.8 466.6,215.8" fill="none" stroke="#008a00" stroke-width="1.035" stroke-linejoin="round"/>
<polyline points="439.0,240.0 458.8,221.6 466.6,221.6" fill="none" stroke="#008a00" stroke-width="1.035" stroke-linejoin="round"/>
<rect x="376.80" y="243.90" width="3.60" height="4.20" fill="#5c8f5c" />
<rect x="384.60" y="243.90" width="3.60" height="4.20" fill="#5c8f5c" />
<rect x="376.20" y="243.40" width="12.60" height="5.20" fill="none" stroke="#6a6a6a" stroke-width="0.4" />
<text x="366.60" y="248.00" font-size="3.8" fill="#9a9a9a" font-style="italic">C9</text>
<rect x="396.10" y="243.70" width="3.00" height="4.60" fill="#5c8f5c" />
<rect x="400.40" y="243.70" width="3.00" height="4.60" fill="#5c8f5c" />
<rect x="411.50" y="243.70" width="5.00" height="4.60" fill="#5c8f5c" />
<rect x="418.40" y="243.70" width="3.20" height="4.60" fill="#5c8f5c" />
<rect x="430.90" y="243.70" width="3.00" height="4.60" fill="#5c8f5c" />
<rect x="434.90" y="243.70" width="3.00" height="4.60" fill="#5c8f5c" />
<text x="441.60" y="244.00" font-size="3.6" fill="#9a9a9a" font-style="italic">C71</text>
<polyline points="380.3,248.8 339.0,285.0" fill="none" stroke="#0000ff" stroke-width="1.6800000000000002" stroke-linejoin="round"/>
<rect x="466.40" y="199.30" width="6.60" height="63.20" fill="none" stroke="#8a8a8a" stroke-width="0.55" />
<rect x="467.60" y="200.40" width="4.00" height="4.00" fill="#ff82f8" />
<circle cx="469.60" cy="208.70" r="2.00" fill="#ff82f8" />
<circle cx="469.60" cy="215.02" r="2.00" fill="#ff82f8" />
<circle cx="469.60" cy="221.34" r="2.00" fill="#ff82f8" />
<circle cx="469.60" cy="227.66" r="2.00" fill="#ff82f8" />
<circle cx="469.60" cy="233.98" r="2.00" fill="#ff82f8" />
<circle cx="469.60" cy="240.30" r="2.00" fill="#ff82f8" />
<circle cx="469.60" cy="246.62" r="2.00" fill="#ff82f8" />
<circle cx="469.60" cy="252.94" r="2.00" fill="#ff82f8" />
<circle cx="469.60" cy="259.26" r="2.00" fill="#ff82f8" />
<text x="467.00" y="197.40" font-size="3.2" fill="#9a9a9a" font-style="italic">J3</text>
<line x1="396.00" y1="255.60" x2="462.40" y2="255.60" stroke="#5c8f5c" stroke-width="6.4" stroke-dasharray="1.6 1.5"/>
<line x1="396.00" y1="267.60" x2="462.40" y2="267.60" stroke="#5c8f5c" stroke-width="7" stroke-dasharray="1.6 1.5"/>
<polyline points="396.0,259.6 462.0,259.6 462.0,263.4 396.0,263.4 396.0,259.6" fill="none" stroke="#6a6a6a" stroke-width="0.4" />
<text x="389.50" y="268.60" font-size="3.4" fill="#9a9a9a" font-style="italic">U5</text>
<polyline points="476.9,265.9 395.9,265.9 373.4,285.0" fill="none" stroke="#0000ff" stroke-width="1.344" stroke-linejoin="round"/>
<polyline points="409.7,259.0 429.5,240.0" fill="none" stroke="#0000ff" stroke-width="1.344" stroke-linejoin="round"/>
<polyline points="445.9,246.0 464.8,246.0" fill="none" stroke="#0000ff" stroke-width="1.344" stroke-linejoin="round"/>
<polyline points="432.0,259.0 436.4,254.7 462.2,254.7" fill="none" stroke="#0000ff" stroke-width="1.2320000000000002" stroke-linejoin="round"/>
<polyline points="316.6,285.0 332.9,269.0 376.0,269.0" fill="none" stroke="#008a00" stroke-width="1.035" stroke-linejoin="round"/>
<circle cx="376.00" cy="269.00" r="1.34" fill="#ff82f8" />
<circle cx="332.40" cy="274.00" r="1.34" fill="#ff82f8" />
<polyline points="332.4,274.0 332.4,320.0" fill="none" stroke="#008a00" stroke-width="1.035" stroke-linejoin="round"/>
<rect x="525.10" y="213.10" width="4.40" height="4.40" fill="#ff82f8" />
<circle cx="533.62" cy="215.30" r="2.60" fill="#ff82f8" />
<circle cx="539.94" cy="215.30" r="2.60" fill="#ff82f8" />
<circle cx="546.26" cy="215.30" r="2.60" fill="#ff82f8" />
<circle cx="552.58" cy="215.30" r="2.60" fill="#ff82f8" />
<circle cx="558.90" cy="215.30" r="2.60" fill="#ff82f8" />
<circle cx="565.22" cy="215.30" r="2.60" fill="#ff82f8" />
<circle cx="571.54" cy="215.30" r="2.60" fill="#ff82f8" />
<text x="515.50" y="212.40" font-size="3.2" fill="#9a9a9a" font-style="italic">J10</text>
<text x="523.20" y="217.00" font-size="3.2" fill="#9a9a9a" font-style="italic">1</text>
<rect x="517.80" y="231.00" width="5.60" height="55.00" fill="#0000ee" />
<rect x="519.00" y="286.00" width="3.00" height="14.00" fill="#0000ee" />
<line x1="530.60" y1="233.20" x2="574.00" y2="233.20" stroke="#5c8f5c" stroke-width="3.4" stroke-dasharray="1.6 1.2"/>
<line x1="530.60" y1="261.80" x2="575.40" y2="261.80" stroke="#5c8f5c" stroke-width="5.2" stroke-dasharray="1.6 1.2"/>
<line x1="485.60" y1="239.60" x2="516.40" y2="239.60" stroke="#5c8f5c" stroke-width="6.6" stroke-dasharray="1.6 1.3"/>
<line x1="485.60" y1="262.60" x2="516.40" y2="262.60" stroke="#5c8f5c" stroke-width="6.6" stroke-dasharray="1.6 1.3"/>
<circle cx="535.70" cy="294.30" r="3.90" fill="#ff4848" />
<circle cx="535.70" cy="294.30" r="1.64" fill="#ff9ad0" />
<rect x="356.20" y="293.45" width="63.80" height="4.30" fill="#578a5a" />
<line x1="356.20" y1="295.60" x2="420.00" y2="295.60" stroke="#6a9c6c" stroke-width="4.3" stroke-dasharray="0.85 0.6"/>
<rect x="356.20" y="366.05" width="63.80" height="4.30" fill="#578a5a" />
<line x1="356.20" y1="368.20" x2="420.00" y2="368.20" stroke="#6a9c6c" stroke-width="4.3" stroke-dasharray="0.85 0.6"/>
<rect x="350.25" y="299.80" width="4.30" height="64.70" fill="#578a5a" />
<line x1="352.40" y1="299.80" x2="352.40" y2="364.50" stroke="#6a9c6c" stroke-width="4.3" stroke-dasharray="0.85 0.6"/>
<rect x="422.65" y="299.80" width="4.30" height="64.70" fill="#578a5a" />
<line x1="424.80" y1="299.80" x2="424.80" y2="364.50" stroke="#6a9c6c" stroke-width="4.3" stroke-dasharray="0.85 0.6"/>
<circle cx="351.00" cy="294.30" r="3.80" fill="#ff4848" />
<circle cx="351.00" cy="294.30" r="1.60" fill="#ff9ad0" />
<circle cx="424.30" cy="368.80" r="3.90" fill="#ff4848" />
<circle cx="424.30" cy="368.80" r="1.64" fill="#ff9ad0" />
<rect x="466.00" y="293.85" width="65.00" height="4.30" fill="#578a5a" />
<line x1="466.00" y1="296.00" x2="531.00" y2="296.00" stroke="#6a9c6c" stroke-width="4.3" stroke-dasharray="0.85 0.6"/>
<rect x="466.00" y="366.65" width="63.50" height="4.30" fill="#578a5a" />
<line x1="466.00" y1="368.80" x2="529.50" y2="368.80" stroke="#6a9c6c" stroke-width="4.3" stroke-dasharray="0.85 0.6"/>
<rect x="460.05" y="300.20" width="4.30" height="64.30" fill="#578a5a" />
<line x1="462.20" y1="300.20" x2="462.20" y2="364.50" stroke="#6a9c6c" stroke-width="4.3" stroke-dasharray="0.85 0.6"/>
<rect x="532.05" y="300.80" width="4.30" height="63.20" fill="#578a5a" />
<line x1="534.20" y1="300.80" x2="534.20" y2="364.00" stroke="#6a9c6c" stroke-width="4.3" stroke-dasharray="0.85 0.6"/>
<circle cx="461.00" cy="368.80" r="3.90" fill="#ff4848" />
<circle cx="461.00" cy="368.80" r="1.64" fill="#ff9ad0" />
<rect x="571.00" y="293.85" width="33.00" height="4.30" fill="#578a5a" />
<line x1="571.00" y1="296.00" x2="604.00" y2="296.00" stroke="#6a9c6c" stroke-width="4.3" stroke-dasharray="0.85 0.6"/>
<rect x="570.00" y="366.65" width="34.00" height="4.30" fill="#578a5a" />
<line x1="570.00" y1="368.80" x2="604.00" y2="368.80" stroke="#6a9c6c" stroke-width="4.3" stroke-dasharray="0.85 0.6"/>
<rect x="564.25" y="300.80" width="4.30" height="65.20" fill="#578a5a" />
<line x1="566.40" y1="300.80" x2="566.40" y2="366.00" stroke="#6a9c6c" stroke-width="4.3" stroke-dasharray="0.85 0.6"/>
<circle cx="565.30" cy="368.80" r="3.90" fill="#ff4848" />
<circle cx="565.30" cy="368.80" r="1.64" fill="#ff9ad0" />
<rect x="316.60" y="315.60" width="7.40" height="3.60" fill="#5c8f5c" />
<rect x="316.60" y="329.40" width="7.40" height="3.60" fill="#5c8f5c" />
<rect x="316.90" y="319.60" width="6.80" height="9.20" fill="none" stroke="#6a6a6a" stroke-width="0.4" />
<text x="309.00" y="326.60" font-size="3.4" fill="#9a9a9a" font-style="italic">E1</text>
<rect x="290.30" y="338.30" width="10.40" height="25.30" fill="none" stroke="#8a8a8a" stroke-width="0.55" />
<circle cx="295.20" cy="340.90" r="2.10" fill="#ff82f8" />
<circle cx="295.20" cy="347.23" r="2.10" fill="#ff82f8" />
<circle cx="295.20" cy="353.56" r="2.10" fill="#ff82f8" />
<rect x="293.20" y="358.20" width="4.00" height="4.00" fill="#ff82f8" />
<text x="293.00" y="371.50" font-size="3.4" fill="#9a9a9a" font-style="italic">J9</text>
<rect x="305.30" y="337.85" width="6.20" height="1.50" fill="#5c8f5c" />
<rect x="317.30" y="337.85" width="6.20" height="1.50" fill="#5c8f5c" />
<rect x="305.30" y="340.45" width="6.20" height="1.50" fill="#5c8f5c" />
<rect x="317.30" y="340.45" width="6.20" height="1.50" fill="#5c8f5c" />
<rect x="305.30" y="343.05" width="6.20" height="1.50" fill="#5c8f5c" />
<rect x="317.30" y="343.05" width="6.20" height="1.50" fill="#5c8f5c" />
<rect x="305.30" y="345.65" width="6.20" height="1.50" fill="#5c8f5c" />
<rect x="317.30" y="345.65" width="6.20" height="1.50" fill="#5c8f5c" />
<polyline points="312.4,337.2 316.4,337.2 316.4,347.8 312.4,347.8 312.4,337.2" fill="none" stroke="#6a6a6a" stroke-width="0.4" />
<rect x="305.30" y="352.85" width="6.20" height="1.50" fill="#5c8f5c" />
<rect x="317.30" y="352.85" width="6.20" height="1.50" fill="#5c8f5c" />
<rect x="305.30" y="355.45" width="6.20" height="1.50" fill="#5c8f5c" />
<rect x="317.30" y="355.45" width="6.20" height="1.50" fill="#5c8f5c" />
<rect x="305.30" y="358.05" width="6.20" height="1.50" fill="#5c8f5c" />
<rect x="317.30" y="358.05" width="6.20" height="1.50" fill="#5c8f5c" />
<rect x="305.30" y="360.65" width="6.20" height="1.50" fill="#5c8f5c" />
<rect x="317.30" y="360.65" width="6.20" height="1.50" fill="#5c8f5c" />
<polyline points="312.4,352.2 316.4,352.2 316.4,362.8 312.4,362.8 312.4,352.2" fill="none" stroke="#6a6a6a" stroke-width="0.4" />
<text x="304.50" y="334.80" font-size="3.4" fill="#9a9a9a" font-style="italic">U14</text>
<text x="306.50" y="370.60" font-size="3.4" fill="#9a9a9a" font-style="italic">U15</text>
<rect x="316.60" y="367.10" width="7.40" height="3.40" fill="#5c8f5c" />
<polyline points="297.4,340.9 305.2,340.9" fill="none" stroke="#008a00" stroke-width="0.9199999999999999" stroke-linejoin="round"/>
<polyline points="297.4,347.2 305.2,347.2" fill="none" stroke="#008a00" stroke-width="0.9199999999999999" stroke-linejoin="round"/>
<polyline points="297.4,353.6 305.2,353.6" fill="none" stroke="#008a00" stroke-width="0.9199999999999999" stroke-linejoin="round"/>
<circle cx="302.60" cy="344.40" r="1.22" fill="#ff82f8" />
<circle cx="314.60" cy="341.20" r="1.22" fill="#ff82f8" />
<circle cx="312.20" cy="355.40" r="1.22" fill="#ff82f8" />
<circle cx="314.80" cy="360.20" r="1.22" fill="#ff82f8" />
<rect x="342.40" y="329.60" width="4.20" height="2.60" fill="#5c8f5c" />
<rect x="342.40" y="333.90" width="4.20" height="2.60" fill="#5c8f5c" />
<rect x="342.40" y="341.70" width="4.20" height="2.60" fill="#5c8f5c" />
<rect x="342.40" y="345.10" width="4.20" height="2.60" fill="#5c8f5c" />
<rect x="342.40" y="353.70" width="4.20" height="2.60" fill="#5c8f5c" />
<circle cx="339.80" cy="330.00" r="1.22" fill="#ff82f8" />
<circle cx="339.80" cy="335.00" r="1.22" fill="#ff82f8" />
<circle cx="339.80" cy="343.00" r="1.22" fill="#ff82f8" />
<circle cx="339.80" cy="347.00" r="1.22" fill="#ff82f8" />
<rect x="326.80" y="339.90" width="3.60" height="2.60" fill="#5c8f5c" />
<rect x="326.80" y="344.20" width="3.60" height="2.60" fill="#5c8f5c" />
<rect x="326.80" y="355.40" width="3.60" height="2.60" fill="#5c8f5c" />
<rect x="326.80" y="359.70" width="3.60" height="2.60" fill="#5c8f5c" />
<text x="341.00" y="326.50" font-size="3.2" fill="#9a9a9a" font-style="italic">C3</text>
<text x="341.00" y="352.00" font-size="3.2" fill="#9a9a9a" font-style="italic">C2</text>
<text x="327.00" y="334.00" font-size="3.0" fill="#9a9a9a" font-style="italic">C1</text>
<polyline points="321.7,280.0 315.7,286.0 315.7,317.0" fill="none" stroke="#008a00" stroke-width="1.035" stroke-linejoin="round"/>
<polyline points="332.4,318.8 324.8,327.4" fill="none" stroke="#008a00" stroke-width="1.035" stroke-linejoin="round"/>
<polyline points="345.9,280.0 326.0,298.1 326.0,342.0 329.5,345.5 329.5,352.0" fill="none" stroke="#0000ff" stroke-width="1.4560000000000002" stroke-linejoin="round"/>
<polyline points="348.4,318.8 380.0,349.0" fill="none" stroke="#0000ff" stroke-width="1.344" stroke-linejoin="round"/>
<polyline points="344.0,284.3 344.0,311.0 350.0,317.0" fill="none" stroke="#008a00" stroke-width="1.035" stroke-linejoin="round"/>
<rect x="290.50" y="438.00" width="182.20" height="24.00" fill="none" stroke="#8a8a8a" stroke-width="0.55" />
<circle cx="295.00" cy="438.50" r="4.00" fill="#ff4848" />
<circle cx="295.00" cy="438.50" r="1.68" fill="#ff9ad0" />
<circle cx="295.00" cy="450.20" r="4.40" fill="#ff82f8" />
<line x1="308.00" y1="441.20" x2="458.78" y2="441.20" stroke="#ff82f8" stroke-width="4.15" stroke-linecap="round" stroke-dasharray="0 6.280"/>
<line x1="308.00" y1="450.60" x2="458.78" y2="450.60" stroke="#ff82f8" stroke-width="4.15" stroke-linecap="round" stroke-dasharray="0 6.280"/>
<line x1="304.90" y1="446.00" x2="455.68" y2="446.00" stroke="#ff82f8" stroke-width="4.15" stroke-linecap="round" stroke-dasharray="0 6.280"/>
<line x1="304.90" y1="455.40" x2="455.68" y2="455.40" stroke="#ff82f8" stroke-width="4.15" stroke-linecap="round" stroke-dasharray="0 6.280"/>
<circle cx="466.00" cy="450.00" r="4.10" fill="#ff82f8" />
<text x="283.60" y="442.00" font-size="3.0" fill="#9a9a9a" font-style="italic">A1</text>
<text x="283.60" y="447.40" font-size="3.0" fill="#9a9a9a" font-style="italic">A2</text>
<text x="283.60" y="452.80" font-size="3.0" fill="#9a9a9a" font-style="italic">B1</text>
<text x="283.60" y="458.20" font-size="3.0" fill="#9a9a9a" font-style="italic">B2</text>
<polyline points="301.3,440.0 301.3,456.8 303.2,458.6 372.0,458.6 376.0,460.2" fill="none" stroke="#0000ff" stroke-width="1.4560000000000002" stroke-linejoin="round"/>
<polyline points="374.0,460.2 517.6,460.2 528.0,450.0" fill="none" stroke="#0000ff" stroke-width="2.8000000000000003" stroke-linejoin="round"/>
<rect x="324.20" y="400.20" width="52.00" height="14.20" fill="none" stroke="#8a8a8a" stroke-width="0.5" />
<line x1="328.00" y1="404.00" x2="372.37" y2="404.00" stroke="#ff82f8" stroke-width="4.9" stroke-linecap="round" stroke-dasharray="0 6.330"/>
<line x1="334.33" y1="410.50" x2="372.37" y2="410.50" stroke="#ff82f8" stroke-width="4.9" stroke-linecap="round" stroke-dasharray="0 6.330"/>
<rect x="325.70" y="408.20" width="4.60" height="4.60" fill="#ff82f8" />
<text x="350.00" y="399.40" font-size="3.2" fill="#9a9a9a" font-style="italic">J5</text>
<text x="357.00" y="422.80" font-size="3.4" fill="#9a9a9a" font-style="italic">U74</text>
<rect x="349.70" y="422.10" width="1.60" height="2.60" fill="#5c8f5c" />
<rect x="349.70" y="427.90" width="1.60" height="2.60" fill="#5c8f5c" />
<rect x="352.70" y="422.10" width="1.60" height="2.60" fill="#5c8f5c" />
<rect x="352.70" y="427.90" width="1.60" height="2.60" fill="#5c8f5c" />
<rect x="355.70" y="422.10" width="1.60" height="2.60" fill="#5c8f5c" />
<rect x="355.70" y="427.90" width="1.60" height="2.60" fill="#5c8f5c" />
<rect x="427.40" y="381.70" width="32.40" height="51.10" fill="none" stroke="#8a8a8a" stroke-width="0.6" rx="3" />
<rect x="431.60" y="385.90" width="4.20" height="4.20" fill="#ff82f8" />
<circle cx="452.00" cy="388.00" r="2.20" fill="#ff82f8" />
<circle cx="433.70" cy="407.40" r="2.20" fill="#ff82f8" />
<circle cx="452.00" cy="407.40" r="2.20" fill="#ff82f8" />
<circle cx="433.70" cy="426.00" r="2.20" fill="#ff82f8" />
<circle cx="452.00" cy="426.00" r="2.20" fill="#ff82f8" />
<text x="438.50" y="380.60" font-size="3.4" fill="#9a9a9a" font-style="italic">OSC2</text>
<line x1="471.30" y1="393.40" x2="471.30" y2="415.00" stroke="#5c8f5c" stroke-width="5.4" stroke-dasharray="1.5 1.25"/>
<line x1="483.80" y1="393.40" x2="483.80" y2="415.00" stroke="#5c8f5c" stroke-width="5.4" stroke-dasharray="1.5 1.25"/>
<polyline points="475.0,392.6 480.2,392.6 480.2,415.6 475.0,415.6 475.0,392.6" fill="none" stroke="#6a6a6a" stroke-width="0.4" />
<text x="462.50" y="391.40" font-size="3.4" fill="#9a9a9a" font-style="italic">U29</text>
<text x="488.60" y="392.40" font-size="3.2" fill="#9a9a9a" font-style="italic">C30</text>
<polyline points="381.5,371.0 381.5,438.0" fill="none" stroke="#0000ff" stroke-width="2.9120000000000004" stroke-linejoin="round"/>
<rect x="502.50" y="382.00" width="50.50" height="31.40" fill="none" stroke="#8a8a8a" stroke-width="0.6" rx="3" />
<circle cx="508.80" cy="387.50" r="2.20" fill="#ff82f8" />
<circle cx="528.00" cy="387.50" r="2.20" fill="#ff82f8" />
<circle cx="546.80" cy="387.50" r="2.20" fill="#ff82f8" />
<rect x="506.70" y="405.30" width="4.20" height="4.20" fill="#ff82f8" />
<circle cx="528.00" cy="407.40" r="2.20" fill="#ff82f8" />
<circle cx="546.80" cy="407.40" r="2.20" fill="#ff82f8" />
<text x="513.00" y="421.80" font-size="3.4" fill="#9a9a9a" font-style="italic">OSC1</text>
<circle cx="502.50" cy="447.90" r="8.30" fill="#ff82f8" />
<polyline points="604.0,437.6 536.0,437.6 536.0,462.0 604.0,462.0" fill="none" stroke="#8a8a8a" stroke-width="0.55" />
<circle cx="541.20" cy="450.20" r="4.00" fill="#ff82f8" />
<line x1="552.00" y1="441.20" x2="608.58" y2="441.20" stroke="#ff82f8" stroke-width="4.3" stroke-linecap="round" stroke-dasharray="0 6.280"/>
<line x1="552.00" y1="450.60" x2="608.58" y2="450.60" stroke="#ff82f8" stroke-width="4.3" stroke-linecap="round" stroke-dasharray="0 6.280"/>
<line x1="555.10" y1="445.80" x2="611.68" y2="445.80" stroke="#ff82f8" stroke-width="4.3" stroke-linecap="round" stroke-dasharray="0 6.280"/>
<line x1="555.10" y1="455.20" x2="611.68" y2="455.20" stroke="#ff82f8" stroke-width="4.3" stroke-linecap="round" stroke-dasharray="0 6.280"/>
<polyline points="517.0,459.0 604.0,459.0" fill="none" stroke="#008a00" stroke-width="1.15" stroke-linejoin="round"/>
<rect x="446.20" y="353.70" width="4.40" height="4.40" fill="#ff82f8" />
<circle cx="448.40" cy="363.60" r="2.50" fill="#ff82f8" />
<rect x="466" y="367.2" width="63" height="2.6" fill="#4c7ee8" opacity="0.75"/>
<rect x="565.2" y="302" width="2.4" height="62" fill="#4c7ee8" opacity="0.75"/>
<rect x="571" y="367.4" width="32" height="2.4" fill="#4c7ee8" opacity="0.6"/>
<rect x="575" y="294.6" width="28" height="2.4" fill="#4c7ee8" opacity="0.55"/>
<rect x="356.2" y="367" width="64" height="2.2" fill="#4c7ee8" opacity="0.5"/>
<rect x="530" y="231.6" width="44" height="3" fill="#4c7ee8" opacity="0.45"/>
<rect x="530" y="259.4" width="45" height="4.6" fill="#4c7ee8" opacity="0.45"/>
<rect x="396" y="264.6" width="66" height="2" fill="#4c7ee8" opacity="0.7"/>
</g></g>
<rect x="37.50" y="84.50" width="172.30" height="404.60" fill="#f1f1f1" stroke="#b4b4b4" stroke-width="0.7" rx="2.2" />
<rect x="38.00" y="85.00" width="171.30" height="12.40" fill="#f8f8f8" rx="2" />
<rect x="41.50" y="86.80" width="7.50" height="7.80" fill="#b8c4f0" stroke="#3b3fa8" stroke-width="0.8" rx="1" stroke-dasharray="0.9 0.7"/>
<rect x="43.20" y="88.30" width="4.20" height="4.90" fill="#d32f2f" />
<rect x="44.80" y="88.30" width="0.70" height="4.90" fill="#8e1b1b" />
<rect x="43.20" y="90.40" width="4.20" height="0.70" fill="#8e1b1b" />
<text x="51.40" y="93.30" font-size="6.5" fill="#151515" textLength="81.60" lengthAdjust="spacingAndGlyphs" >Layer Organizer - Sample1Up.bin</text>
<line x1="154.60" y1="91.00" x2="159.60" y2="91.00" stroke="#333" stroke-width="0.8" />
<rect x="176.00" y="88.30" width="4.60" height="4.60" fill="none" stroke="#333" stroke-width="0.8" rx="0.8" />
<path d="M197.2 88.4l4.4 4.6M201.6 88.4l-4.4 4.6" stroke="#333" stroke-width="0.8" fill="none"/>
<rect x="38.00" y="97.40" width="171.30" height="18.60" fill="#f5f5f5" />
<rect x="40.00" y="101.00" width="0.70" height="0.80" fill="#c8c8c8" />
<rect x="40.00" y="103.30" width="0.70" height="0.80" fill="#c8c8c8" />
<rect x="40.00" y="105.60" width="0.70" height="0.80" fill="#c8c8c8" />
<rect x="40.00" y="107.90" width="0.70" height="0.80" fill="#c8c8c8" />
<rect x="40.00" y="110.20" width="0.70" height="0.80" fill="#c8c8c8" />
<rect x="43.30" y="99.30" width="14.30" height="14.20" fill="#f3a6f2" stroke="#c978d2" stroke-width="0.7" rx="1.6" />
<text x="44.30" y="108.80" font-size="11" fill="#141478" font-weight="bold" >?</text>
<text x="50.00" y="112.90" font-size="10" fill="#141478" font-weight="bold" >?</text>
<rect x="60.08" y="99.30" width="14.30" height="14.20" fill="#ffee0a" stroke="#d8c800" stroke-width="0.7" rx="1.6" />
<path d="M63.2 107.4a3.7 2.9 0 1 1 3.2 2.3" fill="none" stroke="#1426d8" stroke-width="1.7"/>
<path d="M64.4 107.4l2.6 0.6-0.6 3.2z" fill="#1426d8"/>
<rect x="76.86" y="99.30" width="14.30" height="14.20" fill="#f0a4f0" stroke="#c978d2" stroke-width="0.7" rx="1.6" />
<text x="84.00" y="112.00" font-size="12.5" fill="#18f0f5" font-weight="bold" text-anchor="middle" stroke="#18f0f5" stroke-width="0.7">A</text>
<rect x="93.64" y="99.30" width="14.30" height="14.20" fill="#e8382f" stroke="#c62828" stroke-width="0.7" rx="1.6" />
<rect x="96.00" y="101.70" width="9.00" height="9.00" fill="#ffffff" />
<rect x="97.90" y="103.60" width="4.60" height="4.80" fill="#ef4a3c" />
<path d="M103.6 107.8h2.2v-2.2h1.8v2.2h2.2v1.8h-2.2v2.2h-1.8v-2.2h-2.2z" fill="#a6e000" stroke="#6f9e00" stroke-width="0.3" transform="translate(-2.4 0.4)"/>
<rect x="110.42" y="99.30" width="14.30" height="14.20" fill="#fbfbfb" stroke="#b9b9b9" stroke-width="0.7" rx="1.6" />
<path d="M114.7 101l3.1 3.6h-1.7v6.6h-2.8v-6.6h-1.7z" fill="#5aa2f5" stroke="#2b6fcf" stroke-width="0.5"/>
<path d="M120.9 111.6l3.1-3.6h-1.7v-6.4h-2.8v6.4h-1.7z" fill="#e6e619" stroke="#98a800" stroke-width="0.5"/>
<rect x="127.20" y="99.30" width="14.30" height="14.20" fill="#86d6f6" stroke="#63bfe6" stroke-width="0.7" rx="1.6" />
<path d="M134.35 106.40L139.75 106.40A5.4 5.4 0 0 1 137.97 110.40z" fill="#ff3030"/>
<path d="M134.35 106.40L138.17 110.22A5.4 5.4 0 0 1 134.08 111.79z" fill="#ff9a1f"/>
<path d="M134.35 106.40L134.35 111.80A5.4 5.4 0 0 1 130.35 110.02z" fill="#ffe81f"/>
<path d="M134.35 106.40L130.53 110.22A5.4 5.4 0 0 1 128.96 106.13z" fill="#5ae02a"/>
<path d="M134.35 106.40L128.95 106.40A5.4 5.4 0 0 1 130.73 102.40z" fill="#1fb8ff"/>
<path d="M134.35 106.40L130.53 102.58A5.4 5.4 0 0 1 134.62 101.01z" fill="#3a3aff"/>
<path d="M134.35 106.40L134.35 101.00A5.4 5.4 0 0 1 138.35 102.78z" fill="#b030ff"/>
<path d="M134.35 106.40L138.17 102.58A5.4 5.4 0 0 1 139.74 106.67z" fill="#ff30c8"/>
<circle cx="134.35" cy="106.40" r="3.10" fill="#1c1c1c" />
<text x="134.35" y="107.80" font-size="4" fill="#e8e8e8" font-weight="bold" text-anchor="middle" font-style="italic">M</text>
<rect x="143.98" y="99.30" width="14.30" height="14.20" fill="#ffee0a" stroke="#e0c000" stroke-width="0.7" rx="1.6" />
<rect x="146.20" y="101.40" width="5.00" height="1.90" fill="#3f78e0" />
<rect x="147.80" y="104.40" width="8.60" height="1.90" fill="#3f78e0" />
<rect x="145.60" y="104.40" width="1.40" height="1.90" fill="#fff" stroke="#777" stroke-width="0.3" />
<rect x="147.80" y="107.40" width="8.60" height="1.90" fill="#3f78e0" />
<rect x="145.60" y="107.40" width="1.40" height="1.90" fill="#fff" stroke="#777" stroke-width="0.3" />
<rect x="147.80" y="110.40" width="8.60" height="1.90" fill="#3f78e0" />
<rect x="145.60" y="110.40" width="1.40" height="1.90" fill="#fff" stroke="#777" stroke-width="0.3" />
<rect x="160.76" y="99.30" width="14.30" height="14.20" fill="#86d6f6" stroke="#63bfe6" stroke-width="0.7" rx="1.6" />
<path d="M167.91 106.40L173.21 106.40A5.3 5.3 0 0 1 171.47 110.33z" fill="#ff3030"/>
<path d="M167.91 106.40L171.66 110.15A5.3 5.3 0 0 1 167.65 111.69z" fill="#ff9a1f"/>
<path d="M167.91 106.40L167.91 111.70A5.3 5.3 0 0 1 163.98 109.96z" fill="#ffe81f"/>
<path d="M167.91 106.40L164.16 110.15A5.3 5.3 0 0 1 162.62 106.14z" fill="#5ae02a"/>
<path d="M167.91 106.40L162.61 106.40A5.3 5.3 0 0 1 164.35 102.47z" fill="#1fb8ff"/>
<path d="M167.91 106.40L164.16 102.65A5.3 5.3 0 0 1 168.17 101.11z" fill="#3a3aff"/>
<path d="M167.91 106.40L167.91 101.10A5.3 5.3 0 0 1 171.84 102.84z" fill="#b030ff"/>
<path d="M167.91 106.40L171.66 102.65A5.3 5.3 0 0 1 173.20 106.66z" fill="#ff30c8"/>
<circle cx="167.91" cy="106.39999999999999" r="2.6" fill="#fff" opacity="0.95"/>
<circle cx="167.91" cy="106.39999999999999" r="4" fill="#fff" opacity="0.35"/>
<rect x="177.54" y="99.30" width="14.30" height="14.20" fill="#e2f4fe" stroke="#a8d6f2" stroke-width="0.7" rx="1.6" />
<circle cx="184.69" cy="106.40" r="5.10" fill="#5f9cec" stroke="#4a86dc" stroke-width="0.6" />
<text x="184.69" y="109.40" font-size="8.5" fill="#e8f4ff" font-weight="bold" text-anchor="middle" >?</text>
<rect x="41.60" y="123.20" width="73.00" height="14.60" fill="none" stroke="#dcdcdc" stroke-width="0.7" rx="1" />
<rect x="44.60" y="120.40" width="56.00" height="5.40" fill="#f1f1f1" />
<text x="45.40" y="125.20" font-size="5.9" fill="#0c0c0c" textLength="54.00" lengthAdjust="spacingAndGlyphs" >Delete Unmapped Files?</text>
<circle cx="50.10" cy="131.60" r="2.90" fill="#0a5fc4" />
<circle cx="50.10" cy="131.60" r="1.20" fill="#ffffff" />
<text x="56.00" y="133.60" font-size="5.9" fill="#0c0c0c" textLength="8.00" lengthAdjust="spacingAndGlyphs" >Yes</text>
<circle cx="71.70" cy="131.60" r="2.70" fill="#fdfdfd" stroke="#6e6e6e" stroke-width="0.7" />
<text x="77.60" y="133.60" font-size="5.9" fill="#0c0c0c" textLength="6.40" lengthAdjust="spacingAndGlyphs" >No</text>
<text x="120.90" y="125.20" font-size="5.9" fill="#0c0c0c" textLength="45.80" lengthAdjust="spacingAndGlyphs" >Layer Color Template</text>
<rect x="119.00" y="127.90" width="85.00" height="9.40" fill="#ffffff" stroke="#d2d2d2" stroke-width="0.6" rx="1.2" />
<rect x="119.80" y="136.80" width="83.40" height="0.60" fill="#9a9a9a" />
<text x="121.20" y="134.50" font-size="5.9" fill="#0c0c0c" textLength="15.50" lengthAdjust="spacingAndGlyphs" >Default</text>
<path d="M198.30 132.00l1.5 1.5 1.5-1.5" fill="none" stroke="#555" stroke-width="0.65"/>
<rect x="41.60" y="143.30" width="164.60" height="15.40" fill="none" stroke="#dcdcdc" stroke-width="0.7" rx="1" />
<rect x="44.60" y="140.40" width="56.00" height="5.40" fill="#f1f1f1" />
<text x="45.40" y="145.30" font-size="5.9" fill="#0c0c0c" textLength="54.00" lengthAdjust="spacingAndGlyphs" >Layer Mapping Template</text>
<text x="62.90" y="153.90" font-size="5.9" fill="#0c0c0c" textLength="51.60" lengthAdjust="spacingAndGlyphs" >Choose Layer Template</text>
<rect x="119.00" y="148.00" width="85.00" height="9.20" fill="#ffffff" stroke="#d2d2d2" stroke-width="0.6" rx="1.2" />
<rect x="119.80" y="156.70" width="83.40" height="0.60" fill="#9a9a9a" />
<text x="121.20" y="154.50" font-size="5.9" fill="#0c0c0c" textLength="15.50" lengthAdjust="spacingAndGlyphs" >Default</text>
<path d="M198.30 152.00l1.5 1.5 1.5-1.5" fill="none" stroke="#555" stroke-width="0.65"/>
<rect x="41.60" y="164.70" width="164.60" height="21.20" fill="none" stroke="#dcdcdc" stroke-width="0.7" rx="1" />
<rect x="44.60" y="161.80" width="32.00" height="5.40" fill="#f1f1f1" />
<text x="45.40" y="166.70" font-size="5.9" fill="#0c0c0c" textLength="30.20" lengthAdjust="spacingAndGlyphs" >Layer Visibility</text>
<circle cx="50.00" cy="173.30" r="2.70" fill="#fdfdfd" stroke="#6e6e6e" stroke-width="0.7" />
<text x="56.60" y="175.30" font-size="5.9" fill="#0c0c0c" textLength="7.80" lengthAdjust="spacingAndGlyphs" >Top</text>
<circle cx="71.70" cy="173.30" r="2.70" fill="#fdfdfd" stroke="#6e6e6e" stroke-width="0.7" />
<text x="77.70" y="175.30" font-size="5.9" fill="#0c0c0c" textLength="15.00" lengthAdjust="spacingAndGlyphs" >Bottom</text>
<circle cx="100.00" cy="173.30" r="2.70" fill="#fdfdfd" stroke="#6e6e6e" stroke-width="0.7" />
<text x="106.00" y="175.30" font-size="5.9" fill="#0c0c0c" textLength="38.00" lengthAdjust="spacingAndGlyphs" >Inner Layers Only</text>
<circle cx="150.90" cy="173.30" r="2.90" fill="#0a5fc4" />
<circle cx="150.90" cy="173.30" r="1.20" fill="#ffffff" />
<text x="156.90" y="175.30" font-size="5.9" fill="#0c0c0c" textLength="4.60" lengthAdjust="spacingAndGlyphs" >All</text>
<rect x="168.50" y="170.50" width="5.60" height="5.60" fill="#0a5fc4" rx="1" />
<path d="M169.70 173.40l1.2 1.3 2.1-2.5" fill="none" stroke="#fff" stroke-width="0.8"/>
<text x="177.50" y="175.30" font-size="5.9" fill="#0c0c0c" textLength="23.20" lengthAdjust="spacingAndGlyphs" >Show Drills</text>
<rect x="68.80" y="179.50" width="5.40" height="5.40" fill="#fdfdfd" stroke="#6e6e6e" stroke-width="0.7" rx="1" />
<text x="77.70" y="184.20" font-size="5.9" fill="#0c0c0c" textLength="44.20" lengthAdjust="spacingAndGlyphs" >Mirror Bottom Layers</text>
<rect x="147.40" y="179.50" width="5.40" height="5.40" fill="#fdfdfd" stroke="#6e6e6e" stroke-width="0.7" rx="1" />
<text x="156.00" y="184.20" font-size="5.9" fill="#0c0c0c" textLength="42.00" lengthAdjust="spacingAndGlyphs" >Add Internal Layers</text>
<rect x="42.00" y="195.60" width="59.20" height="8.10" fill="#b4c8e8" />
<text x="71.60" y="201.65" font-size="5.6" fill="#101010" textLength="30.29" lengthAdjust="spacingAndGlyphs" text-anchor="middle" >Board Outline</text>
<rect x="104.00" y="195.30" width="100.40" height="8.60" fill="#ffffff" stroke="#d2d2d2" stroke-width="0.6" rx="1.2" />
<rect x="104.80" y="203.40" width="98.80" height="0.60" fill="#9a9a9a" />
<text x="106.00" y="201.50" font-size="5.6" fill="#0c0c0c" textLength="32.50" lengthAdjust="spacingAndGlyphs" >Sample1up.oln</text>
<path d="M198.70 199.00l1.5 1.5 1.5-1.5" fill="none" stroke="#555" stroke-width="0.65"/>
<rect x="42.00" y="205.30" width="59.20" height="8.10" fill="#70859c" />
<text x="71.60" y="211.35" font-size="5.6" fill="#101010" textLength="25.63" lengthAdjust="spacingAndGlyphs" text-anchor="middle" >Top Stencil</text>
<rect x="104.00" y="205.00" width="100.40" height="8.60" fill="#ffffff" stroke="#d2d2d2" stroke-width="0.6" rx="1.2" />
<rect x="104.80" y="213.10" width="98.80" height="0.60" fill="#9a9a9a" />
<path d="M198.70 208.70l1.5 1.5 1.5-1.5" fill="none" stroke="#555" stroke-width="0.65"/>
<rect x="42.00" y="214.90" width="59.20" height="8.10" fill="#fff8d8" />
<text x="71.60" y="220.95" font-size="5.6" fill="#101010" textLength="37.28" lengthAdjust="spacingAndGlyphs" text-anchor="middle" >Top Solder Paste</text>
<rect x="104.00" y="214.60" width="100.40" height="8.60" fill="#ffffff" stroke="#d2d2d2" stroke-width="0.6" rx="1.2" />
<rect x="104.80" y="222.70" width="98.80" height="0.60" fill="#9a9a9a" />
<text x="106.00" y="220.80" font-size="5.6" fill="#0c0c0c" textLength="30.00" lengthAdjust="spacingAndGlyphs" >Sample1up.p1</text>
<path d="M198.70 218.30l1.5 1.5 1.5-1.5" fill="none" stroke="#555" stroke-width="0.65"/>
<rect x="42.00" y="224.60" width="59.20" height="8.10" fill="#ffff00" />
<text x="71.60" y="230.65" font-size="5.6" fill="#101010" textLength="34.95" lengthAdjust="spacingAndGlyphs" text-anchor="middle" >Top Silk Screen</text>
<rect x="104.00" y="224.30" width="100.40" height="8.60" fill="#ffffff" stroke="#d2d2d2" stroke-width="0.6" rx="1.2" />
<rect x="104.80" y="232.40" width="98.80" height="0.60" fill="#9a9a9a" />
<text x="106.00" y="230.50" font-size="5.6" fill="#0c0c0c" textLength="30.00" lengthAdjust="spacingAndGlyphs" >Sample1up.s1</text>
<path d="M198.70 228.00l1.5 1.5 1.5-1.5" fill="none" stroke="#555" stroke-width="0.65"/>
<rect x="42.00" y="234.30" width="59.20" height="8.10" fill="#90ee90" />
<text x="71.60" y="240.35" font-size="5.6" fill="#101010" textLength="34.95" lengthAdjust="spacingAndGlyphs" text-anchor="middle" >Top Solder Mask</text>
<rect x="104.00" y="234.00" width="100.40" height="8.60" fill="#ffffff" stroke="#d2d2d2" stroke-width="0.6" rx="1.2" />
<rect x="104.80" y="242.10" width="98.80" height="0.60" fill="#9a9a9a" />
<text x="106.00" y="240.20" font-size="5.6" fill="#0c0c0c" textLength="30.00" lengthAdjust="spacingAndGlyphs" >Sample1up.m1</text>
<path d="M198.70 237.70l1.5 1.5 1.5-1.5" fill="none" stroke="#555" stroke-width="0.65"/>
<rect x="42.00" y="244.00" width="59.20" height="8.10" fill="#ffa07a" />
<text x="71.60" y="250.05" font-size="5.6" fill="#101010" textLength="23.30" lengthAdjust="spacingAndGlyphs" text-anchor="middle" >Top Copper</text>
<rect x="104.00" y="243.70" width="100.40" height="8.60" fill="#ffffff" stroke="#d2d2d2" stroke-width="0.6" rx="1.2" />
<rect x="104.80" y="251.80" width="98.80" height="0.60" fill="#9a9a9a" />
<text x="106.00" y="249.90" font-size="5.6" fill="#0c0c0c" textLength="27.50" lengthAdjust="spacingAndGlyphs" >Sample1up.1</text>
<path d="M198.70 247.40l1.5 1.5 1.5-1.5" fill="none" stroke="#555" stroke-width="0.65"/>
<rect x="42.00" y="253.70" width="59.20" height="8.10" fill="#808080" />
<text x="71.60" y="259.75" font-size="5.6" fill="#101010" text-anchor="middle" >2</text>
<rect x="104.00" y="253.40" width="100.40" height="8.60" fill="#ffffff" stroke="#d2d2d2" stroke-width="0.6" rx="1.2" />
<rect x="104.80" y="261.50" width="98.80" height="0.60" fill="#9a9a9a" />
<path d="M198.70 257.10l1.5 1.5 1.5-1.5" fill="none" stroke="#555" stroke-width="0.65"/>
<rect x="42.00" y="263.40" width="59.20" height="8.10" fill="#808080" />
<text x="71.60" y="269.45" font-size="5.6" fill="#101010" text-anchor="middle" >3</text>
<rect x="104.00" y="263.10" width="100.40" height="8.60" fill="#ffffff" stroke="#d2d2d2" stroke-width="0.6" rx="1.2" />
<rect x="104.80" y="271.20" width="98.80" height="0.60" fill="#9a9a9a" />
<path d="M198.70 266.80l1.5 1.5 1.5-1.5" fill="none" stroke="#555" stroke-width="0.65"/>
<rect x="42.00" y="273.10" width="59.20" height="8.10" fill="#808080" />
<text x="71.60" y="279.15" font-size="5.6" fill="#101010" text-anchor="middle" >4</text>
<rect x="104.00" y="272.80" width="100.40" height="8.60" fill="#ffffff" stroke="#d2d2d2" stroke-width="0.6" rx="1.2" />
<rect x="104.80" y="280.90" width="98.80" height="0.60" fill="#9a9a9a" />
<path d="M198.70 276.50l1.5 1.5 1.5-1.5" fill="none" stroke="#555" stroke-width="0.65"/>
<rect x="42.00" y="282.80" width="59.20" height="8.10" fill="#808080" />
<text x="71.60" y="288.85" font-size="5.6" fill="#101010" text-anchor="middle" >5</text>
<rect x="104.00" y="282.50" width="100.40" height="8.60" fill="#ffffff" stroke="#d2d2d2" stroke-width="0.6" rx="1.2" />
<rect x="104.80" y="290.60" width="98.80" height="0.60" fill="#9a9a9a" />
<path d="M198.70 286.20l1.5 1.5 1.5-1.5" fill="none" stroke="#555" stroke-width="0.65"/>
<rect x="42.00" y="292.50" width="59.20" height="8.10" fill="#808080" />
<text x="71.60" y="298.55" font-size="5.6" fill="#101010" text-anchor="middle" >6</text>
<rect x="104.00" y="292.20" width="100.40" height="8.60" fill="#ffffff" stroke="#d2d2d2" stroke-width="0.6" rx="1.2" />
<rect x="104.80" y="300.30" width="98.80" height="0.60" fill="#9a9a9a" />
<path d="M198.70 295.90l1.5 1.5 1.5-1.5" fill="none" stroke="#555" stroke-width="0.65"/>
<rect x="42.00" y="302.20" width="59.20" height="8.10" fill="#808080" />
<text x="71.60" y="308.25" font-size="5.6" fill="#101010" text-anchor="middle" >7</text>
<rect x="104.00" y="301.90" width="100.40" height="8.60" fill="#ffffff" stroke="#d2d2d2" stroke-width="0.6" rx="1.2" />
<rect x="104.80" y="310.00" width="98.80" height="0.60" fill="#9a9a9a" />
<path d="M198.70 305.60l1.5 1.5 1.5-1.5" fill="none" stroke="#555" stroke-width="0.65"/>
<rect x="42.00" y="311.80" width="59.20" height="8.10" fill="#808080" />
<text x="71.60" y="317.85" font-size="5.6" fill="#101010" text-anchor="middle" >8</text>
<rect x="104.00" y="311.50" width="100.40" height="8.60" fill="#ffffff" stroke="#d2d2d2" stroke-width="0.6" rx="1.2" />
<rect x="104.80" y="319.60" width="98.80" height="0.60" fill="#9a9a9a" />
<path d="M198.70 315.20l1.5 1.5 1.5-1.5" fill="none" stroke="#555" stroke-width="0.65"/>
<rect x="42.00" y="321.40" width="59.20" height="8.10" fill="#808080" />
<text x="71.60" y="327.45" font-size="5.6" fill="#101010" text-anchor="middle" >9</text>
<rect x="104.00" y="321.10" width="100.40" height="8.60" fill="#ffffff" stroke="#d2d2d2" stroke-width="0.6" rx="1.2" />
<rect x="104.80" y="329.20" width="98.80" height="0.60" fill="#9a9a9a" />
<path d="M198.70 324.80l1.5 1.5 1.5-1.5" fill="none" stroke="#555" stroke-width="0.65"/>
<rect x="42.00" y="331.00" width="59.20" height="8.10" fill="#808080" />
<text x="71.60" y="337.05" font-size="5.6" fill="#101010" text-anchor="middle" >10</text>
<rect x="104.00" y="330.70" width="100.40" height="8.60" fill="#ffffff" stroke="#d2d2d2" stroke-width="0.6" rx="1.2" />
<rect x="104.80" y="338.80" width="98.80" height="0.60" fill="#9a9a9a" />
<path d="M198.70 334.40l1.5 1.5 1.5-1.5" fill="none" stroke="#555" stroke-width="0.65"/>
<rect x="42.00" y="340.70" width="59.20" height="8.10" fill="#808080" />
<text x="71.60" y="346.75" font-size="5.6" fill="#101010" text-anchor="middle" >11</text>
<rect x="104.00" y="340.40" width="100.40" height="8.60" fill="#ffffff" stroke="#d2d2d2" stroke-width="0.6" rx="1.2" />
<rect x="104.80" y="348.50" width="98.80" height="0.60" fill="#9a9a9a" />
<path d="M198.70 344.10l1.5 1.5 1.5-1.5" fill="none" stroke="#555" stroke-width="0.65"/>
<rect x="42.00" y="351.50" width="59.20" height="8.10" fill="#ffa07a" />
<text x="71.60" y="357.55" font-size="5.6" fill="#101010" textLength="30.29" lengthAdjust="spacingAndGlyphs" text-anchor="middle" >Bottom Copper</text>
<rect x="104.00" y="351.20" width="100.40" height="8.60" fill="#ffffff" stroke="#d2d2d2" stroke-width="0.6" rx="1.2" />
<rect x="104.80" y="359.30" width="98.80" height="0.60" fill="#9a9a9a" />
<text x="106.00" y="357.40" font-size="5.6" fill="#0c0c0c" textLength="32.50" lengthAdjust="spacingAndGlyphs" >Sample1up.6as</text>
<path d="M198.70 354.90l1.5 1.5 1.5-1.5" fill="none" stroke="#555" stroke-width="0.65"/>
<rect x="42.00" y="361.90" width="59.20" height="8.10" fill="#90ee90" />
<text x="71.60" y="367.95" font-size="5.6" fill="#101010" textLength="41.94" lengthAdjust="spacingAndGlyphs" text-anchor="middle" >Bottom Solder Mask</text>
<rect x="104.00" y="361.60" width="100.40" height="8.60" fill="#ffffff" stroke="#d2d2d2" stroke-width="0.6" rx="1.2" />
<rect x="104.80" y="369.70" width="98.80" height="0.60" fill="#9a9a9a" />
<text x="106.00" y="367.80" font-size="5.6" fill="#0c0c0c" textLength="30.00" lengthAdjust="spacingAndGlyphs" >Sample1up.m6</text>
<path d="M198.70 365.30l1.5 1.5 1.5-1.5" fill="none" stroke="#555" stroke-width="0.65"/>
<rect x="42.00" y="372.10" width="59.20" height="8.10" fill="#ffff00" />
<text x="71.60" y="378.15" font-size="5.6" fill="#101010" textLength="41.94" lengthAdjust="spacingAndGlyphs" text-anchor="middle" >Bottom Silk Screen</text>
<rect x="104.00" y="371.80" width="100.40" height="8.60" fill="#ffffff" stroke="#d2d2d2" stroke-width="0.6" rx="1.2" />
<rect x="104.80" y="379.90" width="98.80" height="0.60" fill="#9a9a9a" />
<path d="M198.70 375.50l1.5 1.5 1.5-1.5" fill="none" stroke="#555" stroke-width="0.65"/>
<rect x="42.00" y="382.40" width="59.20" height="8.10" fill="#fff8d8" />
<text x="71.60" y="388.45" font-size="5.6" fill="#101010" textLength="44.27" lengthAdjust="spacingAndGlyphs" text-anchor="middle" >Bottom Solder Paste</text>
<rect x="104.00" y="382.10" width="100.40" height="8.60" fill="#ffffff" stroke="#d2d2d2" stroke-width="0.6" rx="1.2" />
<rect x="104.80" y="390.20" width="98.80" height="0.60" fill="#9a9a9a" />
<path d="M198.70 385.80l1.5 1.5 1.5-1.5" fill="none" stroke="#555" stroke-width="0.65"/>
<rect x="42.00" y="392.50" width="59.20" height="8.10" fill="#aed8e8" />
<text x="71.60" y="398.55" font-size="5.6" fill="#101010" textLength="30.29" lengthAdjust="spacingAndGlyphs" text-anchor="middle" >Plated Drills</text>
<rect x="104.00" y="392.20" width="100.40" height="8.60" fill="#ffffff" stroke="#d2d2d2" stroke-width="0.6" rx="1.2" />
<rect x="104.80" y="400.30" width="98.80" height="0.60" fill="#9a9a9a" />
<path d="M198.70 395.90l1.5 1.5 1.5-1.5" fill="none" stroke="#555" stroke-width="0.65"/>
<rect x="42.00" y="402.80" width="59.20" height="8.10" fill="#aed8e8" />
<text x="71.60" y="408.85" font-size="5.6" fill="#101010" textLength="39.61" lengthAdjust="spacingAndGlyphs" text-anchor="middle" >Non-plated Drills</text>
<rect x="104.00" y="402.50" width="100.40" height="8.60" fill="#ffffff" stroke="#d2d2d2" stroke-width="0.6" rx="1.2" />
<rect x="104.80" y="410.60" width="98.80" height="0.60" fill="#9a9a9a" />
<path d="M198.70 406.20l1.5 1.5 1.5-1.5" fill="none" stroke="#555" stroke-width="0.65"/>
<rect x="42.00" y="413.30" width="59.20" height="8.10" fill="#f08080" />
<text x="71.60" y="419.35" font-size="5.6" fill="#101010" textLength="48.93" lengthAdjust="spacingAndGlyphs" text-anchor="middle" >Plated Internal Routs</text>
<rect x="104.00" y="413.00" width="100.40" height="8.60" fill="#ffffff" stroke="#d2d2d2" stroke-width="0.6" rx="1.2" />
<rect x="104.80" y="421.10" width="98.80" height="0.60" fill="#9a9a9a" />
<path d="M198.70 416.70l1.5 1.5 1.5-1.5" fill="none" stroke="#555" stroke-width="0.65"/>
<rect x="42.00" y="423.60" width="59.20" height="8.10" fill="#f08080" />
<text x="71.60" y="429.65" font-size="5.6" fill="#101010" textLength="51.26" lengthAdjust="spacingAndGlyphs" text-anchor="middle" >NonPlatedInternalRouts</text>
<rect x="104.00" y="423.30" width="100.40" height="8.60" fill="#ffffff" stroke="#d2d2d2" stroke-width="0.6" rx="1.2" />
<rect x="104.80" y="431.40" width="98.80" height="0.60" fill="#9a9a9a" />
<path d="M198.70 427.00l1.5 1.5 1.5-1.5" fill="none" stroke="#555" stroke-width="0.65"/>
<defs><linearGradient id="sbg" x1="0" y1="0" x2="0" y2="1"><stop offset="0" stop-color="#dedede"/><stop offset="1" stop-color="#f3f3f3"/></linearGradient></defs>
<rect x="37.00" y="491.20" width="566.00" height="21.00" fill="#f1f1f1" />
<rect x="37.00" y="504.60" width="186.00" height="7.60" fill="url(#sbg)" />
<rect x="37.00" y="491.20" width="185.00" height="13.60" fill="#dcdcdc" />
<rect x="222.00" y="491.20" width="150.50" height="12.20" fill="#fbfbfb" />
<rect x="372.50" y="491.20" width="231.00" height="12.20" fill="#ffffff" />
<rect x="221.20" y="492.20" width="0.80" height="11.40" fill="#b0b0b0" />
<rect x="372.30" y="491.60" width="0.70" height="11.60" fill="#bdbdbd" />
<rect x="40.70" y="494.40" width="23.40" height="8.20" fill="#ececec" stroke="#c4c4c4" stroke-width="0.6" rx="1" />
<text x="42.40" y="500.40" font-size="5.4" fill="#141414" textLength="9.40" lengthAdjust="spacingAndGlyphs" >inch</text>
<path d="M58.6 497.8l1.5 1.5 1.5-1.5" fill="none" stroke="#666" stroke-width="0.65"/>
<rect x="68.40" y="494.40" width="7.80" height="8.20" fill="#e9e9e9" stroke="#c8c8c8" stroke-width="0.5" />
<text x="70.00" y="500.40" font-size="5.4" fill="#141414" textLength="5.00" lengthAdjust="spacingAndGlyphs" >X:</text>
<rect x="76.60" y="494.40" width="30.60" height="8.20" fill="#d6d6d6" />
<text x="78.40" y="500.40" font-size="5.4" fill="#141414" textLength="21.60" lengthAdjust="spacingAndGlyphs" >6.585132</text>
<rect x="110.90" y="494.40" width="7.80" height="8.20" fill="#e9e9e9" stroke="#c8c8c8" stroke-width="0.5" />
<text x="112.50" y="500.40" font-size="5.4" fill="#141414" textLength="5.00" lengthAdjust="spacingAndGlyphs" >Y:</text>
<rect x="119.10" y="494.40" width="30.60" height="8.20" fill="#d6d6d6" />
<text x="121.00" y="500.40" font-size="5.4" fill="#141414" textLength="22.70" lengthAdjust="spacingAndGlyphs" >-0.555107</text>
<path d="M152 502.2h8l-1.2-6.6z" fill="none" stroke="#333" stroke-width="0.8"/>
<circle cx="165.60" cy="498.40" r="3.00" fill="none" stroke="#333" stroke-width="0.8" />
<line x1="162.00" y1="498.40" x2="169.20" y2="498.40" stroke="#333" stroke-width="0.7" />
<line x1="165.60" y1="494.80" x2="165.60" y2="502.00" stroke="#333" stroke-width="0.7" />
<path d="M174 502l2.6-3.2M176 497l2.4-2.2 2.2 2.2-2.4 2.2z" fill="#444" stroke="#444" stroke-width="0.8"/>
<text x="183.80" y="500.40" font-size="5.4" fill="#141414" textLength="13.60" lengthAdjust="spacingAndGlyphs" >Zoom:</text>
<rect x="198.60" y="494.20" width="20.60" height="8.40" fill="#f4f4f4" stroke="#cfcfcf" stroke-width="0.5" />
<text x="199.60" y="500.40" font-size="5.4" fill="#141414" textLength="15.40" lengthAdjust="spacingAndGlyphs" >1.4024</text>
<circle cx="226.90" cy="497.40" r="2.50" fill="#19d8e6" stroke="#2a2a2a" stroke-width="0.6" />
<line x1="228.70" y1="499.40" x2="231.30" y2="502.20" stroke="#111" stroke-width="1.2" />
<rect x="238.20" y="497.60" width="4.60" height="4.40" fill="#e53935" />
<circle cx="238.20" cy="497.00" r="2.50" fill="#6a3fe0" stroke="#2a2a2a" stroke-width="0.6" />
<line x1="240.00" y1="499.00" x2="242.60" y2="501.80" stroke="#111" stroke-width="1.2" />
<circle cx="248.40" cy="497.40" r="2.50" fill="#3f9fe6" stroke="#2a2a2a" stroke-width="0.6" />
<line x1="250.20" y1="499.40" x2="252.80" y2="502.20" stroke="#111" stroke-width="1.2" />
<rect x="258.60" y="494.60" width="7.20" height="7.20" fill="#ff8a8a" />
<rect x="259.60" y="495.40" width="5.20" height="3.40" fill="#ef4a4a" />
<text x="262.20" y="501.60" font-size="3.2" fill="#222" text-anchor="middle" >oo</text>
<rect x="267.80" y="494.60" width="7.20" height="7.20" fill="#ff8a8a" />
<rect x="268.40" y="495.40" width="6.00" height="5.60" fill="#ef4a4a" />
<line x1="271.40" y1="494.80" x2="271.40" y2="501.60" stroke="#7a4a4a" stroke-width="0.6" />
<line x1="268.00" y1="498.20" x2="274.80" y2="498.20" stroke="#7a4a4a" stroke-width="0.6" />
<rect x="280.10" y="494.60" width="7.40" height="7.40" fill="#ff8a8a" />
<rect x="280.70" y="495.20" width="6.20" height="6.20" fill="#ef4a4a" />
<path d="M286.6 498.3h-4.6M283.2 496.3l-2.2 2 2.2 2" stroke="#111" stroke-width="1.1" fill="none"/>
<rect x="290.00" y="494.60" width="7.40" height="7.40" fill="#ff8a8a" />
<rect x="290.60" y="495.20" width="6.20" height="6.20" fill="#ef4a4a" />
<path d="M290.9 498.3h4.6M294.3 496.3l2.2 2-2.2 2" stroke="#111" stroke-width="1.1" fill="none"/>
<rect x="299.60" y="494.60" width="7.40" height="7.40" fill="#ff8a8a" />
<rect x="300.20" y="495.20" width="6.20" height="6.20" fill="#ef4a4a" />
<path d="M303.3 495.5v4.6M301.3 498.90000000000003l2 2.2 2-2.2" stroke="#111" stroke-width="1.1" fill="none"/>
<rect x="309.50" y="494.60" width="7.40" height="7.40" fill="#ff8a8a" />
<rect x="310.10" y="495.20" width="6.20" height="6.20" fill="#ef4a4a" />
<path d="M313.2 501.1v-4.6M311.2 497.7l2-2.2 2 2.2" stroke="#111" stroke-width="1.1" fill="none"/>
<rect x="323.00" y="494.60" width="6.40" height="6.40" fill="#ff8a8a" />
<rect x="324.40" y="495.00" width="4.80" height="4.40" fill="#ef4a4a" />
<circle cx="323.60" cy="500.60" r="1.10" fill="none" stroke="#222" stroke-width="0.6" />
<rect x="332.10" y="494.60" width="7.00" height="6.60" fill="#ff8a8a" />
<rect x="333.40" y="495.60" width="5.60" height="4.00" fill="#ef4a4a" />
<line x1="332.40" y1="500.60" x2="338.60" y2="496.40" stroke="#222" stroke-width="0.9" />
<circle cx="332.80" cy="500.80" r="1.00" fill="none" stroke="#222" stroke-width="0.6" />
<rect x="341.70" y="494.60" width="7.00" height="6.80" fill="#ff8a8a" />
<rect x="342.60" y="495.20" width="5.60" height="5.60" fill="#ef4a4a" />
<line x1="342.40" y1="495.00" x2="348.20" y2="501.40" stroke="#222" stroke-width="1" />
<line x1="342.40" y1="498.00" x2="346.00" y2="495.00" stroke="#222" stroke-width="0.8" />
<rect x="353.60" y="495.20" width="6.20" height="6.20" fill="#fff" stroke="#555" stroke-width="0.7" />
<line x1="352.60" y1="502.00" x2="359.60" y2="494.80" stroke="#111" stroke-width="1" />
<rect x="363.60" y="494.80" width="6.40" height="6.80" fill="#fff" stroke="#888" stroke-width="0.6" />
<path d="M365 496.2l3.6 4M368.6 496.2l-3.6 4" stroke="#e53935" stroke-width="1.1" fill="none"/>
</g>
</svg>
</body></html>
